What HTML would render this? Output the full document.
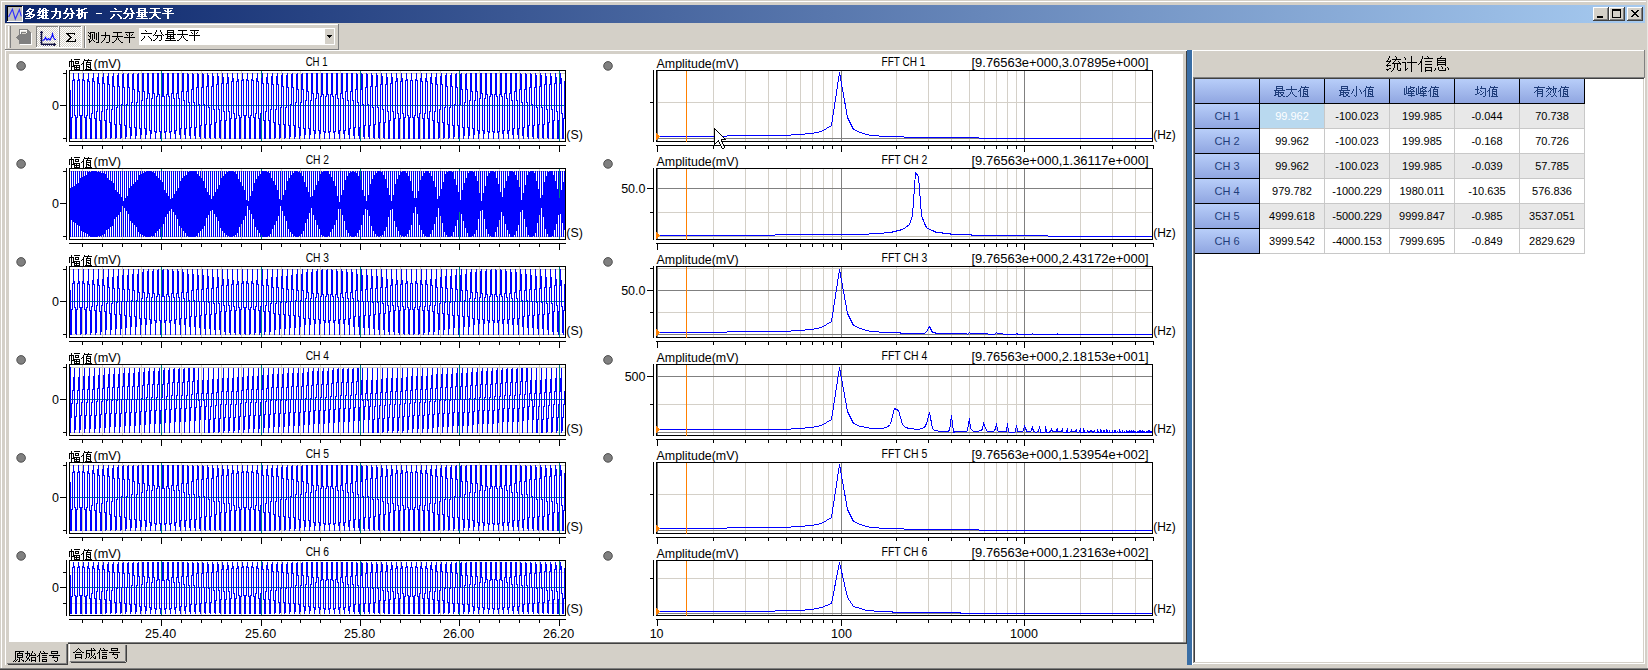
<!DOCTYPE html>
<html><head><meta charset="utf-8"><title>多维力分析 - 六分量天平</title>
<style>
html,body{margin:0;padding:0;background:#d4d0c8;width:1648px;height:670px;overflow:hidden}
svg{position:absolute;left:0;top:0;display:block}
svg path,svg rect,svg polyline{shape-rendering:crispEdges}
svg text{font-family:"Liberation Sans",sans-serif;white-space:pre}
</style></head><body>
<svg width="1648" height="670" viewBox="0 0 1648 670">
<defs>
<linearGradient id="tg" x1="0" y1="0" x2="1" y2="0"><stop offset="0" stop-color="#0a246a"/><stop offset="1" stop-color="#a6caf0"/></linearGradient>
<linearGradient id="hg" x1="0" y1="0" x2="0" y2="1"><stop offset="0" stop-color="#b8cef9"/><stop offset="1" stop-color="#90a6e1"/></linearGradient>
<pattern id="dz" width="2" height="2" patternUnits="userSpaceOnUse"><rect width="2" height="2" fill="#fff"/><rect width="1" height="1" fill="#d4d0c8"/><rect x="1" y="1" width="1" height="1" fill="#d4d0c8"/></pattern>
</defs>
<path fill="#fff" d="M1 1h1645v1h-1645zM1 1h1v667h-1z"/>
<path fill="#808080" d="M0 668h1648v1h-1648z"/>
<path fill="#404040" d="M0 669h1648v1h-1648z"/>
<path fill="#e9e7e3" d="M1647 0h1v668h-1z"/>
<rect x="5" y="5" width="1640" height="18" fill="url(#tg)"/>
<path fill="#c0c0c0" d="M7 6h16v16h-16z"/>
<path fill="#000" d="M7 6h15v1h-15zM7 6h1v15h-1z"/>
<path fill="#fff" d="M7 21h16v1h-16zM22 6h1v16h-1z"/>
<polyline points="8.6,17 12.4,9.3 15.3,19 19.4,9.6 21.3,16.3" fill="none" stroke="#3030ff" stroke-width="1.15" style="shape-rendering:geometricPrecision"/>
<path fill="#fff" d="M29 8h2v1h-2zM39 8h2v1h-2zM43 8h3v1h-3zM55 8h2v1h-2zM66 8h2v1h-2zM70 8h2v1h-2zM78 8h2v1h-2zM84 8h3v1h-3zM114 8h2v1h-2zM126 8h2v1h-2zM130 8h2v1h-2zM138 8h8v1h-8zM150 8h10v1h-10zM163 8h10v1h-10zM28 9h6v1h-6zM39 9h2v1h-2zM42 9h2v1h-2zM45 9h2v1h-2zM55 9h2v1h-2zM66 9h2v1h-2zM70 9h2v1h-2zM78 9h2v1h-2zM81 9h4v1h-4zM115 9h2v1h-2zM126 9h2v1h-2zM130 9h2v1h-2zM138 9h2v1h-2zM144 9h2v1h-2zM154 9h2v1h-2zM167 9h2v1h-2zM27 10h2v1h-2zM32 10h2v1h-2zM38 10h2v1h-2zM41 10h8v1h-8zM55 10h2v1h-2zM65 10h2v1h-2zM71 10h2v1h-2zM76 10h7v1h-7zM125 10h2v1h-2zM131 10h2v1h-2zM138 10h8v1h-8zM154 10h2v1h-2zM164 10h2v1h-2zM167 10h2v1h-2zM170 10h2v1h-2zM26 11h4v1h-4zM31 11h2v1h-2zM38 11h6v1h-6zM45 11h2v1h-2zM51 11h10v1h-10zM65 11h2v1h-2zM71 11h2v1h-2zM78 11h2v1h-2zM81 11h2v1h-2zM110 11h12v1h-12zM125 11h2v1h-2zM131 11h2v1h-2zM138 11h2v1h-2zM144 11h2v1h-2zM154 11h2v1h-2zM165 11h6v1h-6zM29 12h3v1h-3zM37 12h4v1h-4zM42 12h6v1h-6zM55 12h2v1h-2zM59 12h2v1h-2zM64 12h2v1h-2zM72 12h2v1h-2zM78 12h2v1h-2zM81 12h7v1h-7zM124 12h2v1h-2zM132 12h2v1h-2zM136 12h12v1h-12zM149 12h12v1h-12zM167 12h2v1h-2zM27 13h5v1h-5zM39 13h2v1h-2zM42 13h2v1h-2zM45 13h2v1h-2zM55 13h2v1h-2zM59 13h2v1h-2zM63 13h12v1h-12zM78 13h5v1h-5zM84 13h2v1h-2zM96 13h6v1h-6zM123 13h12v1h-12zM138 13h2v1h-2zM141 13h2v1h-2zM144 13h2v1h-2zM154 13h2v1h-2zM162 13h12v1h-12zM25 14h3v1h-3zM29 14h6v1h-6zM38 14h2v1h-2zM42 14h2v1h-2zM45 14h2v1h-2zM54 14h2v1h-2zM59 14h2v1h-2zM67 14h2v1h-2zM71 14h2v1h-2zM77 14h6v1h-6zM84 14h2v1h-2zM113 14h2v1h-2zM117 14h2v1h-2zM127 14h2v1h-2zM131 14h2v1h-2zM138 14h8v1h-8zM153 14h4v1h-4zM167 14h2v1h-2zM28 15h2v1h-2zM33 15h2v1h-2zM37 15h11v1h-11zM54 15h2v1h-2zM59 15h2v1h-2zM67 15h2v1h-2zM71 15h2v1h-2zM76 15h4v1h-4zM81 15h2v1h-2zM84 15h2v1h-2zM113 15h2v1h-2zM118 15h2v1h-2zM127 15h2v1h-2zM131 15h2v1h-2zM138 15h2v1h-2zM141 15h2v1h-2zM144 15h2v1h-2zM153 15h4v1h-4zM167 15h2v1h-2zM26 16h5v1h-5zM32 16h2v1h-2zM41 16h3v1h-3zM45 16h2v1h-2zM53 16h2v1h-2zM59 16h2v1h-2zM66 16h2v1h-2zM71 16h2v1h-2zM78 16h2v1h-2zM81 16h2v1h-2zM84 16h2v1h-2zM112 16h2v1h-2zM119 16h2v1h-2zM126 16h2v1h-2zM131 16h2v1h-2zM137 16h10v1h-10zM152 16h2v1h-2zM156 16h2v1h-2zM167 16h2v1h-2zM30 17h3v1h-3zM39 17h5v1h-5zM45 17h2v1h-2zM52 17h2v1h-2zM59 17h2v1h-2zM65 17h2v1h-2zM71 17h2v1h-2zM78 17h4v1h-4zM84 17h2v1h-2zM111 17h2v1h-2zM120 17h2v1h-2zM125 17h2v1h-2zM131 17h2v1h-2zM141 17h2v1h-2zM151 17h2v1h-2zM157 17h2v1h-2zM167 17h2v1h-2zM25 18h6v1h-6zM37 18h3v1h-3zM42 18h7v1h-7zM51 18h2v1h-2zM56 18h4v1h-4zM63 18h3v1h-3zM69 18h3v1h-3zM78 18h3v1h-3zM84 18h2v1h-2zM110 18h2v1h-2zM120 18h2v1h-2zM123 18h3v1h-3zM129 18h3v1h-3zM136 18h12v1h-12zM149 18h3v1h-3zM158 18h3v1h-3zM167 18h2v1h-2z"/>
<path fill="#d4d0c8" d="M1593 7h16v14h-16z"/>
<path fill="#fff" d="M1593 7h15v1h-15zM1593 7h1v13h-1z"/>
<path fill="#404040" d="M1593 20h16v1h-16zM1608 7h1v14h-1z"/>
<path fill="#808080" d="M1594 19h14v1h-14zM1607 8h1v12h-1z"/>
<path fill="#d4d0c8" d="M1609 7h16v14h-16z"/>
<path fill="#fff" d="M1609 7h15v1h-15zM1609 7h1v13h-1z"/>
<path fill="#404040" d="M1609 20h16v1h-16zM1624 7h1v14h-1z"/>
<path fill="#808080" d="M1610 19h14v1h-14zM1623 8h1v12h-1z"/>
<path fill="#d4d0c8" d="M1627 7h16v14h-16z"/>
<path fill="#fff" d="M1627 7h15v1h-15zM1627 7h1v13h-1z"/>
<path fill="#404040" d="M1627 20h16v1h-16zM1642 7h1v14h-1z"/>
<path fill="#808080" d="M1628 19h14v1h-14zM1641 8h1v12h-1z"/>
<path fill="#000" d="M1597 16h6v2h-6zM1612 9h9v2h-9zM1612 9h1v9h-1zM1620 9h1v9h-1zM1612 17h9v1h-9zM1631 10h2v1h-2zM1637 10h2v1h-2zM1632 11h2v1h-2zM1636 11h2v1h-2zM1633 12h2v1h-2zM1635 12h2v1h-2zM1634 13h2v1h-2zM1633 14h2v1h-2zM1635 14h2v1h-2zM1632 15h2v1h-2zM1636 15h2v1h-2zM1631 16h2v1h-2zM1637 16h2v1h-2z"/>
<path fill="#fff" d="M5 24h334v1h-334zM5 24h1v26h-1z"/>
<path fill="#808080" d="M5 49h334v1h-334zM338 24h1v26h-1z"/>
<path fill="#fff" d="M8 26h1v22h-1z"/>
<path fill="#d4d0c8" d="M9 26h1v22h-1z"/>
<path fill="#808080" d="M10 26h1v22h-1z"/>
<path fill="#fff" d="M20 30h8l4 4v11h-12v-4h-1l-2 -2v-1l2 -2h1z"/>
<path fill="#808080" d="M19 29h8l4 4v11h-12v-4h-1l-2 -2v-1l2 -2h1z"/>
<path fill="#fff" d="M20 30h7v1h-7zM20 31h1v3h-1z"/>
<path fill="#e8e6e0" d="M21 31h6v1h-6z"/>
<path fill="#fff" d="M26 32h1v1h-1z"/>
<path fill="#d4d0c8" d="M22 33h4v1h-4z"/>
<rect x="36" y="26" width="23" height="22" fill="url(#dz)"/>
<path fill="#808080" d="M36 26h23v1h-23zM36 26h1v22h-1z"/>
<path fill="#fff" d="M36 47h23v1h-23zM58 26h1v22h-1z"/>
<rect x="59" y="26" width="23" height="22" fill="url(#dz)"/>
<path fill="#808080" d="M59 26h23v1h-23zM59 26h1v22h-1z"/>
<path fill="#fff" d="M59 47h23v1h-23zM81 26h1v22h-1z"/>
<rect x="40.8" y="31" width="1.5" height="14" fill="#101040" shape-rendering="auto" style="shape-rendering:auto"/>
<rect x="41" y="43.6" width="14" height="1.4" fill="#101040" style="shape-rendering:auto"/>
<path fill="#101040" d="M40 32h3v1h-3zM54 43h1v3h-1zM55 44h1v1h-1z"/>
<path fill="#50507a" d="M40 34h1v1h-1zM40 36h1v1h-1zM40 38h1v1h-1zM40 40h1v1h-1zM40 42h1v1h-1zM43 45h1v1h-1zM45 45h1v1h-1zM47 45h1v1h-1zM49 45h1v1h-1zM51 45h1v1h-1zM53 45h1v1h-1z"/>
<polyline points="42.5,40.5 44.5,39.5 45.5,37.5 47,40 48.5,38.5 50,40 52,36 52.5,34 53.5,37.5 55,39.5 56,39.5" fill="none" stroke="#0000ff" stroke-width="1.1" style="shape-rendering:geometricPrecision"/>
<path fill="#000" d="M66 33h1v1h-1zM67 33h1v1h-1zM68 33h1v1h-1zM69 33h1v1h-1zM70 33h1v1h-1zM71 33h1v1h-1zM72 33h1v1h-1zM73 33h1v1h-1zM74 33h1v1h-1zM67 34h1v1h-1zM68 34h1v1h-1zM74 34h1v1h-1zM68 35h1v1h-1zM69 35h1v1h-1zM69 36h1v1h-1zM70 36h1v1h-1zM70 37h1v1h-1zM71 37h1v1h-1zM69 38h1v1h-1zM70 38h1v1h-1zM68 39h1v1h-1zM69 39h1v1h-1zM75 39h1v1h-1zM67 40h1v1h-1zM68 40h1v1h-1zM75 40h1v1h-1zM66 41h1v1h-1zM67 41h1v1h-1zM68 41h1v1h-1zM69 41h1v1h-1zM70 41h1v1h-1zM71 41h1v1h-1zM72 41h1v1h-1zM73 41h1v1h-1zM74 41h1v1h-1zM75 41h1v1h-1z"/>
<path fill="#808080" d="M84 26h1v22h-1z"/>
<path fill="#fff" d="M85 26h1v22h-1z"/>
<path fill="#000" d="M88 32h1v1h-1zM90 32h5v1h-5zM98 32h1v1h-1zM105 32h1v1h-1zM113 32h9v1h-9zM125 32h9v1h-9zM89 33h2v1h-2zM94 33h1v1h-1zM96 33h1v1h-1zM98 33h1v1h-1zM105 33h1v1h-1zM117 33h1v1h-1zM129 33h1v1h-1zM90 34h1v1h-1zM92 34h1v1h-1zM94 34h1v1h-1zM96 34h1v1h-1zM98 34h1v1h-1zM105 34h1v1h-1zM117 34h1v1h-1zM126 34h1v1h-1zM129 34h1v1h-1zM132 34h1v1h-1zM88 35h1v1h-1zM90 35h1v1h-1zM92 35h1v1h-1zM94 35h1v1h-1zM96 35h1v1h-1zM98 35h1v1h-1zM101 35h9v1h-9zM117 35h1v1h-1zM127 35h1v1h-1zM129 35h1v1h-1zM131 35h1v1h-1zM89 36h2v1h-2zM92 36h1v1h-1zM94 36h1v1h-1zM96 36h1v1h-1zM98 36h1v1h-1zM105 36h1v1h-1zM109 36h1v1h-1zM112 36h11v1h-11zM129 36h1v1h-1zM90 37h1v1h-1zM92 37h1v1h-1zM94 37h1v1h-1zM96 37h1v1h-1zM98 37h1v1h-1zM105 37h1v1h-1zM109 37h1v1h-1zM117 37h1v1h-1zM124 37h11v1h-11zM90 38h1v1h-1zM92 38h1v1h-1zM94 38h1v1h-1zM96 38h1v1h-1zM98 38h1v1h-1zM104 38h1v1h-1zM109 38h1v1h-1zM116 38h1v1h-1zM118 38h1v1h-1zM129 38h1v1h-1zM88 39h2v1h-2zM92 39h1v1h-1zM96 39h1v1h-1zM98 39h1v1h-1zM104 39h1v1h-1zM109 39h1v1h-1zM116 39h1v1h-1zM118 39h1v1h-1zM129 39h1v1h-1zM89 40h1v1h-1zM91 40h1v1h-1zM93 40h1v1h-1zM98 40h1v1h-1zM103 40h1v1h-1zM109 40h1v1h-1zM115 40h1v1h-1zM119 40h1v1h-1zM129 40h1v1h-1zM89 41h2v1h-2zM94 41h1v1h-1zM98 41h1v1h-1zM102 41h1v1h-1zM109 41h1v1h-1zM114 41h1v1h-1zM120 41h1v1h-1zM129 41h1v1h-1zM89 42h1v1h-1zM96 42h3v1h-3zM101 42h1v1h-1zM106 42h3v1h-3zM112 42h2v1h-2zM121 42h2v1h-2zM129 42h1v1h-1z"/>
<path fill="#fff" d="M139 28h196v17h-196z"/>
<path fill="#d4d0c8" d="M325 29h9v15h-9z"/>
<path fill="#000" d="M327 35h5v1h-5zM328 36h3v1h-3zM329 37h1v1h-1zM145 30h1v1h-1zM156 30h1v1h-1zM160 30h1v1h-1zM167 30h7v1h-7zM178 30h9v1h-9zM190 30h9v1h-9zM146 31h1v1h-1zM156 31h1v1h-1zM160 31h1v1h-1zM167 31h1v1h-1zM173 31h1v1h-1zM182 31h1v1h-1zM194 31h1v1h-1zM155 32h1v1h-1zM161 32h1v1h-1zM167 32h7v1h-7zM182 32h1v1h-1zM191 32h1v1h-1zM194 32h1v1h-1zM197 32h1v1h-1zM141 33h11v1h-11zM155 33h1v1h-1zM161 33h1v1h-1zM167 33h1v1h-1zM173 33h1v1h-1zM182 33h1v1h-1zM192 33h1v1h-1zM194 33h1v1h-1zM196 33h1v1h-1zM154 34h1v1h-1zM162 34h1v1h-1zM165 34h11v1h-11zM177 34h11v1h-11zM194 34h1v1h-1zM153 35h1v1h-1zM155 35h7v1h-7zM163 35h1v1h-1zM167 35h1v1h-1zM170 35h1v1h-1zM173 35h1v1h-1zM182 35h1v1h-1zM189 35h11v1h-11zM144 36h1v1h-1zM148 36h1v1h-1zM157 36h1v1h-1zM161 36h1v1h-1zM167 36h7v1h-7zM181 36h1v1h-1zM183 36h1v1h-1zM194 36h1v1h-1zM144 37h1v1h-1zM149 37h1v1h-1zM157 37h1v1h-1zM161 37h1v1h-1zM167 37h1v1h-1zM170 37h1v1h-1zM173 37h1v1h-1zM181 37h1v1h-1zM183 37h1v1h-1zM194 37h1v1h-1zM143 38h1v1h-1zM150 38h1v1h-1zM156 38h1v1h-1zM161 38h1v1h-1zM166 38h9v1h-9zM180 38h1v1h-1zM184 38h1v1h-1zM194 38h1v1h-1zM142 39h1v1h-1zM151 39h1v1h-1zM155 39h1v1h-1zM161 39h1v1h-1zM170 39h1v1h-1zM179 39h1v1h-1zM185 39h1v1h-1zM194 39h1v1h-1zM141 40h1v1h-1zM151 40h1v1h-1zM153 40h2v1h-2zM159 40h2v1h-2zM165 40h11v1h-11zM177 40h2v1h-2zM186 40h2v1h-2zM194 40h1v1h-1z"/>
<path fill="#fff" d="M5 50h1639v1h-1639zM5 50h1v615h-1zM9 54h1174v588h-1174z"/>
<path fill="#808080" d="M68 642h1119v1h-1119z"/>
<path fill="#404040" d="M68 643h1119v1h-1119zM1186 51h1v593h-1z"/>
<path fill="#3a6ea5" d="M1187 50h5v615h-5z"/>
<path fill="#fff" d="M1192 50h1v615h-1z"/>
<path fill="#808080" d="M1644 50h1v28h-1z"/>
<path fill="#fff" d="M1195 79h449v583h-449z"/>
<path fill="#808080" d="M1193 77h451v1h-451z"/>
<path fill="#404040" d="M1194 78h450v1h-450z"/>
<path fill="#808080" d="M1193 77h1v586h-1z"/>
<path fill="#404040" d="M1194 78h1v584h-1z"/>
<path fill="#fff" d="M1193 663h452v1h-452zM1644 78h1v586h-1z"/>
<path fill="#d4d0c8" d="M1195 662h449v1h-449zM1643 79h1v584h-1z"/>
<path fill="#000" d="M1389 56h1v1h-1zM1395 56h1v1h-1zM1411 56h1v1h-1zM1422 56h1v1h-1zM1427 56h1v1h-1zM1441 56h1v1h-1zM1389 57h1v1h-1zM1396 57h1v1h-1zM1404 57h1v1h-1zM1411 57h1v1h-1zM1422 57h1v1h-1zM1428 57h1v1h-1zM1440 57h1v1h-1zM1388 58h1v1h-1zM1396 58h1v1h-1zM1405 58h1v1h-1zM1411 58h1v1h-1zM1422 58h1v1h-1zM1424 58h9v1h-9zM1437 58h9v1h-9zM1388 59h1v1h-1zM1392 59h9v1h-9zM1405 59h1v1h-1zM1411 59h1v1h-1zM1421 59h1v1h-1zM1437 59h1v1h-1zM1445 59h1v1h-1zM1387 60h1v1h-1zM1390 60h1v1h-1zM1395 60h1v1h-1zM1411 60h1v1h-1zM1421 60h1v1h-1zM1437 60h9v1h-9zM1386 61h5v1h-5zM1394 61h1v1h-1zM1398 61h1v1h-1zM1411 61h1v1h-1zM1420 61h2v1h-2zM1425 61h7v1h-7zM1437 61h1v1h-1zM1445 61h1v1h-1zM1389 62h1v1h-1zM1393 62h1v1h-1zM1399 62h1v1h-1zM1402 62h4v1h-4zM1407 62h10v1h-10zM1420 62h2v1h-2zM1437 62h9v1h-9zM1388 63h1v1h-1zM1392 63h9v1h-9zM1405 63h1v1h-1zM1411 63h1v1h-1zM1419 63h1v1h-1zM1421 63h1v1h-1zM1437 63h1v1h-1zM1445 63h1v1h-1zM1387 64h1v1h-1zM1394 64h1v1h-1zM1397 64h1v1h-1zM1400 64h1v1h-1zM1405 64h1v1h-1zM1411 64h1v1h-1zM1418 64h1v1h-1zM1421 64h1v1h-1zM1425 64h7v1h-7zM1437 64h9v1h-9zM1386 65h5v1h-5zM1394 65h1v1h-1zM1397 65h1v1h-1zM1405 65h1v1h-1zM1411 65h1v1h-1zM1421 65h1v1h-1zM1437 65h1v1h-1zM1445 65h1v1h-1zM1387 66h1v1h-1zM1394 66h1v1h-1zM1397 66h1v1h-1zM1405 66h1v1h-1zM1411 66h1v1h-1zM1421 66h1v1h-1zM1441 66h1v1h-1zM1394 67h1v1h-1zM1397 67h1v1h-1zM1405 67h1v1h-1zM1411 67h1v1h-1zM1421 67h1v1h-1zM1425 67h7v1h-7zM1438 67h1v1h-1zM1442 67h1v1h-1zM1447 67h1v1h-1zM1389 68h2v1h-2zM1393 68h1v1h-1zM1397 68h1v1h-1zM1400 68h1v1h-1zM1405 68h1v1h-1zM1407 68h1v1h-1zM1411 68h1v1h-1zM1421 68h1v1h-1zM1425 68h1v1h-1zM1431 68h1v1h-1zM1435 68h1v1h-1zM1438 68h1v1h-1zM1442 68h1v1h-1zM1445 68h1v1h-1zM1448 68h1v1h-1zM1386 69h3v1h-3zM1393 69h1v1h-1zM1397 69h1v1h-1zM1400 69h1v1h-1zM1405 69h2v1h-2zM1411 69h1v1h-1zM1421 69h1v1h-1zM1425 69h1v1h-1zM1431 69h1v1h-1zM1435 69h1v1h-1zM1438 69h1v1h-1zM1445 69h1v1h-1zM1448 69h1v1h-1zM1387 70h1v1h-1zM1392 70h1v1h-1zM1398 70h3v1h-3zM1405 70h1v1h-1zM1411 70h1v1h-1zM1421 70h1v1h-1zM1425 70h7v1h-7zM1434 70h1v1h-1zM1439 70h7v1h-7zM1391 71h1v1h-1zM1411 71h1v1h-1zM1421 71h1v1h-1zM1425 71h1v1h-1zM1431 71h1v1h-1z"/>
<path fill="#d4d0c8" d="M6 642h62v22h-62z"/>
<path fill="#808080" d="M7 663h60v1h-60z"/>
<path fill="#404040" d="M8 664h60v1h-60zM67 644h1v20h-1z"/>
<path fill="#808080" d="M66 644h1v19h-1z"/>
<path fill="#000" d="M15 651h9v1h-9zM27 651h1v1h-1zM32 651h1v1h-1zM40 651h1v1h-1zM43 651h1v1h-1zM51 651h7v1h-7zM15 652h1v1h-1zM19 652h1v1h-1zM27 652h1v1h-1zM32 652h1v1h-1zM40 652h1v1h-1zM44 652h1v1h-1zM51 652h1v1h-1zM57 652h1v1h-1zM15 653h1v1h-1zM17 653h6v1h-6zM25 653h5v1h-5zM31 653h1v1h-1zM34 653h1v1h-1zM39 653h1v1h-1zM41 653h7v1h-7zM51 653h7v1h-7zM15 654h1v1h-1zM17 654h1v1h-1zM22 654h1v1h-1zM27 654h1v1h-1zM29 654h1v1h-1zM31 654h1v1h-1zM35 654h1v1h-1zM39 654h1v1h-1zM15 655h1v1h-1zM17 655h6v1h-6zM27 655h1v1h-1zM29 655h7v1h-7zM38 655h2v1h-2zM42 655h5v1h-5zM49 655h11v1h-11zM15 656h1v1h-1zM17 656h1v1h-1zM22 656h1v1h-1zM26 656h1v1h-1zM29 656h1v1h-1zM37 656h1v1h-1zM39 656h1v1h-1zM53 656h1v1h-1zM15 657h1v1h-1zM17 657h6v1h-6zM26 657h1v1h-1zM28 657h1v1h-1zM31 657h5v1h-5zM39 657h1v1h-1zM42 657h5v1h-5zM52 657h6v1h-6zM15 658h1v1h-1zM19 658h1v1h-1zM27 658h2v1h-2zM31 658h1v1h-1zM35 658h1v1h-1zM39 658h1v1h-1zM57 658h1v1h-1zM15 659h1v1h-1zM17 659h1v1h-1zM19 659h1v1h-1zM21 659h1v1h-1zM27 659h1v1h-1zM29 659h1v1h-1zM31 659h1v1h-1zM35 659h1v1h-1zM39 659h1v1h-1zM42 659h5v1h-5zM57 659h1v1h-1zM14 660h1v1h-1zM16 660h1v1h-1zM19 660h1v1h-1zM22 660h2v1h-2zM26 660h1v1h-1zM29 660h1v1h-1zM31 660h5v1h-5zM39 660h1v1h-1zM42 660h1v1h-1zM46 660h1v1h-1zM54 660h1v1h-1zM57 660h1v1h-1zM13 661h1v1h-1zM15 661h1v1h-1zM18 661h2v1h-2zM23 661h1v1h-1zM25 661h1v1h-1zM31 661h1v1h-1zM35 661h1v1h-1zM39 661h1v1h-1zM42 661h5v1h-5zM55 661h2v1h-2z"/>
<path fill="#fff" d="M69 644h1v17h-1z"/>
<path fill="#808080" d="M70 661h55v1h-55z"/>
<path fill="#404040" d="M71 662h55v1h-55z"/>
<path fill="#808080" d="M125 645h1v16h-1z"/>
<path fill="#404040" d="M126 645h1v17h-1z"/>
<path fill="#000" d="M78 648h1v1h-1zM91 648h1v1h-1zM93 648h1v1h-1zM100 648h1v1h-1zM103 648h1v1h-1zM111 648h7v1h-7zM77 649h1v1h-1zM79 649h1v1h-1zM91 649h1v1h-1zM94 649h1v1h-1zM100 649h1v1h-1zM104 649h1v1h-1zM111 649h1v1h-1zM117 649h1v1h-1zM76 650h1v1h-1zM80 650h1v1h-1zM86 650h10v1h-10zM99 650h1v1h-1zM101 650h7v1h-7zM111 650h7v1h-7zM75 651h1v1h-1zM81 651h1v1h-1zM86 651h1v1h-1zM91 651h1v1h-1zM99 651h1v1h-1zM73 652h2v1h-2zM76 652h5v1h-5zM82 652h2v1h-2zM86 652h1v1h-1zM91 652h1v1h-1zM98 652h2v1h-2zM102 652h5v1h-5zM109 652h11v1h-11zM86 653h4v1h-4zM91 653h1v1h-1zM94 653h1v1h-1zM97 653h1v1h-1zM99 653h1v1h-1zM113 653h1v1h-1zM75 654h7v1h-7zM86 654h1v1h-1zM89 654h1v1h-1zM91 654h1v1h-1zM94 654h1v1h-1zM99 654h1v1h-1zM102 654h5v1h-5zM112 654h6v1h-6zM75 655h1v1h-1zM81 655h1v1h-1zM86 655h1v1h-1zM89 655h1v1h-1zM91 655h1v1h-1zM93 655h1v1h-1zM99 655h1v1h-1zM117 655h1v1h-1zM75 656h1v1h-1zM81 656h1v1h-1zM86 656h1v1h-1zM89 656h1v1h-1zM92 656h1v1h-1zM95 656h1v1h-1zM99 656h1v1h-1zM102 656h5v1h-5zM117 656h1v1h-1zM75 657h7v1h-7zM86 657h1v1h-1zM88 657h1v1h-1zM91 657h1v1h-1zM93 657h1v1h-1zM95 657h1v1h-1zM99 657h1v1h-1zM102 657h1v1h-1zM106 657h1v1h-1zM114 657h1v1h-1zM117 657h1v1h-1zM75 658h1v1h-1zM81 658h1v1h-1zM85 658h1v1h-1zM90 658h1v1h-1zM94 658h2v1h-2zM99 658h1v1h-1zM102 658h5v1h-5zM115 658h2v1h-2z"/>
<rect x="1195" y="79" width="64" height="24" fill="url(#hg)"/>
<path fill="#000" d="M1195 103h65v1h-65zM1259 79h1v25h-1z"/>
<rect x="1260" y="79" width="64" height="24" fill="url(#hg)"/>
<path fill="#000" d="M1260 103h65v1h-65zM1324 79h1v25h-1z"/>
<path fill="#1f3d7a" d="M1276 86h7v1h-7zM1291 86h1v1h-1zM1301 86h1v1h-1zM1305 86h1v1h-1zM1276 87h1v1h-1zM1282 87h1v1h-1zM1291 87h1v1h-1zM1301 87h8v1h-8zM1276 88h7v1h-7zM1291 88h1v1h-1zM1300 88h1v1h-1zM1304 88h1v1h-1zM1276 89h1v1h-1zM1282 89h1v1h-1zM1286 89h11v1h-11zM1300 89h1v1h-1zM1303 89h5v1h-5zM1274 90h11v1h-11zM1291 90h1v1h-1zM1299 90h2v1h-2zM1303 90h1v1h-1zM1307 90h1v1h-1zM1275 91h1v1h-1zM1278 91h1v1h-1zM1291 91h1v1h-1zM1298 91h1v1h-1zM1300 91h1v1h-1zM1303 91h5v1h-5zM1275 92h9v1h-9zM1290 92h1v1h-1zM1292 92h1v1h-1zM1300 92h1v1h-1zM1303 92h1v1h-1zM1307 92h1v1h-1zM1275 93h1v1h-1zM1278 93h1v1h-1zM1280 93h1v1h-1zM1283 93h1v1h-1zM1290 93h1v1h-1zM1292 93h1v1h-1zM1300 93h1v1h-1zM1303 93h3v1h-3zM1307 93h1v1h-1zM1275 94h4v1h-4zM1281 94h2v1h-2zM1289 94h1v1h-1zM1293 94h1v1h-1zM1300 94h1v1h-1zM1303 94h1v1h-1zM1305 94h3v1h-3zM1274 95h2v1h-2zM1278 95h1v1h-1zM1281 95h2v1h-2zM1288 95h1v1h-1zM1294 95h1v1h-1zM1300 95h1v1h-1zM1303 95h1v1h-1zM1307 95h1v1h-1zM1278 96h3v1h-3zM1283 96h2v1h-2zM1286 96h2v1h-2zM1295 96h2v1h-2zM1300 96h1v1h-1zM1302 96h7v1h-7z"/>
<rect x="1325" y="79" width="64" height="24" fill="url(#hg)"/>
<path fill="#000" d="M1325 103h65v1h-65zM1389 79h1v25h-1z"/>
<path fill="#1f3d7a" d="M1341 86h7v1h-7zM1356 86h1v1h-1zM1366 86h1v1h-1zM1370 86h1v1h-1zM1341 87h1v1h-1zM1347 87h1v1h-1zM1356 87h1v1h-1zM1366 87h8v1h-8zM1341 88h7v1h-7zM1356 88h1v1h-1zM1365 88h1v1h-1zM1369 88h1v1h-1zM1341 89h1v1h-1zM1347 89h1v1h-1zM1353 89h1v1h-1zM1356 89h1v1h-1zM1359 89h1v1h-1zM1365 89h1v1h-1zM1368 89h5v1h-5zM1339 90h11v1h-11zM1353 90h1v1h-1zM1356 90h1v1h-1zM1360 90h1v1h-1zM1364 90h2v1h-2zM1368 90h1v1h-1zM1372 90h1v1h-1zM1340 91h1v1h-1zM1343 91h1v1h-1zM1352 91h1v1h-1zM1356 91h1v1h-1zM1360 91h1v1h-1zM1363 91h1v1h-1zM1365 91h1v1h-1zM1368 91h5v1h-5zM1340 92h9v1h-9zM1352 92h1v1h-1zM1356 92h1v1h-1zM1361 92h1v1h-1zM1365 92h1v1h-1zM1368 92h1v1h-1zM1372 92h1v1h-1zM1340 93h1v1h-1zM1343 93h1v1h-1zM1345 93h1v1h-1zM1348 93h1v1h-1zM1351 93h1v1h-1zM1356 93h1v1h-1zM1361 93h1v1h-1zM1365 93h1v1h-1zM1368 93h3v1h-3zM1372 93h1v1h-1zM1340 94h4v1h-4zM1346 94h2v1h-2zM1356 94h1v1h-1zM1365 94h1v1h-1zM1368 94h1v1h-1zM1370 94h3v1h-3zM1339 95h2v1h-2zM1343 95h1v1h-1zM1346 95h2v1h-2zM1354 95h1v1h-1zM1356 95h1v1h-1zM1365 95h1v1h-1zM1368 95h1v1h-1zM1372 95h1v1h-1zM1343 96h3v1h-3zM1348 96h2v1h-2zM1355 96h1v1h-1zM1365 96h1v1h-1zM1367 96h7v1h-7z"/>
<rect x="1390" y="79" width="64" height="24" fill="url(#hg)"/>
<path fill="#000" d="M1390 103h65v1h-65zM1454 79h1v25h-1z"/>
<path fill="#1f3d7a" d="M1406 86h1v1h-1zM1410 86h1v1h-1zM1418 86h1v1h-1zM1422 86h1v1h-1zM1431 86h1v1h-1zM1435 86h1v1h-1zM1406 87h1v1h-1zM1410 87h5v1h-5zM1418 87h1v1h-1zM1422 87h5v1h-5zM1431 87h8v1h-8zM1404 88h1v1h-1zM1406 88h1v1h-1zM1408 88h3v1h-3zM1413 88h1v1h-1zM1416 88h1v1h-1zM1418 88h1v1h-1zM1420 88h3v1h-3zM1425 88h1v1h-1zM1430 88h1v1h-1zM1434 88h1v1h-1zM1404 89h1v1h-1zM1406 89h1v1h-1zM1408 89h1v1h-1zM1411 89h2v1h-2zM1416 89h1v1h-1zM1418 89h1v1h-1zM1420 89h1v1h-1zM1423 89h2v1h-2zM1430 89h1v1h-1zM1433 89h5v1h-5zM1404 90h1v1h-1zM1406 90h1v1h-1zM1408 90h1v1h-1zM1410 90h1v1h-1zM1413 90h1v1h-1zM1416 90h1v1h-1zM1418 90h1v1h-1zM1420 90h1v1h-1zM1422 90h1v1h-1zM1425 90h1v1h-1zM1429 90h2v1h-2zM1433 90h1v1h-1zM1437 90h1v1h-1zM1404 91h1v1h-1zM1406 91h1v1h-1zM1408 91h7v1h-7zM1416 91h1v1h-1zM1418 91h1v1h-1zM1420 91h7v1h-7zM1428 91h1v1h-1zM1430 91h1v1h-1zM1433 91h5v1h-5zM1404 92h1v1h-1zM1406 92h1v1h-1zM1408 92h1v1h-1zM1411 92h1v1h-1zM1416 92h1v1h-1zM1418 92h1v1h-1zM1420 92h1v1h-1zM1423 92h1v1h-1zM1430 92h1v1h-1zM1433 92h1v1h-1zM1437 92h1v1h-1zM1404 93h1v1h-1zM1406 93h8v1h-8zM1416 93h1v1h-1zM1418 93h8v1h-8zM1430 93h1v1h-1zM1433 93h3v1h-3zM1437 93h1v1h-1zM1404 94h2v1h-2zM1411 94h1v1h-1zM1416 94h2v1h-2zM1423 94h1v1h-1zM1430 94h1v1h-1zM1433 94h1v1h-1zM1435 94h3v1h-3zM1408 95h7v1h-7zM1420 95h7v1h-7zM1430 95h1v1h-1zM1433 95h1v1h-1zM1437 95h1v1h-1zM1411 96h1v1h-1zM1423 96h1v1h-1zM1430 96h1v1h-1zM1432 96h7v1h-7z"/>
<rect x="1455" y="79" width="64" height="24" fill="url(#hg)"/>
<path fill="#000" d="M1455 103h65v1h-65zM1519 79h1v25h-1z"/>
<path fill="#1f3d7a" d="M1477 86h1v1h-1zM1481 86h1v1h-1zM1490 86h1v1h-1zM1494 86h1v1h-1zM1477 87h1v1h-1zM1481 87h1v1h-1zM1490 87h8v1h-8zM1477 88h1v1h-1zM1480 88h6v1h-6zM1489 88h1v1h-1zM1493 88h1v1h-1zM1475 89h4v1h-4zM1485 89h1v1h-1zM1489 89h1v1h-1zM1492 89h5v1h-5zM1477 90h1v1h-1zM1480 90h1v1h-1zM1485 90h1v1h-1zM1488 90h2v1h-2zM1492 90h1v1h-1zM1496 90h1v1h-1zM1477 91h1v1h-1zM1481 91h1v1h-1zM1485 91h1v1h-1zM1487 91h1v1h-1zM1489 91h1v1h-1zM1492 91h5v1h-5zM1477 92h1v1h-1zM1479 92h1v1h-1zM1483 92h1v1h-1zM1485 92h1v1h-1zM1489 92h1v1h-1zM1492 92h1v1h-1zM1496 92h1v1h-1zM1477 93h2v1h-2zM1482 93h1v1h-1zM1485 93h1v1h-1zM1489 93h1v1h-1zM1492 93h3v1h-3zM1496 93h1v1h-1zM1475 94h2v1h-2zM1480 94h2v1h-2zM1485 94h1v1h-1zM1489 94h1v1h-1zM1492 94h1v1h-1zM1494 94h3v1h-3zM1485 95h1v1h-1zM1489 95h1v1h-1zM1492 95h1v1h-1zM1496 95h1v1h-1zM1483 96h2v1h-2zM1489 96h1v1h-1zM1491 96h7v1h-7z"/>
<rect x="1520" y="79" width="64" height="24" fill="url(#hg)"/>
<path fill="#000" d="M1520 103h65v1h-65zM1584 79h1v25h-1z"/>
<path fill="#1f3d7a" d="M1538 86h1v1h-1zM1548 86h1v1h-1zM1553 86h1v1h-1zM1561 86h1v1h-1zM1565 86h1v1h-1zM1534 87h11v1h-11zM1549 87h1v1h-1zM1553 87h1v1h-1zM1561 87h8v1h-8zM1537 88h1v1h-1zM1546 88h6v1h-6zM1553 88h4v1h-4zM1560 88h1v1h-1zM1564 88h1v1h-1zM1537 89h6v1h-6zM1548 89h1v1h-1zM1550 89h1v1h-1zM1552 89h2v1h-2zM1555 89h1v1h-1zM1560 89h1v1h-1zM1563 89h5v1h-5zM1536 90h2v1h-2zM1542 90h1v1h-1zM1547 90h1v1h-1zM1551 90h1v1h-1zM1553 90h1v1h-1zM1555 90h1v1h-1zM1559 90h2v1h-2zM1563 90h1v1h-1zM1567 90h1v1h-1zM1535 91h1v1h-1zM1537 91h6v1h-6zM1546 91h1v1h-1zM1550 91h1v1h-1zM1553 91h1v1h-1zM1555 91h1v1h-1zM1558 91h1v1h-1zM1560 91h1v1h-1zM1563 91h5v1h-5zM1534 92h1v1h-1zM1537 92h1v1h-1zM1542 92h1v1h-1zM1548 92h1v1h-1zM1550 92h1v1h-1zM1553 92h1v1h-1zM1555 92h1v1h-1zM1560 92h1v1h-1zM1563 92h1v1h-1zM1567 92h1v1h-1zM1537 93h6v1h-6zM1549 93h1v1h-1zM1554 93h1v1h-1zM1560 93h1v1h-1zM1563 93h3v1h-3zM1567 93h1v1h-1zM1537 94h1v1h-1zM1542 94h1v1h-1zM1548 94h1v1h-1zM1550 94h1v1h-1zM1554 94h1v1h-1zM1560 94h1v1h-1zM1563 94h1v1h-1zM1565 94h3v1h-3zM1537 95h1v1h-1zM1542 95h1v1h-1zM1547 95h1v1h-1zM1553 95h1v1h-1zM1555 95h1v1h-1zM1560 95h1v1h-1zM1563 95h1v1h-1zM1567 95h1v1h-1zM1537 96h1v1h-1zM1541 96h2v1h-2zM1546 96h1v1h-1zM1551 96h2v1h-2zM1556 96h1v1h-1zM1560 96h1v1h-1zM1562 96h7v1h-7z"/>
<rect x="1195" y="104" width="64" height="24" fill="url(#hg)"/>
<path fill="#000" d="M1195 128h65v1h-65zM1259 104h1v25h-1z"/>
<text x="1227" y="120" font-size="11" fill="#1f3d7a" text-anchor="middle">CH 1</text>
<path fill="#b9d9ef" d="M1260 104h64v24h-64z"/>
<path fill="#c8c8c8" d="M1260 128h65v1h-65zM1324 104h1v25h-1z"/>
<text x="1292" y="120" font-size="11" fill="#fff" text-anchor="middle">99.962</text>
<path fill="#e8e8e8" d="M1325 104h64v24h-64z"/>
<path fill="#c8c8c8" d="M1325 128h65v1h-65zM1389 104h1v25h-1z"/>
<text x="1357" y="120" font-size="11" fill="#000" text-anchor="middle">-100.023</text>
<path fill="#e8e8e8" d="M1390 104h64v24h-64z"/>
<path fill="#c8c8c8" d="M1390 128h65v1h-65zM1454 104h1v25h-1z"/>
<text x="1422" y="120" font-size="11" fill="#000" text-anchor="middle">199.985</text>
<path fill="#e8e8e8" d="M1455 104h64v24h-64z"/>
<path fill="#c8c8c8" d="M1455 128h65v1h-65zM1519 104h1v25h-1z"/>
<text x="1487" y="120" font-size="11" fill="#000" text-anchor="middle">-0.044</text>
<path fill="#e8e8e8" d="M1520 104h64v24h-64z"/>
<path fill="#c8c8c8" d="M1520 128h65v1h-65zM1584 104h1v25h-1z"/>
<text x="1552" y="120" font-size="11" fill="#000" text-anchor="middle">70.738</text>
<rect x="1195" y="129" width="64" height="24" fill="url(#hg)"/>
<path fill="#000" d="M1195 153h65v1h-65zM1259 129h1v25h-1z"/>
<text x="1227" y="145" font-size="11" fill="#1f3d7a" text-anchor="middle">CH 2</text>
<path fill="#fff" d="M1260 129h64v24h-64z"/>
<path fill="#c8c8c8" d="M1260 153h65v1h-65zM1324 129h1v25h-1z"/>
<text x="1292" y="145" font-size="11" fill="#000" text-anchor="middle">99.962</text>
<path fill="#fff" d="M1325 129h64v24h-64z"/>
<path fill="#c8c8c8" d="M1325 153h65v1h-65zM1389 129h1v25h-1z"/>
<text x="1357" y="145" font-size="11" fill="#000" text-anchor="middle">-100.023</text>
<path fill="#fff" d="M1390 129h64v24h-64z"/>
<path fill="#c8c8c8" d="M1390 153h65v1h-65zM1454 129h1v25h-1z"/>
<text x="1422" y="145" font-size="11" fill="#000" text-anchor="middle">199.985</text>
<path fill="#fff" d="M1455 129h64v24h-64z"/>
<path fill="#c8c8c8" d="M1455 153h65v1h-65zM1519 129h1v25h-1z"/>
<text x="1487" y="145" font-size="11" fill="#000" text-anchor="middle">-0.168</text>
<path fill="#fff" d="M1520 129h64v24h-64z"/>
<path fill="#c8c8c8" d="M1520 153h65v1h-65zM1584 129h1v25h-1z"/>
<text x="1552" y="145" font-size="11" fill="#000" text-anchor="middle">70.726</text>
<rect x="1195" y="154" width="64" height="24" fill="url(#hg)"/>
<path fill="#000" d="M1195 178h65v1h-65zM1259 154h1v25h-1z"/>
<text x="1227" y="170" font-size="11" fill="#1f3d7a" text-anchor="middle">CH 3</text>
<path fill="#e8e8e8" d="M1260 154h64v24h-64z"/>
<path fill="#c8c8c8" d="M1260 178h65v1h-65zM1324 154h1v25h-1z"/>
<text x="1292" y="170" font-size="11" fill="#000" text-anchor="middle">99.962</text>
<path fill="#e8e8e8" d="M1325 154h64v24h-64z"/>
<path fill="#c8c8c8" d="M1325 178h65v1h-65zM1389 154h1v25h-1z"/>
<text x="1357" y="170" font-size="11" fill="#000" text-anchor="middle">-100.023</text>
<path fill="#e8e8e8" d="M1390 154h64v24h-64z"/>
<path fill="#c8c8c8" d="M1390 178h65v1h-65zM1454 154h1v25h-1z"/>
<text x="1422" y="170" font-size="11" fill="#000" text-anchor="middle">199.985</text>
<path fill="#e8e8e8" d="M1455 154h64v24h-64z"/>
<path fill="#c8c8c8" d="M1455 178h65v1h-65zM1519 154h1v25h-1z"/>
<text x="1487" y="170" font-size="11" fill="#000" text-anchor="middle">-0.039</text>
<path fill="#e8e8e8" d="M1520 154h64v24h-64z"/>
<path fill="#c8c8c8" d="M1520 178h65v1h-65zM1584 154h1v25h-1z"/>
<text x="1552" y="170" font-size="11" fill="#000" text-anchor="middle">57.785</text>
<rect x="1195" y="179" width="64" height="24" fill="url(#hg)"/>
<path fill="#000" d="M1195 203h65v1h-65zM1259 179h1v25h-1z"/>
<text x="1227" y="195" font-size="11" fill="#1f3d7a" text-anchor="middle">CH 4</text>
<path fill="#fff" d="M1260 179h64v24h-64z"/>
<path fill="#c8c8c8" d="M1260 203h65v1h-65zM1324 179h1v25h-1z"/>
<text x="1292" y="195" font-size="11" fill="#000" text-anchor="middle">979.782</text>
<path fill="#fff" d="M1325 179h64v24h-64z"/>
<path fill="#c8c8c8" d="M1325 203h65v1h-65zM1389 179h1v25h-1z"/>
<text x="1357" y="195" font-size="11" fill="#000" text-anchor="middle">-1000.229</text>
<path fill="#fff" d="M1390 179h64v24h-64z"/>
<path fill="#c8c8c8" d="M1390 203h65v1h-65zM1454 179h1v25h-1z"/>
<text x="1422" y="195" font-size="11" fill="#000" text-anchor="middle">1980.011</text>
<path fill="#fff" d="M1455 179h64v24h-64z"/>
<path fill="#c8c8c8" d="M1455 203h65v1h-65zM1519 179h1v25h-1z"/>
<text x="1487" y="195" font-size="11" fill="#000" text-anchor="middle">-10.635</text>
<path fill="#fff" d="M1520 179h64v24h-64z"/>
<path fill="#c8c8c8" d="M1520 203h65v1h-65zM1584 179h1v25h-1z"/>
<text x="1552" y="195" font-size="11" fill="#000" text-anchor="middle">576.836</text>
<rect x="1195" y="204" width="64" height="24" fill="url(#hg)"/>
<path fill="#000" d="M1195 228h65v1h-65zM1259 204h1v25h-1z"/>
<text x="1227" y="220" font-size="11" fill="#1f3d7a" text-anchor="middle">CH 5</text>
<path fill="#e8e8e8" d="M1260 204h64v24h-64z"/>
<path fill="#c8c8c8" d="M1260 228h65v1h-65zM1324 204h1v25h-1z"/>
<text x="1292" y="220" font-size="11" fill="#000" text-anchor="middle">4999.618</text>
<path fill="#e8e8e8" d="M1325 204h64v24h-64z"/>
<path fill="#c8c8c8" d="M1325 228h65v1h-65zM1389 204h1v25h-1z"/>
<text x="1357" y="220" font-size="11" fill="#000" text-anchor="middle">-5000.229</text>
<path fill="#e8e8e8" d="M1390 204h64v24h-64z"/>
<path fill="#c8c8c8" d="M1390 228h65v1h-65zM1454 204h1v25h-1z"/>
<text x="1422" y="220" font-size="11" fill="#000" text-anchor="middle">9999.847</text>
<path fill="#e8e8e8" d="M1455 204h64v24h-64z"/>
<path fill="#c8c8c8" d="M1455 228h65v1h-65zM1519 204h1v25h-1z"/>
<text x="1487" y="220" font-size="11" fill="#000" text-anchor="middle">-0.985</text>
<path fill="#e8e8e8" d="M1520 204h64v24h-64z"/>
<path fill="#c8c8c8" d="M1520 228h65v1h-65zM1584 204h1v25h-1z"/>
<text x="1552" y="220" font-size="11" fill="#000" text-anchor="middle">3537.051</text>
<rect x="1195" y="229" width="64" height="24" fill="url(#hg)"/>
<path fill="#000" d="M1195 253h65v1h-65zM1259 229h1v25h-1z"/>
<text x="1227" y="245" font-size="11" fill="#1f3d7a" text-anchor="middle">CH 6</text>
<path fill="#fff" d="M1260 229h64v24h-64z"/>
<path fill="#c8c8c8" d="M1260 253h65v1h-65zM1324 229h1v25h-1z"/>
<text x="1292" y="245" font-size="11" fill="#000" text-anchor="middle">3999.542</text>
<path fill="#fff" d="M1325 229h64v24h-64z"/>
<path fill="#c8c8c8" d="M1325 253h65v1h-65zM1389 229h1v25h-1z"/>
<text x="1357" y="245" font-size="11" fill="#000" text-anchor="middle">-4000.153</text>
<path fill="#fff" d="M1390 229h64v24h-64z"/>
<path fill="#c8c8c8" d="M1390 253h65v1h-65zM1454 229h1v25h-1z"/>
<text x="1422" y="245" font-size="11" fill="#000" text-anchor="middle">7999.695</text>
<path fill="#fff" d="M1455 229h64v24h-64z"/>
<path fill="#c8c8c8" d="M1455 253h65v1h-65zM1519 229h1v25h-1z"/>
<text x="1487" y="245" font-size="11" fill="#000" text-anchor="middle">-0.849</text>
<path fill="#fff" d="M1520 229h64v24h-64z"/>
<path fill="#c8c8c8" d="M1520 253h65v1h-65zM1584 229h1v25h-1z"/>
<text x="1552" y="245" font-size="11" fill="#000" text-anchor="middle">2829.629</text>
<circle cx="21.1" cy="65.9" r="4.3" fill="#808080" stroke="#505050" stroke-width="1" style="shape-rendering:geometricPrecision"/>
<path fill="#d4d0c8" d="M82 71h1v70h-1zM102 71h1v70h-1zM122 71h1v70h-1zM141 71h1v70h-1zM181 71h1v70h-1zM201 71h1v70h-1zM221 71h1v70h-1zM241 71h1v70h-1zM281 71h1v70h-1zM300 71h1v70h-1zM320 71h1v70h-1zM340 71h1v70h-1zM380 71h1v70h-1zM400 71h1v70h-1zM420 71h1v70h-1zM440 71h1v70h-1zM479 71h1v70h-1zM499 71h1v70h-1zM519 71h1v70h-1zM539 71h1v70h-1zM70 73h495v1h-495zM70 138h495v1h-495z"/>
<path fill="#008080" d="M161 71h1v70h-1zM261 71h1v70h-1zM360 71h1v70h-1zM459 71h1v70h-1zM559 71h1v70h-1zM70 105h495v1h-495z"/>
<path fill="#0000ff" d="M70 90h1v49h-1zM71 117h1v22h-1zM72 80h1v38h-1zM73 73h1v8h-1zM74 79h1v37h-1zM75 115h1v24h-1zM76 117h1v22h-1zM77 80h1v38h-1zM78 73h1v8h-1zM79 79h1v37h-1zM80 115h1v24h-1zM81 115h1v24h-1zM82 79h1v37h-1zM83 73h1v8h-1zM84 80h1v38h-1zM85 117h1v22h-1zM86 115h1v24h-1zM87 79h1v37h-1zM88 73h1v9h-1zM89 81h1v38h-1zM90 118h1v21h-1zM91 113h1v26h-1zM92 78h1v36h-1zM93 73h1v9h-1zM94 81h1v38h-1zM95 118h1v21h-1zM96 111h1v28h-1zM97 77h1v35h-1zM98 73h1v11h-1zM99 83h1v38h-1zM100 120h1v19h-1zM101 111h1v28h-1zM102 77h1v35h-1zM103 73h1v11h-1zM104 83h1v38h-1zM105 120h1v19h-1zM106 109h1v29h-1zM107 76h1v34h-1zM108 73h1v12h-1zM109 84h1v39h-1zM110 122h1v17h-1zM111 109h1v29h-1zM112 76h1v34h-1zM113 73h1v14h-1zM114 86h1v39h-1zM115 124h1v15h-1zM116 107h1v31h-1zM117 75h1v33h-1zM118 73h1v14h-1zM119 86h1v39h-1zM120 124h1v15h-1zM121 104h1v34h-1zM122 74h1v31h-1zM123 73h1v15h-1zM124 87h1v39h-1zM125 125h1v14h-1zM126 104h1v33h-1zM127 74h1v31h-1zM128 73h1v15h-1zM129 87h1v41h-1zM130 127h1v12h-1zM131 102h1v34h-1zM132 74h1v29h-1zM133 73h1v17h-1zM134 89h1v39h-1zM135 127h1v12h-1zM136 102h1v34h-1zM137 74h1v29h-1zM138 73h1v19h-1zM139 91h1v38h-1zM140 128h1v11h-1zM141 100h1v35h-1zM142 73h1v28h-1zM143 73h1v19h-1zM144 91h1v38h-1zM145 128h1v11h-1zM146 98h1v37h-1zM147 73h1v26h-1zM148 73h1v21h-1zM149 93h1v38h-1zM150 130h1v9h-1zM151 98h1v36h-1zM152 73h1v26h-1zM153 73h1v21h-1zM154 93h1v39h-1zM155 131h1v8h-1zM156 96h1v37h-1zM157 73h1v24h-1zM158 73h1v22h-1zM159 94h1v38h-1zM160 131h1v8h-1zM161 96h1v37h-1zM162 73h1v24h-1zM163 73h1v24h-1zM164 96h1v37h-1zM165 131h1v8h-1zM166 94h1v38h-1zM167 73h1v22h-1zM168 73h1v24h-1zM169 96h1v37h-1zM170 131h1v8h-1zM171 93h1v39h-1zM172 73h1v21h-1zM173 73h1v26h-1zM174 98h1v36h-1zM175 130h1v9h-1zM176 93h1v38h-1zM177 73h1v21h-1zM178 73h1v26h-1zM179 98h1v37h-1zM180 128h1v11h-1zM181 91h1v38h-1zM182 73h1v19h-1zM183 73h1v28h-1zM184 100h1v35h-1zM185 128h1v11h-1zM186 91h1v38h-1zM187 73h1v19h-1zM188 74h1v29h-1zM189 102h1v34h-1zM190 127h1v12h-1zM191 89h1v39h-1zM192 73h1v17h-1zM193 74h1v29h-1zM194 102h1v34h-1zM195 127h1v12h-1zM196 87h1v41h-1zM197 73h1v15h-1zM198 74h1v31h-1zM199 104h1v33h-1zM200 125h1v14h-1zM201 87h1v39h-1zM202 73h1v15h-1zM203 74h1v31h-1zM204 104h1v34h-1zM205 124h1v15h-1zM206 86h1v39h-1zM207 73h1v14h-1zM208 75h1v33h-1zM209 107h1v31h-1zM210 124h1v15h-1zM211 86h1v39h-1zM212 73h1v14h-1zM213 76h1v34h-1zM214 109h1v29h-1zM215 122h1v17h-1zM216 84h1v39h-1zM217 73h1v12h-1zM218 76h1v34h-1zM219 109h1v29h-1zM220 120h1v19h-1zM221 83h1v38h-1zM222 73h1v11h-1zM223 77h1v35h-1zM224 111h1v28h-1zM225 120h1v19h-1zM226 83h1v38h-1zM227 73h1v11h-1zM228 77h1v35h-1zM229 111h1v28h-1zM230 118h1v21h-1zM231 81h1v38h-1zM232 73h1v9h-1zM233 78h1v36h-1zM234 113h1v26h-1zM235 118h1v21h-1zM236 81h1v38h-1zM237 73h1v9h-1zM238 79h1v37h-1zM239 115h1v24h-1zM240 117h1v22h-1zM241 80h1v38h-1zM242 73h1v8h-1zM243 79h1v37h-1zM244 115h1v24h-1zM245 115h1v24h-1zM246 79h1v37h-1zM247 73h1v8h-1zM248 80h1v38h-1zM249 117h1v22h-1zM250 115h1v24h-1zM251 79h1v37h-1zM252 73h1v8h-1zM253 80h1v38h-1zM254 117h1v22h-1zM255 113h1v26h-1zM256 78h1v36h-1zM257 73h1v9h-1zM258 81h1v38h-1zM259 118h1v21h-1zM260 113h1v26h-1zM261 78h1v36h-1zM262 73h1v11h-1zM263 83h1v38h-1zM264 120h1v19h-1zM265 111h1v28h-1zM266 77h1v35h-1zM267 73h1v11h-1zM268 83h1v38h-1zM269 120h1v19h-1zM270 109h1v30h-1zM271 76h1v34h-1zM272 73h1v12h-1zM273 84h1v39h-1zM274 122h1v17h-1zM275 109h1v29h-1zM276 76h1v34h-1zM277 73h1v12h-1zM278 84h1v41h-1zM279 124h1v15h-1zM280 107h1v31h-1zM281 75h1v33h-1zM282 73h1v14h-1zM283 86h1v39h-1zM284 124h1v15h-1zM285 107h1v31h-1zM286 75h1v33h-1zM287 73h1v15h-1zM288 87h1v39h-1zM289 125h1v14h-1zM290 104h1v33h-1zM291 74h1v31h-1zM292 73h1v15h-1zM293 87h1v39h-1zM294 125h1v14h-1zM295 102h1v35h-1zM296 74h1v29h-1zM297 73h1v17h-1zM298 89h1v39h-1zM299 127h1v12h-1zM300 102h1v34h-1zM301 74h1v29h-1zM302 73h1v17h-1zM303 89h1v40h-1zM304 128h1v11h-1zM305 100h1v35h-1zM306 73h1v28h-1zM307 73h1v19h-1zM308 91h1v38h-1zM309 128h1v11h-1zM310 100h1v35h-1zM311 73h1v28h-1zM312 73h1v21h-1zM313 93h1v38h-1zM314 130h1v9h-1zM315 98h1v36h-1zM316 73h1v26h-1zM317 73h1v21h-1zM318 93h1v38h-1zM319 130h1v9h-1zM320 96h1v38h-1zM321 73h1v24h-1zM322 73h1v22h-1zM323 94h1v38h-1zM324 131h1v8h-1zM325 96h1v37h-1zM326 73h1v24h-1zM327 73h1v22h-1zM328 94h1v39h-1zM329 131h1v8h-1zM330 94h1v38h-1zM331 73h1v22h-1zM332 73h1v24h-1zM333 96h1v37h-1zM334 131h1v8h-1zM335 94h1v38h-1zM336 73h1v22h-1zM337 73h1v26h-1zM338 98h1v36h-1zM339 130h1v9h-1zM340 93h1v38h-1zM341 73h1v21h-1zM342 73h1v26h-1zM343 98h1v36h-1zM344 130h1v9h-1zM345 91h1v40h-1zM346 73h1v19h-1zM347 73h1v28h-1zM348 100h1v35h-1zM349 128h1v11h-1zM350 91h1v38h-1zM351 73h1v19h-1zM352 73h1v28h-1zM353 100h1v36h-1zM354 127h1v12h-1zM355 89h1v39h-1zM356 73h1v17h-1zM357 74h1v29h-1zM358 102h1v34h-1zM359 127h1v12h-1zM360 89h1v39h-1zM361 73h1v17h-1zM362 74h1v31h-1zM363 104h1v33h-1zM364 125h1v14h-1zM365 87h1v39h-1zM366 73h1v15h-1zM367 74h1v31h-1zM368 104h1v33h-1zM369 125h1v14h-1zM370 86h1v40h-1zM371 73h1v14h-1zM372 75h1v33h-1zM373 107h1v31h-1zM374 124h1v15h-1zM375 86h1v39h-1zM376 73h1v14h-1zM377 75h1v33h-1zM378 107h1v31h-1zM379 122h1v17h-1zM380 84h1v39h-1zM381 73h1v12h-1zM382 76h1v34h-1zM383 109h1v29h-1zM384 122h1v17h-1zM385 84h1v39h-1zM386 73h1v12h-1zM387 77h1v35h-1zM388 111h1v28h-1zM389 120h1v19h-1zM390 83h1v38h-1zM391 73h1v11h-1zM392 77h1v35h-1zM393 111h1v28h-1zM394 118h1v21h-1zM395 81h1v38h-1zM396 73h1v9h-1zM397 78h1v36h-1zM398 113h1v26h-1zM399 118h1v21h-1zM400 81h1v38h-1zM401 73h1v9h-1zM402 78h1v36h-1zM403 113h1v26h-1zM404 117h1v22h-1zM405 80h1v38h-1zM406 73h1v8h-1zM407 79h1v37h-1zM408 115h1v24h-1zM409 117h1v22h-1zM410 80h1v38h-1zM411 73h1v8h-1zM412 80h1v38h-1zM413 117h1v22h-1zM414 115h1v24h-1zM415 79h1v37h-1zM416 73h1v8h-1zM417 80h1v38h-1zM418 117h1v22h-1zM419 113h1v26h-1zM420 78h1v36h-1zM421 73h1v9h-1zM422 81h1v38h-1zM423 118h1v21h-1zM424 113h1v26h-1zM425 78h1v36h-1zM426 73h1v9h-1zM427 81h1v38h-1zM428 118h1v21h-1zM429 111h1v28h-1zM430 77h1v35h-1zM431 73h1v11h-1zM432 83h1v38h-1zM433 120h1v19h-1zM434 111h1v28h-1zM435 77h1v35h-1zM436 73h1v12h-1zM437 84h1v39h-1zM438 122h1v17h-1zM439 109h1v29h-1zM440 76h1v34h-1zM441 73h1v12h-1zM442 84h1v39h-1zM443 122h1v17h-1zM444 107h1v31h-1zM445 75h1v33h-1zM446 73h1v14h-1zM447 86h1v39h-1zM448 124h1v15h-1zM449 107h1v31h-1zM450 75h1v33h-1zM451 73h1v14h-1zM452 86h1v40h-1zM453 125h1v14h-1zM454 104h1v33h-1zM455 74h1v31h-1zM456 73h1v15h-1zM457 87h1v39h-1zM458 125h1v14h-1zM459 104h1v33h-1zM460 74h1v31h-1zM461 73h1v17h-1zM462 89h1v39h-1zM463 127h1v12h-1zM464 102h1v34h-1zM465 74h1v29h-1zM466 73h1v17h-1zM467 89h1v39h-1zM468 127h1v12h-1zM469 100h1v36h-1zM470 73h1v28h-1zM471 73h1v19h-1zM472 91h1v38h-1zM473 128h1v11h-1zM474 100h1v35h-1zM475 73h1v28h-1zM476 73h1v19h-1zM477 91h1v40h-1zM478 130h1v9h-1zM479 98h1v36h-1zM480 73h1v26h-1zM481 73h1v21h-1zM482 93h1v38h-1zM483 130h1v9h-1zM484 98h1v36h-1zM485 73h1v26h-1zM486 73h1v22h-1zM487 94h1v38h-1zM488 131h1v8h-1zM489 96h1v37h-1zM490 73h1v24h-1zM491 73h1v22h-1zM492 94h1v38h-1zM493 131h1v8h-1zM494 94h1v39h-1zM495 73h1v22h-1zM496 73h1v24h-1zM497 96h1v37h-1zM498 131h1v8h-1zM499 94h1v38h-1zM500 73h1v22h-1zM501 73h1v24h-1zM502 96h1v38h-1zM503 130h1v9h-1zM504 93h1v38h-1zM505 73h1v21h-1zM506 73h1v26h-1zM507 98h1v36h-1zM508 130h1v9h-1zM509 93h1v38h-1zM510 73h1v21h-1zM511 73h1v28h-1zM512 100h1v35h-1zM513 128h1v11h-1zM514 91h1v38h-1zM515 73h1v19h-1zM516 73h1v28h-1zM517 100h1v35h-1zM518 128h1v11h-1zM519 89h1v40h-1zM520 73h1v17h-1zM521 74h1v29h-1zM522 102h1v34h-1zM523 127h1v12h-1zM524 89h1v39h-1zM525 73h1v17h-1zM526 74h1v29h-1zM527 102h1v35h-1zM528 125h1v14h-1zM529 87h1v39h-1zM530 73h1v15h-1zM531 74h1v31h-1zM532 104h1v33h-1zM533 125h1v14h-1zM534 87h1v39h-1zM535 73h1v15h-1zM536 75h1v33h-1zM537 107h1v31h-1zM538 124h1v15h-1zM539 86h1v39h-1zM540 73h1v14h-1zM541 75h1v33h-1zM542 107h1v31h-1zM543 124h1v15h-1zM544 84h1v41h-1zM545 73h1v12h-1zM546 76h1v34h-1zM547 109h1v29h-1zM548 122h1v17h-1zM549 84h1v39h-1zM550 73h1v12h-1zM551 76h1v34h-1zM552 109h1v30h-1zM553 120h1v19h-1zM554 83h1v38h-1zM555 73h1v11h-1zM556 77h1v35h-1zM557 111h1v28h-1zM558 120h1v19h-1zM559 83h1v38h-1zM560 73h1v11h-1zM561 78h1v36h-1zM562 113h1v26h-1zM563 118h1v21h-1zM564 81h1v38h-1z"/>
<path fill="#000" d="M69 70h497v1h-497zM69 141h497v1h-497zM69 70h1v72h-1zM565 70h1v72h-1zM66 70h1v72h-1zM63 73h3v1h-3zM60 105h6v1h-6zM63 138h3v1h-3zM69 145h497v1h-497zM161 146h1v6h-1zM261 146h1v6h-1zM360 146h1v6h-1zM459 146h1v6h-1zM559 146h1v6h-1zM82 146h1v3h-1zM102 146h1v3h-1zM122 146h1v3h-1zM141 146h1v3h-1zM181 146h1v3h-1zM201 146h1v3h-1zM221 146h1v3h-1zM241 146h1v3h-1zM281 146h1v3h-1zM300 146h1v3h-1zM320 146h1v3h-1zM340 146h1v3h-1zM380 146h1v3h-1zM400 146h1v3h-1zM420 146h1v3h-1zM440 146h1v3h-1zM479 146h1v3h-1zM499 146h1v3h-1zM519 146h1v3h-1zM539 146h1v3h-1zM71 59h1v1h-1zM74 59h6v1h-6zM84 59h1v1h-1zM88 59h1v1h-1zM71 60h1v1h-1zM84 60h8v1h-8zM69 61h5v1h-5zM75 61h4v1h-4zM83 61h1v1h-1zM87 61h1v1h-1zM69 62h1v1h-1zM71 62h1v1h-1zM73 62h1v1h-1zM75 62h1v1h-1zM78 62h1v1h-1zM83 62h1v1h-1zM86 62h5v1h-5zM69 63h1v1h-1zM71 63h1v1h-1zM73 63h1v1h-1zM75 63h4v1h-4zM82 63h2v1h-2zM86 63h1v1h-1zM90 63h1v1h-1zM69 64h1v1h-1zM71 64h1v1h-1zM73 64h1v1h-1zM81 64h1v1h-1zM83 64h1v1h-1zM86 64h5v1h-5zM69 65h1v1h-1zM71 65h1v1h-1zM73 65h7v1h-7zM83 65h1v1h-1zM86 65h1v1h-1zM90 65h1v1h-1zM69 66h1v1h-1zM71 66h4v1h-4zM76 66h1v1h-1zM79 66h1v1h-1zM83 66h1v1h-1zM86 66h3v1h-3zM90 66h1v1h-1zM71 67h1v1h-1zM74 67h6v1h-6zM83 67h1v1h-1zM86 67h1v1h-1zM88 67h3v1h-3zM71 68h1v1h-1zM74 68h1v1h-1zM76 68h1v1h-1zM79 68h1v1h-1zM83 68h1v1h-1zM86 68h1v1h-1zM90 68h1v1h-1zM71 69h1v1h-1zM74 69h6v1h-6zM83 69h1v1h-1zM85 69h7v1h-7z"/>
<text x="93.5" y="68" font-size="12.5" fill="#000" textLength="27.5" lengthAdjust="spacingAndGlyphs">(mV)</text>
<text x="305.7" y="66" font-size="12" fill="#000" textLength="21.8" lengthAdjust="spacingAndGlyphs">CH 1</text>
<text x="566.3" y="139" font-size="12.5" fill="#000" textLength="16.5" lengthAdjust="spacingAndGlyphs">(S)</text>
<text x="59" y="110" font-size="12.5" fill="#000" text-anchor="end">0</text>
<circle cx="608.0" cy="65.9" r="4.3" fill="#808080" stroke="#505050" stroke-width="1" style="shape-rendering:geometricPrecision"/>
<path fill="#d4d0c8" d="M713 71h1v70h-1zM745 71h1v70h-1zM768 71h1v70h-1zM786 71h1v70h-1zM800 71h1v70h-1zM812 71h1v70h-1zM823 71h1v70h-1zM832 71h1v70h-1zM896 71h1v70h-1zM928 71h1v70h-1zM951 71h1v70h-1zM969 71h1v70h-1zM984 71h1v70h-1zM996 71h1v70h-1zM1007 71h1v70h-1zM1016 71h1v70h-1zM1080 71h1v70h-1zM1112 71h1v70h-1zM1135 71h1v70h-1zM658 102h494v1h-494z"/>
<path fill="#808080" d="M841 71h1v70h-1zM1024 71h1v70h-1zM658 138h494v1h-494z"/>
<polyline points="658.5,136.5 711.5,136.5 743.5,135.5 766.5,135.5 784.5,135.5 798.5,134.5 811.5,133.5 821.5,131.5 831.5,125.5 839.5,72.5 847.5,117.5 853.5,129.5 860.5,132.5 866.5,134.5 871.5,135.5 876.5,135.5 881.5,136.5 886.5,136.5 890.5,136.5 894.5,136.5 898.5,136.5 902.5,136.5 905.5,137.5 909.5,137.5 912.5,137.5 915.5,137.5 918.5,137.5 921.5,137.5 924.5,137.5 926.5,137.5 929.5,137.5 932.5,137.5 934.5,137.5 936.5,137.5 939.5,137.5 941.5,137.5 943.5,137.5 945.5,137.5 947.5,137.5 949.5,137.5 951.5,137.5 953.5,137.5 955.5,137.5 957.5,137.5 959.5,137.5 961.5,137.5 962.5,137.5 964.5,137.5 966.5,137.5 967.5,137.5 969.5,137.5 970.5,137.5 972.5,137.5 973.5,137.5 975.5,137.5 976.5,137.5 978.5,137.5 979.5,138.5 980.5,138.5 982.5,138.5 983.5,138.5 984.5,138.5 986.5,138.5 987.5,138.5 988.5,138.5 989.5,138.5 991.5,138.5 992.5,138.5 993.5,138.5 994.5,138.5 995.5,138.5 996.5,138.5 997.5,138.5 998.5,138.5 999.5,138.5 1001.5,138.5 1002.5,138.5 1003.5,138.5 1004.5,138.5 1005.5,138.5 1006.5,138.5 1007.5,138.5 1008.5,138.5 1009.5,138.5 1009.5,138.5 1010.5,138.5 1011.5,138.5 1012.5,138.5 1013.5,138.5 1014.5,138.5 1015.5,138.5 1016.5,138.5 1017.5,138.5 1017.5,138.5 1018.5,138.5 1019.5,138.5 1020.5,138.5 1021.5,138.5 1022.5,138.5 1022.5,138.5 1023.5,138.5 1024.5,138.5 1025.5,138.5 1026.5,138.5 1026.5,138.5 1027.5,138.5 1028.5,138.5 1029.5,138.5 1029.5,138.5 1030.5,138.5 1031.5,138.5 1031.5,138.5 1032.5,138.5 1033.5,138.5 1034.5,138.5 1034.5,138.5 1035.5,138.5 1036.5,138.5 1036.5,138.5 1037.5,138.5 1038.5,138.5 1038.5,138.5 1039.5,138.5 1040.5,138.5 1040.5,138.5 1041.5,138.5 1041.5,138.5 1042.5,138.5 1043.5,138.5 1043.5,138.5 1044.5,138.5 1045.5,138.5 1045.5,138.5 1046.5,138.5 1046.5,138.5 1047.5,138.5 1047.5,138.5 1048.5,138.5 1049.5,138.5 1049.5,138.5 1050.5,138.5 1050.5,138.5 1051.5,138.5 1051.5,138.5 1052.5,138.5 1053.5,138.5 1053.5,138.5 1054.5,138.5 1054.5,138.5 1055.5,138.5 1055.5,138.5 1056.5,138.5 1056.5,138.5 1057.5,138.5 1057.5,138.5 1058.5,138.5 1058.5,138.5 1059.5,138.5 1059.5,138.5 1060.5,138.5 1060.5,138.5 1061.5,138.5 1061.5,138.5 1062.5,138.5 1062.5,138.5 1063.5,138.5 1063.5,138.5 1064.5,138.5 1064.5,138.5 1065.5,138.5 1065.5,138.5 1066.5,138.5 1066.5,138.5 1067.5,138.5 1067.5,138.5 1067.5,138.5 1068.5,138.5 1068.5,138.5 1069.5,138.5 1069.5,138.5 1070.5,138.5 1070.5,138.5 1071.5,138.5 1071.5,138.5 1071.5,138.5 1072.5,138.5 1072.5,138.5 1073.5,138.5 1073.5,138.5 1074.5,138.5 1074.5,138.5 1074.5,138.5 1075.5,138.5 1075.5,138.5 1076.5,138.5 1076.5,138.5 1076.5,138.5 1077.5,138.5 1077.5,138.5 1078.5,138.5 1078.5,138.5 1078.5,138.5 1079.5,138.5 1079.5,138.5 1080.5,138.5 1080.5,138.5 1080.5,138.5 1081.5,138.5 1081.5,138.5 1082.5,138.5 1082.5,138.5 1082.5,138.5 1083.5,138.5 1083.5,138.5 1083.5,138.5 1084.5,138.5 1084.5,138.5 1085.5,138.5 1085.5,138.5 1085.5,138.5 1086.5,138.5 1086.5,138.5 1086.5,138.5 1087.5,138.5 1087.5,138.5 1087.5,138.5 1088.5,138.5 1088.5,138.5 1088.5,138.5 1089.5,138.5 1089.5,138.5 1089.5,138.5 1090.5,138.5 1090.5,138.5 1090.5,138.5 1091.5,138.5 1091.5,138.5 1091.5,138.5 1092.5,138.5 1092.5,138.5 1092.5,138.5 1093.5,138.5 1093.5,138.5 1093.5,138.5 1094.5,138.5 1094.5,138.5 1094.5,138.5 1095.5,138.5 1095.5,138.5 1095.5,138.5 1096.5,138.5 1096.5,138.5 1096.5,138.5 1097.5,138.5 1097.5,138.5 1097.5,138.5 1098.5,138.5 1098.5,138.5 1098.5,138.5 1099.5,138.5 1099.5,138.5 1099.5,138.5 1099.5,138.5 1100.5,138.5 1100.5,138.5 1100.5,138.5 1101.5,138.5 1101.5,138.5 1101.5,138.5 1102.5,138.5 1102.5,138.5 1102.5,138.5 1102.5,138.5 1103.5,138.5 1103.5,138.5 1103.5,138.5 1104.5,138.5 1104.5,138.5 1104.5,138.5 1104.5,138.5 1105.5,138.5 1105.5,138.5 1105.5,138.5 1106.5,138.5 1106.5,138.5 1106.5,138.5 1106.5,138.5 1107.5,138.5 1107.5,138.5 1107.5,138.5 1108.5,138.5 1108.5,138.5 1108.5,138.5 1108.5,138.5 1109.5,138.5 1109.5,138.5 1109.5,138.5 1109.5,138.5 1110.5,138.5 1110.5,138.5 1110.5,138.5 1110.5,138.5 1111.5,138.5 1111.5,138.5 1111.5,138.5 1112.5,138.5 1112.5,138.5 1112.5,138.5 1112.5,138.5 1113.5,138.5 1113.5,138.5 1113.5,138.5 1113.5,138.5 1114.5,138.5 1114.5,138.5 1114.5,138.5 1114.5,138.5 1115.5,138.5 1115.5,138.5 1115.5,138.5 1115.5,138.5 1116.5,138.5 1116.5,138.5 1116.5,138.5 1116.5,138.5 1117.5,138.5 1117.5,138.5 1117.5,138.5 1117.5,138.5 1118.5,138.5 1118.5,138.5 1118.5,138.5 1118.5,138.5 1118.5,138.5 1119.5,138.5 1119.5,138.5 1119.5,138.5 1119.5,138.5 1120.5,138.5 1120.5,138.5 1120.5,138.5 1120.5,138.5 1121.5,138.5 1121.5,138.5 1121.5,138.5 1121.5,138.5 1122.5,138.5 1122.5,138.5 1122.5,138.5 1122.5,138.5 1122.5,138.5 1123.5,138.5 1123.5,138.5 1123.5,138.5 1123.5,138.5 1124.5,138.5 1124.5,138.5 1124.5,138.5 1124.5,138.5 1124.5,138.5 1125.5,138.5 1125.5,138.5 1125.5,138.5 1125.5,138.5 1126.5,138.5 1126.5,138.5 1126.5,138.5 1126.5,138.5 1126.5,138.5 1127.5,138.5 1127.5,138.5 1127.5,138.5 1127.5,138.5 1128.5,138.5 1128.5,138.5 1128.5,138.5 1128.5,138.5 1128.5,138.5 1129.5,138.5 1129.5,138.5 1129.5,138.5 1129.5,138.5 1129.5,138.5 1130.5,138.5 1130.5,138.5 1130.5,138.5 1130.5,138.5 1130.5,138.5 1131.5,138.5 1131.5,138.5 1131.5,138.5 1131.5,138.5 1131.5,138.5 1132.5,138.5 1132.5,138.5 1132.5,138.5 1132.5,138.5 1132.5,138.5 1133.5,138.5 1133.5,138.5 1133.5,138.5 1133.5,138.5 1133.5,138.5 1134.5,138.5 1134.5,138.5 1134.5,138.5 1134.5,138.5 1134.5,138.5 1135.5,138.5 1135.5,138.5 1135.5,138.5 1135.5,138.5 1135.5,138.5 1136.5,138.5 1136.5,138.5 1136.5,138.5 1136.5,138.5 1136.5,138.5 1137.5,138.5 1137.5,138.5 1137.5,138.5 1137.5,138.5 1137.5,138.5 1138.5,138.5 1138.5,138.5 1138.5,138.5 1138.5,138.5 1138.5,138.5 1138.5,138.5 1139.5,138.5 1139.5,138.5 1139.5,138.5 1139.5,138.5 1139.5,138.5 1140.5,138.5 1140.5,138.5 1140.5,138.5 1140.5,138.5 1140.5,138.5 1140.5,138.5 1141.5,138.5 1141.5,138.5 1141.5,138.5 1141.5,138.5 1141.5,138.5 1142.5,138.5 1142.5,138.5 1142.5,138.5 1142.5,138.5 1142.5,138.5 1142.5,138.5 1143.5,138.5 1143.5,138.5 1143.5,138.5 1143.5,138.5 1143.5,138.5 1143.5,138.5 1144.5,138.5 1144.5,138.5 1144.5,138.5 1144.5,138.5 1144.5,138.5 1145.5,138.5 1145.5,138.5 1145.5,138.5 1145.5,138.5 1145.5,138.5 1145.5,138.5 1146.5,138.5 1146.5,138.5 1146.5,138.5 1146.5,138.5 1146.5,138.5 1146.5,138.5 1147.5,138.5 1147.5,138.5 1147.5,138.5 1147.5,138.5 1147.5,138.5 1147.5,138.5 1148.5,138.5 1148.5,138.5 1148.5,138.5 1148.5,138.5 1148.5,138.5 1148.5,138.5 1149.5,138.5 1149.5,138.5 1149.5,138.5 1149.5,138.5 1149.5,138.5 1149.5,138.5 1150.5,138.5 1150.5,138.5 1150.5,138.5 1150.5,138.5 1150.5,138.5 1150.5,138.5 1150.5,138.5 1151.5,138.5 1151.5,138.5 1151.5,138.5 1151.5,138.5 1151.5,138.5 1151.5,138.5" fill="none" stroke="#0000ff" stroke-width="1"/>
<path fill="#000" d="M656 70h497v1h-497zM656 141h497v1h-497zM656 70h1v72h-1z"/>
<path fill="#707070" d="M657 71h1v70h-1z"/>
<path fill="#000" d="M1152 70h1v72h-1zM653 70h1v72h-1z"/>
<path fill="#ff8000" d="M686 71h1v71h-1zM656 133h1v1h1v1h1v1h1v1h-1v1h-1v1h-1v1h-1z"/>
<path fill="#000" d="M650 102h3v1h-3zM656 145h498v1h-498zM657 146h1v6h-1zM841 146h1v6h-1zM1024 146h1v6h-1zM713 146h1v3h-1zM745 146h1v3h-1zM768 146h1v3h-1zM786 146h1v3h-1zM800 146h1v3h-1zM812 146h1v3h-1zM823 146h1v3h-1zM832 146h1v3h-1zM896 146h1v3h-1zM928 146h1v3h-1zM951 146h1v3h-1zM969 146h1v3h-1zM984 146h1v3h-1zM996 146h1v3h-1zM1007 146h1v3h-1zM1016 146h1v3h-1zM1080 146h1v3h-1zM1112 146h1v3h-1zM1135 146h1v3h-1zM1153 146h1v3h-1z"/>
<text x="656.6" y="68" font-size="12.5" fill="#000" textLength="82" lengthAdjust="spacingAndGlyphs">Amplitude(mV)</text>
<text x="881.6" y="66" font-size="12" fill="#000" textLength="43.8" lengthAdjust="spacingAndGlyphs">FFT CH 1</text>
<text x="971.5" y="67" font-size="12.5" fill="#000" textLength="177" lengthAdjust="spacingAndGlyphs">[9.76563e+000,3.07895e+000]</text>
<text x="1153.3" y="139" font-size="12.5" fill="#000" textLength="22.5" lengthAdjust="spacingAndGlyphs">(Hz)</text>
<circle cx="21.1" cy="163.9" r="4.3" fill="#808080" stroke="#505050" stroke-width="1" style="shape-rendering:geometricPrecision"/>
<path fill="#d4d0c8" d="M82 169h1v70h-1zM102 169h1v70h-1zM122 169h1v70h-1zM141 169h1v70h-1zM181 169h1v70h-1zM201 169h1v70h-1zM221 169h1v70h-1zM241 169h1v70h-1zM281 169h1v70h-1zM300 169h1v70h-1zM320 169h1v70h-1zM340 169h1v70h-1zM380 169h1v70h-1zM400 169h1v70h-1zM420 169h1v70h-1zM440 169h1v70h-1zM479 169h1v70h-1zM499 169h1v70h-1zM519 169h1v70h-1zM539 169h1v70h-1zM70 171h495v1h-495zM70 236h495v1h-495z"/>
<path fill="#008080" d="M161 169h1v70h-1zM261 169h1v70h-1zM360 169h1v70h-1zM459 169h1v70h-1zM559 169h1v70h-1zM70 203h495v1h-495z"/>
<path fill="#0000ff" d="M70 188h1v49h-1zM71 171h1v49h-1zM72 187h1v50h-1zM73 171h1v51h-1zM74 186h1v51h-1zM75 171h1v52h-1zM76 184h1v53h-1zM77 171h1v54h-1zM78 183h1v54h-1zM79 171h1v55h-1zM80 178h1v59h-1zM81 171h1v60h-1zM82 177h1v60h-1zM83 171h1v61h-1zM84 176h1v61h-1zM85 171h1v62h-1zM86 175h1v62h-1zM87 171h1v63h-1zM88 172h1v65h-1zM89 171h1v65h-1zM90 172h1v65h-1zM91 171h1v66h-1zM92 171h1v66h-1zM93 171h1v66h-1zM94 171h1v66h-1zM95 171h1v66h-1zM96 171h1v66h-1zM97 172h1v65h-1zM98 171h1v65h-1zM99 172h1v65h-1zM100 171h1v65h-1zM101 173h1v64h-1zM102 171h1v64h-1zM103 173h1v64h-1zM104 171h1v63h-1zM105 174h1v63h-1zM106 171h1v59h-1zM107 178h1v59h-1zM108 171h1v58h-1zM109 180h1v57h-1zM110 171h1v56h-1zM111 181h1v56h-1zM112 171h1v55h-1zM113 183h1v54h-1zM114 171h1v48h-1zM115 190h1v47h-1zM116 171h1v46h-1zM117 192h1v45h-1zM118 171h1v44h-1zM119 194h1v43h-1zM120 171h1v41h-1zM121 197h1v40h-1zM122 171h1v35h-1zM123 201h1v36h-1zM124 171h1v37h-1zM125 198h1v39h-1zM126 171h1v40h-1zM127 196h1v41h-1zM128 171h1v43h-1zM129 188h1v49h-1zM130 171h1v50h-1zM131 186h1v51h-1zM132 171h1v52h-1zM133 184h1v53h-1zM134 171h1v54h-1zM135 182h1v55h-1zM136 171h1v56h-1zM137 180h1v57h-1zM138 171h1v61h-1zM139 175h1v62h-1zM140 171h1v63h-1zM141 174h1v63h-1zM142 171h1v64h-1zM143 173h1v64h-1zM144 171h1v65h-1zM145 172h1v65h-1zM146 171h1v66h-1zM147 171h1v66h-1zM148 171h1v66h-1zM149 171h1v66h-1zM150 171h1v66h-1zM151 171h1v65h-1zM152 172h1v65h-1zM153 171h1v65h-1zM154 173h1v64h-1zM155 171h1v62h-1zM156 176h1v61h-1zM157 171h1v60h-1zM158 178h1v59h-1zM159 171h1v58h-1zM160 180h1v57h-1zM161 171h1v56h-1zM162 182h1v55h-1zM163 171h1v53h-1zM164 190h1v47h-1zM165 171h1v46h-1zM166 193h1v44h-1zM167 171h1v43h-1zM168 196h1v41h-1zM169 171h1v40h-1zM170 199h1v38h-1zM171 171h1v38h-1zM172 198h1v39h-1zM173 171h1v41h-1zM174 194h1v43h-1zM175 171h1v44h-1zM176 191h1v46h-1zM177 171h1v48h-1zM178 188h1v49h-1zM179 171h1v55h-1zM180 181h1v56h-1zM181 171h1v57h-1zM182 178h1v59h-1zM183 171h1v60h-1zM184 176h1v61h-1zM185 171h1v62h-1zM186 175h1v62h-1zM187 171h1v65h-1zM188 172h1v65h-1zM189 171h1v66h-1zM190 171h1v66h-1zM191 171h1v66h-1zM192 171h1v66h-1zM193 171h1v66h-1zM194 171h1v66h-1zM195 171h1v66h-1zM196 171h1v65h-1zM197 174h1v63h-1zM198 171h1v62h-1zM199 176h1v61h-1zM200 171h1v60h-1zM201 178h1v59h-1zM202 171h1v58h-1zM203 181h1v56h-1zM204 171h1v55h-1zM205 188h1v49h-1zM206 171h1v47h-1zM207 192h1v45h-1zM208 171h1v44h-1zM209 195h1v42h-1zM210 171h1v40h-1zM211 199h1v38h-1zM212 171h1v39h-1zM213 196h1v41h-1zM214 171h1v43h-1zM215 192h1v45h-1zM216 171h1v46h-1zM217 189h1v48h-1zM218 171h1v50h-1zM219 185h1v52h-1zM220 171h1v57h-1zM221 178h1v59h-1zM222 171h1v60h-1zM223 176h1v61h-1zM224 171h1v62h-1zM225 174h1v63h-1zM226 171h1v64h-1zM227 172h1v65h-1zM228 171h1v65h-1zM229 171h1v66h-1zM230 171h1v66h-1zM231 171h1v66h-1zM232 171h1v66h-1zM233 171h1v65h-1zM234 172h1v65h-1zM235 171h1v64h-1zM236 174h1v63h-1zM237 171h1v62h-1zM238 179h1v58h-1zM239 171h1v56h-1zM240 182h1v55h-1zM241 171h1v53h-1zM242 186h1v51h-1zM243 171h1v49h-1zM244 190h1v47h-1zM245 171h1v45h-1zM246 200h1v37h-1zM247 171h1v35h-1zM248 201h1v36h-1zM249 171h1v39h-1zM250 196h1v41h-1zM251 171h1v43h-1zM252 191h1v46h-1zM253 171h1v48h-1zM254 183h1v54h-1zM255 171h1v56h-1zM256 179h1v58h-1zM257 171h1v59h-1zM258 176h1v61h-1zM259 171h1v62h-1zM260 174h1v63h-1zM261 171h1v64h-1zM262 171h1v66h-1zM263 171h1v66h-1zM264 171h1v66h-1zM265 171h1v66h-1zM266 171h1v66h-1zM267 172h1v65h-1zM268 171h1v65h-1zM269 173h1v64h-1zM270 171h1v63h-1zM271 178h1v59h-1zM272 171h1v58h-1zM273 181h1v56h-1zM274 171h1v54h-1zM275 185h1v52h-1zM276 171h1v50h-1zM277 190h1v47h-1zM278 171h1v45h-1zM279 199h1v38h-1zM280 171h1v35h-1zM281 200h1v37h-1zM282 171h1v40h-1zM283 195h1v42h-1zM284 171h1v45h-1zM285 190h1v47h-1zM286 171h1v50h-1zM287 181h1v56h-1zM288 171h1v58h-1zM289 178h1v59h-1zM290 171h1v61h-1zM291 175h1v62h-1zM292 171h1v63h-1zM293 173h1v64h-1zM294 171h1v65h-1zM295 171h1v66h-1zM296 171h1v66h-1zM297 171h1v66h-1zM298 172h1v65h-1zM299 171h1v65h-1zM300 173h1v64h-1zM301 171h1v63h-1zM302 176h1v61h-1zM303 171h1v60h-1zM304 182h1v55h-1zM305 171h1v52h-1zM306 187h1v50h-1zM307 171h1v48h-1zM308 192h1v45h-1zM309 171h1v42h-1zM310 197h1v40h-1zM311 171h1v37h-1zM312 196h1v41h-1zM313 171h1v44h-1zM314 190h1v47h-1zM315 171h1v49h-1zM316 185h1v52h-1zM317 171h1v54h-1zM318 181h1v56h-1zM319 171h1v58h-1zM320 174h1v63h-1zM321 171h1v64h-1zM322 172h1v65h-1zM323 171h1v65h-1zM324 171h1v66h-1zM325 171h1v66h-1zM326 171h1v66h-1zM327 171h1v66h-1zM328 171h1v65h-1zM329 174h1v63h-1zM330 171h1v61h-1zM331 177h1v60h-1zM332 171h1v58h-1zM333 181h1v56h-1zM334 171h1v54h-1zM335 186h1v51h-1zM336 171h1v49h-1zM337 196h1v41h-1zM338 171h1v38h-1zM339 202h1v35h-1zM340 171h1v38h-1zM341 195h1v42h-1zM342 171h1v44h-1zM343 190h1v47h-1zM344 171h1v50h-1zM345 180h1v57h-1zM346 171h1v59h-1zM347 176h1v61h-1zM348 171h1v62h-1zM349 173h1v64h-1zM350 171h1v65h-1zM351 172h1v65h-1zM352 171h1v66h-1zM353 171h1v66h-1zM354 172h1v65h-1zM355 171h1v65h-1zM356 173h1v64h-1zM357 171h1v62h-1zM358 176h1v61h-1zM359 171h1v59h-1zM360 180h1v57h-1zM361 171h1v54h-1zM362 190h1v47h-1zM363 171h1v44h-1zM364 196h1v41h-1zM365 171h1v38h-1zM366 201h1v36h-1zM367 171h1v39h-1zM368 195h1v42h-1zM369 171h1v45h-1zM370 184h1v53h-1zM371 171h1v55h-1zM372 179h1v58h-1zM373 171h1v60h-1zM374 175h1v62h-1zM375 171h1v63h-1zM376 173h1v64h-1zM377 171h1v65h-1zM378 171h1v66h-1zM379 171h1v66h-1zM380 171h1v65h-1zM381 172h1v65h-1zM382 171h1v64h-1zM383 175h1v62h-1zM384 171h1v60h-1zM385 179h1v58h-1zM386 171h1v56h-1zM387 188h1v49h-1zM388 171h1v46h-1zM389 195h1v42h-1zM390 171h1v39h-1zM391 201h1v36h-1zM392 171h1v38h-1zM393 195h1v42h-1zM394 171h1v50h-1zM395 184h1v53h-1zM396 171h1v56h-1zM397 179h1v58h-1zM398 171h1v60h-1zM399 175h1v62h-1zM400 171h1v64h-1zM401 172h1v65h-1zM402 171h1v65h-1zM403 171h1v66h-1zM404 171h1v66h-1zM405 171h1v65h-1zM406 173h1v64h-1zM407 171h1v63h-1zM408 176h1v61h-1zM409 171h1v59h-1zM410 181h1v56h-1zM411 171h1v54h-1zM412 191h1v46h-1zM413 171h1v42h-1zM414 198h1v39h-1zM415 171h1v36h-1zM416 198h1v39h-1zM417 171h1v43h-1zM418 191h1v46h-1zM419 171h1v54h-1zM420 180h1v57h-1zM421 171h1v59h-1zM422 176h1v61h-1zM423 171h1v63h-1zM424 173h1v64h-1zM425 171h1v65h-1zM426 171h1v66h-1zM427 171h1v66h-1zM428 171h1v66h-1zM429 173h1v64h-1zM430 171h1v63h-1zM431 176h1v61h-1zM432 171h1v59h-1zM433 181h1v56h-1zM434 171h1v53h-1zM435 187h1v50h-1zM436 171h1v46h-1zM437 199h1v38h-1zM438 171h1v37h-1zM439 196h1v41h-1zM440 171h1v45h-1zM441 189h1v48h-1zM442 171h1v52h-1zM443 182h1v55h-1zM444 171h1v61h-1zM445 174h1v63h-1zM446 171h1v64h-1zM447 172h1v65h-1zM448 171h1v66h-1zM449 171h1v66h-1zM450 171h1v66h-1zM451 171h1v65h-1zM452 172h1v65h-1zM453 171h1v61h-1zM454 179h1v58h-1zM455 171h1v55h-1zM456 185h1v52h-1zM457 171h1v49h-1zM458 192h1v45h-1zM459 171h1v41h-1zM460 200h1v37h-1zM461 171h1v43h-1zM462 190h1v47h-1zM463 171h1v50h-1zM464 183h1v54h-1zM465 171h1v57h-1zM466 178h1v59h-1zM467 171h1v62h-1zM468 173h1v64h-1zM469 171h1v66h-1zM470 171h1v66h-1zM471 171h1v66h-1zM472 171h1v65h-1zM473 172h1v65h-1zM474 171h1v63h-1zM475 176h1v61h-1zM476 171h1v59h-1zM477 181h1v56h-1zM478 171h1v48h-1zM479 193h1v44h-1zM480 171h1v40h-1zM481 201h1v36h-1zM482 171h1v39h-1zM483 193h1v44h-1zM484 171h1v48h-1zM485 186h1v51h-1zM486 171h1v58h-1zM487 176h1v61h-1zM488 171h1v63h-1zM489 173h1v64h-1zM490 171h1v65h-1zM491 171h1v66h-1zM492 171h1v66h-1zM493 171h1v66h-1zM494 172h1v65h-1zM495 171h1v61h-1zM496 178h1v59h-1zM497 171h1v56h-1zM498 184h1v53h-1zM499 171h1v49h-1zM500 192h1v45h-1zM501 171h1v41h-1zM502 197h1v40h-1zM503 171h1v45h-1zM504 188h1v49h-1zM505 171h1v53h-1zM506 181h1v56h-1zM507 171h1v59h-1zM508 176h1v61h-1zM509 171h1v63h-1zM510 171h1v66h-1zM511 171h1v66h-1zM512 171h1v66h-1zM513 172h1v65h-1zM514 171h1v64h-1zM515 175h1v62h-1zM516 171h1v60h-1zM517 180h1v57h-1zM518 171h1v54h-1zM519 187h1v50h-1zM520 171h1v41h-1zM521 200h1v37h-1zM522 171h1v39h-1zM523 193h1v44h-1zM524 171h1v48h-1zM525 185h1v52h-1zM526 171h1v56h-1zM527 175h1v62h-1zM528 171h1v64h-1zM529 172h1v65h-1zM530 171h1v66h-1zM531 171h1v66h-1zM532 171h1v66h-1zM533 171h1v65h-1zM534 173h1v64h-1zM535 171h1v62h-1zM536 181h1v56h-1zM537 171h1v52h-1zM538 189h1v48h-1zM539 171h1v44h-1zM540 198h1v39h-1zM541 171h1v37h-1zM542 195h1v42h-1zM543 171h1v46h-1zM544 182h1v55h-1zM545 171h1v58h-1zM546 176h1v61h-1zM547 171h1v63h-1zM548 172h1v65h-1zM549 171h1v66h-1zM550 171h1v66h-1zM551 171h1v66h-1zM552 171h1v65h-1zM553 175h1v62h-1zM554 171h1v59h-1zM555 181h1v56h-1zM556 171h1v53h-1zM557 189h1v48h-1zM558 171h1v44h-1zM559 198h1v39h-1zM560 171h1v43h-1zM561 190h1v47h-1zM562 171h1v52h-1zM563 182h1v55h-1zM564 171h1v59h-1z"/>
<path fill="#000" d="M69 168h497v1h-497zM69 239h497v1h-497zM69 168h1v72h-1zM565 168h1v72h-1zM66 168h1v72h-1zM63 171h3v1h-3zM60 203h6v1h-6zM63 236h3v1h-3zM69 243h497v1h-497zM161 244h1v6h-1zM261 244h1v6h-1zM360 244h1v6h-1zM459 244h1v6h-1zM559 244h1v6h-1zM82 244h1v3h-1zM102 244h1v3h-1zM122 244h1v3h-1zM141 244h1v3h-1zM181 244h1v3h-1zM201 244h1v3h-1zM221 244h1v3h-1zM241 244h1v3h-1zM281 244h1v3h-1zM300 244h1v3h-1zM320 244h1v3h-1zM340 244h1v3h-1zM380 244h1v3h-1zM400 244h1v3h-1zM420 244h1v3h-1zM440 244h1v3h-1zM479 244h1v3h-1zM499 244h1v3h-1zM519 244h1v3h-1zM539 244h1v3h-1zM71 157h1v1h-1zM74 157h6v1h-6zM84 157h1v1h-1zM88 157h1v1h-1zM71 158h1v1h-1zM84 158h8v1h-8zM69 159h5v1h-5zM75 159h4v1h-4zM83 159h1v1h-1zM87 159h1v1h-1zM69 160h1v1h-1zM71 160h1v1h-1zM73 160h1v1h-1zM75 160h1v1h-1zM78 160h1v1h-1zM83 160h1v1h-1zM86 160h5v1h-5zM69 161h1v1h-1zM71 161h1v1h-1zM73 161h1v1h-1zM75 161h4v1h-4zM82 161h2v1h-2zM86 161h1v1h-1zM90 161h1v1h-1zM69 162h1v1h-1zM71 162h1v1h-1zM73 162h1v1h-1zM81 162h1v1h-1zM83 162h1v1h-1zM86 162h5v1h-5zM69 163h1v1h-1zM71 163h1v1h-1zM73 163h7v1h-7zM83 163h1v1h-1zM86 163h1v1h-1zM90 163h1v1h-1zM69 164h1v1h-1zM71 164h4v1h-4zM76 164h1v1h-1zM79 164h1v1h-1zM83 164h1v1h-1zM86 164h3v1h-3zM90 164h1v1h-1zM71 165h1v1h-1zM74 165h6v1h-6zM83 165h1v1h-1zM86 165h1v1h-1zM88 165h3v1h-3zM71 166h1v1h-1zM74 166h1v1h-1zM76 166h1v1h-1zM79 166h1v1h-1zM83 166h1v1h-1zM86 166h1v1h-1zM90 166h1v1h-1zM71 167h1v1h-1zM74 167h6v1h-6zM83 167h1v1h-1zM85 167h7v1h-7z"/>
<text x="93.5" y="166" font-size="12.5" fill="#000" textLength="27.5" lengthAdjust="spacingAndGlyphs">(mV)</text>
<text x="305.7" y="164" font-size="12" fill="#000" textLength="23.4" lengthAdjust="spacingAndGlyphs">CH 2</text>
<text x="566.3" y="237" font-size="12.5" fill="#000" textLength="16.5" lengthAdjust="spacingAndGlyphs">(S)</text>
<text x="59" y="208" font-size="12.5" fill="#000" text-anchor="end">0</text>
<circle cx="608.0" cy="163.9" r="4.3" fill="#808080" stroke="#505050" stroke-width="1" style="shape-rendering:geometricPrecision"/>
<path fill="#d4d0c8" d="M713 169h1v70h-1zM745 169h1v70h-1zM768 169h1v70h-1zM786 169h1v70h-1zM800 169h1v70h-1zM812 169h1v70h-1zM823 169h1v70h-1zM832 169h1v70h-1zM896 169h1v70h-1zM928 169h1v70h-1zM951 169h1v70h-1zM969 169h1v70h-1zM984 169h1v70h-1zM996 169h1v70h-1zM1007 169h1v70h-1zM1016 169h1v70h-1zM1080 169h1v70h-1zM1112 169h1v70h-1zM1135 169h1v70h-1z"/>
<path fill="#808080" d="M658 188h494v1h-494z"/>
<path fill="#d4d0c8" d="M658 212h494v1h-494z"/>
<path fill="#808080" d="M841 169h1v70h-1zM1024 169h1v70h-1z"/>
<path fill="#c4c0b4" d="M658 236h494v1h-494z"/>
<polyline points="658.5,235.5 711.5,235.5 743.5,235.5 766.5,235.5 784.5,234.5 798.5,234.5 811.5,234.5 821.5,234.5 831.5,234.5 839.5,234.5 847.5,234.5 853.5,234.5 860.5,234.5 866.5,234.5 871.5,233.5 876.5,233.5 881.5,233.5 886.5,232.5 890.5,232.5 894.5,231.5 898.5,230.5 902.5,229.5 905.5,227.5 909.5,224.5 912.5,215.5 915.5,172.5 918.5,176.5 921.5,215.5 924.5,223.5 926.5,227.5 929.5,229.5 932.5,230.5 934.5,231.5 936.5,232.5 939.5,232.5 941.5,232.5 943.5,233.5 945.5,233.5 947.5,233.5 949.5,233.5 951.5,234.5 953.5,234.5 955.5,234.5 957.5,234.5 959.5,234.5 961.5,234.5 962.5,234.5 964.5,234.5 966.5,234.5 967.5,234.5 969.5,234.5 970.5,234.5 972.5,235.5 973.5,235.5 975.5,235.5 976.5,235.5 978.5,235.5 979.5,235.5 980.5,235.5 982.5,235.5 983.5,235.5 984.5,235.5 986.5,235.5 987.5,235.5 988.5,235.5 989.5,235.5 991.5,235.5 992.5,235.5 993.5,235.5 994.5,235.5 995.5,235.5 996.5,235.5 997.5,235.5 998.5,235.5 999.5,235.5 1001.5,235.5 1002.5,235.5 1003.5,235.5 1004.5,235.5 1005.5,235.5 1006.5,235.5 1007.5,235.5 1008.5,235.5 1009.5,235.5 1009.5,235.5 1010.5,235.5 1011.5,235.5 1012.5,235.5 1013.5,235.5 1014.5,235.5 1015.5,235.5 1016.5,235.5 1017.5,235.5 1017.5,235.5 1018.5,235.5 1019.5,235.5 1020.5,235.5 1021.5,235.5 1022.5,235.5 1022.5,235.5 1023.5,235.5 1024.5,235.5 1025.5,235.5 1026.5,235.5 1026.5,235.5 1027.5,235.5 1028.5,235.5 1029.5,235.5 1029.5,235.5 1030.5,235.5 1031.5,235.5 1031.5,235.5 1032.5,235.5 1033.5,235.5 1034.5,235.5 1034.5,235.5 1035.5,235.5 1036.5,235.5 1036.5,235.5 1037.5,235.5 1038.5,235.5 1038.5,235.5 1039.5,235.5 1040.5,235.5 1040.5,235.5 1041.5,235.5 1041.5,235.5 1042.5,235.5 1043.5,235.5 1043.5,235.5 1044.5,235.5 1045.5,235.5 1045.5,235.5 1046.5,235.5 1046.5,235.5 1047.5,235.5 1047.5,235.5 1048.5,236.5 1049.5,236.5 1049.5,236.5 1050.5,236.5 1050.5,236.5 1051.5,236.5 1051.5,236.5 1052.5,236.5 1053.5,236.5 1053.5,236.5 1054.5,236.5 1054.5,236.5 1055.5,236.5 1055.5,236.5 1056.5,236.5 1056.5,236.5 1057.5,236.5 1057.5,236.5 1058.5,236.5 1058.5,236.5 1059.5,236.5 1059.5,236.5 1060.5,236.5 1060.5,236.5 1061.5,236.5 1061.5,236.5 1062.5,236.5 1062.5,236.5 1063.5,236.5 1063.5,236.5 1064.5,236.5 1064.5,236.5 1065.5,236.5 1065.5,236.5 1066.5,236.5 1066.5,236.5 1067.5,236.5 1067.5,236.5 1067.5,236.5 1068.5,236.5 1068.5,236.5 1069.5,236.5 1069.5,236.5 1070.5,236.5 1070.5,236.5 1071.5,236.5 1071.5,236.5 1071.5,236.5 1072.5,236.5 1072.5,236.5 1073.5,236.5 1073.5,236.5 1074.5,236.5 1074.5,236.5 1074.5,236.5 1075.5,236.5 1075.5,236.5 1076.5,236.5 1076.5,236.5 1076.5,236.5 1077.5,236.5 1077.5,236.5 1078.5,236.5 1078.5,236.5 1078.5,236.5 1079.5,236.5 1079.5,236.5 1080.5,236.5 1080.5,236.5 1080.5,236.5 1081.5,236.5 1081.5,236.5 1082.5,236.5 1082.5,236.5 1082.5,236.5 1083.5,236.5 1083.5,236.5 1083.5,236.5 1084.5,236.5 1084.5,236.5 1085.5,236.5 1085.5,236.5 1085.5,236.5 1086.5,236.5 1086.5,236.5 1086.5,236.5 1087.5,236.5 1087.5,236.5 1087.5,236.5 1088.5,236.5 1088.5,236.5 1088.5,236.5 1089.5,236.5 1089.5,236.5 1089.5,236.5 1090.5,236.5 1090.5,236.5 1090.5,236.5 1091.5,236.5 1091.5,236.5 1091.5,236.5 1092.5,236.5 1092.5,236.5 1092.5,236.5 1093.5,236.5 1093.5,236.5 1093.5,236.5 1094.5,236.5 1094.5,236.5 1094.5,236.5 1095.5,236.5 1095.5,236.5 1095.5,236.5 1096.5,236.5 1096.5,236.5 1096.5,236.5 1097.5,236.5 1097.5,236.5 1097.5,236.5 1098.5,236.5 1098.5,236.5 1098.5,236.5 1099.5,236.5 1099.5,236.5 1099.5,236.5 1099.5,236.5 1100.5,236.5 1100.5,236.5 1100.5,236.5 1101.5,236.5 1101.5,236.5 1101.5,236.5 1102.5,236.5 1102.5,236.5 1102.5,236.5 1102.5,236.5 1103.5,236.5 1103.5,236.5 1103.5,236.5 1104.5,236.5 1104.5,236.5 1104.5,236.5 1104.5,236.5 1105.5,236.5 1105.5,236.5 1105.5,236.5 1106.5,236.5 1106.5,236.5 1106.5,236.5 1106.5,236.5 1107.5,236.5 1107.5,236.5 1107.5,236.5 1108.5,236.5 1108.5,236.5 1108.5,236.5 1108.5,236.5 1109.5,236.5 1109.5,236.5 1109.5,236.5 1109.5,236.5 1110.5,236.5 1110.5,236.5 1110.5,236.5 1110.5,236.5 1111.5,236.5 1111.5,236.5 1111.5,236.5 1112.5,236.5 1112.5,236.5 1112.5,236.5 1112.5,236.5 1113.5,236.5 1113.5,236.5 1113.5,236.5 1113.5,236.5 1114.5,236.5 1114.5,236.5 1114.5,236.5 1114.5,236.5 1115.5,236.5 1115.5,236.5 1115.5,236.5 1115.5,236.5 1116.5,236.5 1116.5,236.5 1116.5,236.5 1116.5,236.5 1117.5,236.5 1117.5,236.5 1117.5,236.5 1117.5,236.5 1118.5,236.5 1118.5,236.5 1118.5,236.5 1118.5,236.5 1118.5,236.5 1119.5,236.5 1119.5,236.5 1119.5,236.5 1119.5,236.5 1120.5,236.5 1120.5,236.5 1120.5,236.5 1120.5,236.5 1121.5,236.5 1121.5,236.5 1121.5,236.5 1121.5,236.5 1122.5,236.5 1122.5,236.5 1122.5,236.5 1122.5,236.5 1122.5,236.5 1123.5,236.5 1123.5,236.5 1123.5,236.5 1123.5,236.5 1124.5,236.5 1124.5,236.5 1124.5,236.5 1124.5,236.5 1124.5,236.5 1125.5,236.5 1125.5,236.5 1125.5,236.5 1125.5,236.5 1126.5,236.5 1126.5,236.5 1126.5,236.5 1126.5,236.5 1126.5,236.5 1127.5,236.5 1127.5,236.5 1127.5,236.5 1127.5,236.5 1128.5,236.5 1128.5,236.5 1128.5,236.5 1128.5,236.5 1128.5,236.5 1129.5,236.5 1129.5,236.5 1129.5,236.5 1129.5,236.5 1129.5,236.5 1130.5,236.5 1130.5,236.5 1130.5,236.5 1130.5,236.5 1130.5,236.5 1131.5,236.5 1131.5,236.5 1131.5,236.5 1131.5,236.5 1131.5,236.5 1132.5,236.5 1132.5,236.5 1132.5,236.5 1132.5,236.5 1132.5,236.5 1133.5,236.5 1133.5,236.5 1133.5,236.5 1133.5,236.5 1133.5,236.5 1134.5,236.5 1134.5,236.5 1134.5,236.5 1134.5,236.5 1134.5,236.5 1135.5,236.5 1135.5,236.5 1135.5,236.5 1135.5,236.5 1135.5,236.5 1136.5,236.5 1136.5,236.5 1136.5,236.5 1136.5,236.5 1136.5,236.5 1137.5,236.5 1137.5,236.5 1137.5,236.5 1137.5,236.5 1137.5,236.5 1138.5,236.5 1138.5,236.5 1138.5,236.5 1138.5,236.5 1138.5,236.5 1138.5,236.5 1139.5,236.5 1139.5,236.5 1139.5,236.5 1139.5,236.5 1139.5,236.5 1140.5,236.5 1140.5,236.5 1140.5,236.5 1140.5,236.5 1140.5,236.5 1140.5,236.5 1141.5,236.5 1141.5,236.5 1141.5,236.5 1141.5,236.5 1141.5,236.5 1142.5,236.5 1142.5,236.5 1142.5,236.5 1142.5,236.5 1142.5,236.5 1142.5,236.5 1143.5,236.5 1143.5,236.5 1143.5,236.5 1143.5,236.5 1143.5,236.5 1143.5,236.5 1144.5,236.5 1144.5,236.5 1144.5,236.5 1144.5,236.5 1144.5,236.5 1145.5,236.5 1145.5,236.5 1145.5,236.5 1145.5,236.5 1145.5,236.5 1145.5,236.5 1146.5,236.5 1146.5,236.5 1146.5,236.5 1146.5,236.5 1146.5,236.5 1146.5,236.5 1147.5,236.5 1147.5,236.5 1147.5,236.5 1147.5,236.5 1147.5,236.5 1147.5,236.5 1148.5,236.5 1148.5,236.5 1148.5,236.5 1148.5,236.5 1148.5,236.5 1148.5,236.5 1149.5,236.5 1149.5,236.5 1149.5,236.5 1149.5,236.5 1149.5,236.5 1149.5,236.5 1150.5,236.5 1150.5,236.5 1150.5,236.5 1150.5,236.5 1150.5,236.5 1150.5,236.5 1150.5,236.5 1151.5,236.5 1151.5,236.5 1151.5,236.5 1151.5,236.5 1151.5,236.5 1151.5,236.5" fill="none" stroke="#0000ff" stroke-width="1"/>
<path fill="#000" d="M656 168h497v1h-497zM656 239h497v1h-497zM656 168h1v72h-1z"/>
<path fill="#707070" d="M657 169h1v70h-1z"/>
<path fill="#000" d="M1152 168h1v72h-1zM653 168h1v72h-1z"/>
<path fill="#ff8000" d="M686 169h1v71h-1zM656 232h1v1h1v1h1v1h1v1h-1v1h-1v1h-1v1h-1z"/>
<path fill="#000" d="M647 188h6v1h-6z"/>
<text x="645.5" y="193" font-size="12.5" fill="#000" text-anchor="end">50.0</text>
<path fill="#000" d="M650 212h3v1h-3zM656 243h498v1h-498zM657 244h1v6h-1zM841 244h1v6h-1zM1024 244h1v6h-1zM713 244h1v3h-1zM745 244h1v3h-1zM768 244h1v3h-1zM786 244h1v3h-1zM800 244h1v3h-1zM812 244h1v3h-1zM823 244h1v3h-1zM832 244h1v3h-1zM896 244h1v3h-1zM928 244h1v3h-1zM951 244h1v3h-1zM969 244h1v3h-1zM984 244h1v3h-1zM996 244h1v3h-1zM1007 244h1v3h-1zM1016 244h1v3h-1zM1080 244h1v3h-1zM1112 244h1v3h-1zM1135 244h1v3h-1zM1153 244h1v3h-1z"/>
<text x="656.6" y="166" font-size="12.5" fill="#000" textLength="82" lengthAdjust="spacingAndGlyphs">Amplitude(mV)</text>
<text x="881.6" y="164" font-size="12" fill="#000" textLength="45.6" lengthAdjust="spacingAndGlyphs">FFT CH 2</text>
<text x="971.5" y="165" font-size="12.5" fill="#000" textLength="177" lengthAdjust="spacingAndGlyphs">[9.76563e+000,1.36117e+000]</text>
<text x="1153.3" y="237" font-size="12.5" fill="#000" textLength="22.5" lengthAdjust="spacingAndGlyphs">(Hz)</text>
<circle cx="21.1" cy="261.9" r="4.3" fill="#808080" stroke="#505050" stroke-width="1" style="shape-rendering:geometricPrecision"/>
<path fill="#d4d0c8" d="M82 267h1v70h-1zM102 267h1v70h-1zM122 267h1v70h-1zM141 267h1v70h-1zM181 267h1v70h-1zM201 267h1v70h-1zM221 267h1v70h-1zM241 267h1v70h-1zM281 267h1v70h-1zM300 267h1v70h-1zM320 267h1v70h-1zM340 267h1v70h-1zM380 267h1v70h-1zM400 267h1v70h-1zM420 267h1v70h-1zM440 267h1v70h-1zM479 267h1v70h-1zM499 267h1v70h-1zM519 267h1v70h-1zM539 267h1v70h-1zM70 269h495v1h-495zM70 334h495v1h-495z"/>
<path fill="#008080" d="M161 267h1v70h-1zM261 267h1v70h-1zM360 267h1v70h-1zM459 267h1v70h-1zM559 267h1v70h-1zM70 301h495v1h-495z"/>
<path fill="#0000ff" d="M70 290h1v45h-1zM71 309h1v26h-1zM72 283h1v27h-1zM73 269h1v15h-1zM74 281h1v27h-1zM75 307h1v27h-1zM76 309h1v26h-1zM77 283h1v27h-1zM78 269h1v15h-1zM79 281h1v27h-1zM80 307h1v28h-1zM81 307h1v27h-1zM82 281h1v27h-1zM83 269h1v15h-1zM84 283h1v27h-1zM85 309h1v26h-1zM86 307h1v27h-1zM87 281h1v27h-1zM88 269h1v16h-1zM89 284h1v27h-1zM90 310h1v25h-1zM91 306h1v27h-1zM92 280h1v27h-1zM93 269h1v16h-1zM94 284h1v27h-1zM95 310h1v25h-1zM96 305h1v28h-1zM97 279h1v27h-1zM98 269h1v17h-1zM99 285h1v27h-1zM100 311h1v24h-1zM101 305h1v27h-1zM102 279h1v27h-1zM103 269h1v17h-1zM104 285h1v27h-1zM105 311h1v24h-1zM106 303h1v27h-1zM107 277h1v27h-1zM108 269h1v19h-1zM109 287h1v27h-1zM110 313h1v22h-1zM111 303h1v27h-1zM112 277h1v27h-1zM113 269h1v20h-1zM114 288h1v27h-1zM115 314h1v21h-1zM116 302h1v27h-1zM117 276h1v27h-1zM118 269h1v20h-1zM119 288h1v27h-1zM120 314h1v21h-1zM121 301h1v28h-1zM122 275h1v27h-1zM123 269h1v21h-1zM124 289h1v27h-1zM125 315h1v20h-1zM126 301h1v27h-1zM127 275h1v27h-1zM128 269h1v21h-1zM129 289h1v28h-1zM130 316h1v19h-1zM131 300h1v27h-1zM132 274h1v27h-1zM133 269h1v22h-1zM134 290h1v27h-1zM135 316h1v19h-1zM136 300h1v27h-1zM137 274h1v27h-1zM138 269h1v24h-1zM139 292h1v27h-1zM140 318h1v17h-1zM141 298h1v27h-1zM142 272h1v27h-1zM143 269h1v24h-1zM144 292h1v27h-1zM145 318h1v17h-1zM146 297h1v28h-1zM147 271h1v27h-1zM148 269h1v25h-1zM149 293h1v27h-1zM150 319h1v16h-1zM151 297h1v27h-1zM152 271h1v27h-1zM153 269h1v25h-1zM154 293h1v28h-1zM155 320h1v15h-1zM156 296h1v27h-1zM157 270h1v27h-1zM158 269h1v26h-1zM159 294h1v27h-1zM160 320h1v15h-1zM161 296h1v27h-1zM162 270h1v27h-1zM163 269h1v28h-1zM164 296h1v27h-1zM165 320h1v15h-1zM166 294h1v27h-1zM167 269h1v26h-1zM168 270h1v27h-1zM169 296h1v27h-1zM170 320h1v15h-1zM171 293h1v28h-1zM172 269h1v25h-1zM173 271h1v27h-1zM174 297h1v27h-1zM175 319h1v16h-1zM176 293h1v27h-1zM177 269h1v25h-1zM178 271h1v27h-1zM179 297h1v28h-1zM180 318h1v17h-1zM181 292h1v27h-1zM182 269h1v24h-1zM183 272h1v27h-1zM184 298h1v27h-1zM185 318h1v17h-1zM186 292h1v27h-1zM187 269h1v24h-1zM188 274h1v27h-1zM189 300h1v27h-1zM190 316h1v19h-1zM191 290h1v27h-1zM192 269h1v22h-1zM193 274h1v27h-1zM194 300h1v27h-1zM195 316h1v19h-1zM196 289h1v28h-1zM197 269h1v21h-1zM198 275h1v27h-1zM199 301h1v27h-1zM200 315h1v20h-1zM201 289h1v27h-1zM202 269h1v21h-1zM203 275h1v27h-1zM204 301h1v28h-1zM205 314h1v21h-1zM206 288h1v27h-1zM207 269h1v20h-1zM208 276h1v27h-1zM209 302h1v27h-1zM210 314h1v21h-1zM211 288h1v27h-1zM212 269h1v20h-1zM213 277h1v27h-1zM214 303h1v27h-1zM215 313h1v22h-1zM216 287h1v27h-1zM217 269h1v19h-1zM218 277h1v27h-1zM219 303h1v27h-1zM220 311h1v24h-1zM221 285h1v27h-1zM222 269h1v17h-1zM223 279h1v27h-1zM224 305h1v27h-1zM225 311h1v24h-1zM226 285h1v27h-1zM227 269h1v17h-1zM228 279h1v27h-1zM229 305h1v28h-1zM230 310h1v25h-1zM231 284h1v27h-1zM232 269h1v16h-1zM233 280h1v27h-1zM234 306h1v27h-1zM235 310h1v25h-1zM236 284h1v27h-1zM237 269h1v16h-1zM238 281h1v27h-1zM239 307h1v27h-1zM240 309h1v26h-1zM241 283h1v27h-1zM242 269h1v15h-1zM243 281h1v27h-1zM244 307h1v27h-1zM245 307h1v28h-1zM246 281h1v27h-1zM247 269h1v15h-1zM248 283h1v27h-1zM249 309h1v26h-1zM250 307h1v27h-1zM251 281h1v27h-1zM252 269h1v15h-1zM253 283h1v27h-1zM254 309h1v26h-1zM255 306h1v27h-1zM256 280h1v27h-1zM257 269h1v16h-1zM258 284h1v27h-1zM259 310h1v25h-1zM260 306h1v27h-1zM261 280h1v27h-1zM262 269h1v17h-1zM263 285h1v27h-1zM264 311h1v24h-1zM265 305h1v27h-1zM266 279h1v27h-1zM267 269h1v17h-1zM268 285h1v27h-1zM269 311h1v24h-1zM270 303h1v29h-1zM271 277h1v27h-1zM272 269h1v19h-1zM273 287h1v27h-1zM274 313h1v22h-1zM275 303h1v27h-1zM276 277h1v27h-1zM277 269h1v19h-1zM278 287h1v28h-1zM279 314h1v21h-1zM280 302h1v27h-1zM281 276h1v27h-1zM282 269h1v20h-1zM283 288h1v27h-1zM284 314h1v21h-1zM285 302h1v27h-1zM286 276h1v27h-1zM287 269h1v21h-1zM288 289h1v27h-1zM289 315h1v20h-1zM290 301h1v27h-1zM291 275h1v27h-1zM292 269h1v21h-1zM293 289h1v27h-1zM294 315h1v20h-1zM295 300h1v28h-1zM296 274h1v27h-1zM297 269h1v22h-1zM298 290h1v27h-1zM299 316h1v19h-1zM300 300h1v27h-1zM301 274h1v27h-1zM302 269h1v22h-1zM303 290h1v29h-1zM304 318h1v17h-1zM305 298h1v27h-1zM306 272h1v27h-1zM307 269h1v24h-1zM308 292h1v27h-1zM309 318h1v17h-1zM310 298h1v27h-1zM311 272h1v27h-1zM312 269h1v25h-1zM313 293h1v27h-1zM314 319h1v16h-1zM315 297h1v27h-1zM316 271h1v27h-1zM317 269h1v25h-1zM318 293h1v27h-1zM319 319h1v16h-1zM320 296h1v28h-1zM321 270h1v27h-1zM322 269h1v26h-1zM323 294h1v27h-1zM324 320h1v15h-1zM325 296h1v27h-1zM326 270h1v27h-1zM327 269h1v26h-1zM328 294h1v29h-1zM329 320h1v15h-1zM330 294h1v27h-1zM331 269h1v26h-1zM332 270h1v27h-1zM333 296h1v27h-1zM334 320h1v15h-1zM335 294h1v27h-1zM336 269h1v26h-1zM337 271h1v27h-1zM338 297h1v27h-1zM339 319h1v16h-1zM340 293h1v27h-1zM341 269h1v25h-1zM342 271h1v27h-1zM343 297h1v27h-1zM344 319h1v16h-1zM345 292h1v28h-1zM346 269h1v24h-1zM347 272h1v27h-1zM348 298h1v27h-1zM349 318h1v17h-1zM350 292h1v27h-1zM351 269h1v24h-1zM352 272h1v27h-1zM353 298h1v29h-1zM354 316h1v19h-1zM355 290h1v27h-1zM356 269h1v22h-1zM357 274h1v27h-1zM358 300h1v27h-1zM359 316h1v19h-1zM360 290h1v27h-1zM361 269h1v22h-1zM362 275h1v27h-1zM363 301h1v27h-1zM364 315h1v20h-1zM365 289h1v27h-1zM366 269h1v21h-1zM367 275h1v27h-1zM368 301h1v27h-1zM369 315h1v20h-1zM370 288h1v28h-1zM371 269h1v20h-1zM372 276h1v27h-1zM373 302h1v27h-1zM374 314h1v21h-1zM375 288h1v27h-1zM376 269h1v20h-1zM377 276h1v27h-1zM378 302h1v28h-1zM379 313h1v22h-1zM380 287h1v27h-1zM381 269h1v19h-1zM382 277h1v27h-1zM383 303h1v27h-1zM384 313h1v22h-1zM385 287h1v27h-1zM386 269h1v19h-1zM387 279h1v27h-1zM388 305h1v27h-1zM389 311h1v24h-1zM390 285h1v27h-1zM391 269h1v17h-1zM392 279h1v27h-1zM393 305h1v27h-1zM394 310h1v25h-1zM395 284h1v27h-1zM396 269h1v16h-1zM397 280h1v27h-1zM398 306h1v27h-1zM399 310h1v25h-1zM400 284h1v27h-1zM401 269h1v16h-1zM402 280h1v27h-1zM403 306h1v28h-1zM404 309h1v26h-1zM405 283h1v27h-1zM406 269h1v15h-1zM407 281h1v27h-1zM408 307h1v27h-1zM409 309h1v26h-1zM410 283h1v27h-1zM411 269h1v15h-1zM412 283h1v27h-1zM413 309h1v26h-1zM414 307h1v27h-1zM415 281h1v27h-1zM416 269h1v15h-1zM417 283h1v27h-1zM418 309h1v26h-1zM419 306h1v28h-1zM420 280h1v27h-1zM421 269h1v16h-1zM422 284h1v27h-1zM423 310h1v25h-1zM424 306h1v27h-1zM425 280h1v27h-1zM426 269h1v16h-1zM427 284h1v27h-1zM428 310h1v25h-1zM429 305h1v27h-1zM430 279h1v27h-1zM431 269h1v17h-1zM432 285h1v27h-1zM433 311h1v24h-1zM434 305h1v27h-1zM435 279h1v27h-1zM436 269h1v19h-1zM437 287h1v27h-1zM438 313h1v22h-1zM439 303h1v27h-1zM440 277h1v27h-1zM441 269h1v19h-1zM442 287h1v27h-1zM443 313h1v22h-1zM444 302h1v28h-1zM445 276h1v27h-1zM446 269h1v20h-1zM447 288h1v27h-1zM448 314h1v21h-1zM449 302h1v27h-1zM450 276h1v27h-1zM451 269h1v20h-1zM452 288h1v28h-1zM453 315h1v20h-1zM454 301h1v27h-1zM455 275h1v27h-1zM456 269h1v21h-1zM457 289h1v27h-1zM458 315h1v20h-1zM459 301h1v27h-1zM460 275h1v27h-1zM461 269h1v22h-1zM462 290h1v27h-1zM463 316h1v19h-1zM464 300h1v27h-1zM465 274h1v27h-1zM466 269h1v22h-1zM467 290h1v27h-1zM468 316h1v19h-1zM469 298h1v29h-1zM470 272h1v27h-1zM471 269h1v24h-1zM472 292h1v27h-1zM473 318h1v17h-1zM474 298h1v27h-1zM475 272h1v27h-1zM476 269h1v24h-1zM477 292h1v28h-1zM478 319h1v16h-1zM479 297h1v27h-1zM480 271h1v27h-1zM481 269h1v25h-1zM482 293h1v27h-1zM483 319h1v16h-1zM484 297h1v27h-1zM485 271h1v27h-1zM486 269h1v26h-1zM487 294h1v27h-1zM488 320h1v15h-1zM489 296h1v27h-1zM490 270h1v27h-1zM491 269h1v26h-1zM492 294h1v27h-1zM493 320h1v15h-1zM494 294h1v29h-1zM495 269h1v26h-1zM496 270h1v27h-1zM497 296h1v27h-1zM498 320h1v15h-1zM499 294h1v27h-1zM500 269h1v26h-1zM501 270h1v27h-1zM502 296h1v28h-1zM503 319h1v16h-1zM504 293h1v27h-1zM505 269h1v25h-1zM506 271h1v27h-1zM507 297h1v27h-1zM508 319h1v16h-1zM509 293h1v27h-1zM510 269h1v25h-1zM511 272h1v27h-1zM512 298h1v27h-1zM513 318h1v17h-1zM514 292h1v27h-1zM515 269h1v24h-1zM516 272h1v27h-1zM517 298h1v27h-1zM518 318h1v17h-1zM519 290h1v29h-1zM520 269h1v22h-1zM521 274h1v27h-1zM522 300h1v27h-1zM523 316h1v19h-1zM524 290h1v27h-1zM525 269h1v22h-1zM526 274h1v27h-1zM527 300h1v28h-1zM528 315h1v20h-1zM529 289h1v27h-1zM530 269h1v21h-1zM531 275h1v27h-1zM532 301h1v27h-1zM533 315h1v20h-1zM534 289h1v27h-1zM535 269h1v21h-1zM536 276h1v27h-1zM537 302h1v27h-1zM538 314h1v21h-1zM539 288h1v27h-1zM540 269h1v20h-1zM541 276h1v27h-1zM542 302h1v27h-1zM543 314h1v21h-1zM544 287h1v28h-1zM545 269h1v19h-1zM546 277h1v27h-1zM547 303h1v27h-1zM548 313h1v22h-1zM549 287h1v27h-1zM550 269h1v19h-1zM551 277h1v27h-1zM552 303h1v29h-1zM553 311h1v24h-1zM554 285h1v27h-1zM555 269h1v17h-1zM556 279h1v27h-1zM557 305h1v27h-1zM558 311h1v24h-1zM559 285h1v27h-1zM560 269h1v17h-1zM561 280h1v27h-1zM562 306h1v27h-1zM563 310h1v25h-1zM564 284h1v27h-1z"/>
<path fill="#000" d="M69 266h497v1h-497zM69 337h497v1h-497zM69 266h1v72h-1zM565 266h1v72h-1zM66 266h1v72h-1zM63 269h3v1h-3zM60 301h6v1h-6zM63 334h3v1h-3zM69 341h497v1h-497zM161 342h1v6h-1zM261 342h1v6h-1zM360 342h1v6h-1zM459 342h1v6h-1zM559 342h1v6h-1zM82 342h1v3h-1zM102 342h1v3h-1zM122 342h1v3h-1zM141 342h1v3h-1zM181 342h1v3h-1zM201 342h1v3h-1zM221 342h1v3h-1zM241 342h1v3h-1zM281 342h1v3h-1zM300 342h1v3h-1zM320 342h1v3h-1zM340 342h1v3h-1zM380 342h1v3h-1zM400 342h1v3h-1zM420 342h1v3h-1zM440 342h1v3h-1zM479 342h1v3h-1zM499 342h1v3h-1zM519 342h1v3h-1zM539 342h1v3h-1zM71 255h1v1h-1zM74 255h6v1h-6zM84 255h1v1h-1zM88 255h1v1h-1zM71 256h1v1h-1zM84 256h8v1h-8zM69 257h5v1h-5zM75 257h4v1h-4zM83 257h1v1h-1zM87 257h1v1h-1zM69 258h1v1h-1zM71 258h1v1h-1zM73 258h1v1h-1zM75 258h1v1h-1zM78 258h1v1h-1zM83 258h1v1h-1zM86 258h5v1h-5zM69 259h1v1h-1zM71 259h1v1h-1zM73 259h1v1h-1zM75 259h4v1h-4zM82 259h2v1h-2zM86 259h1v1h-1zM90 259h1v1h-1zM69 260h1v1h-1zM71 260h1v1h-1zM73 260h1v1h-1zM81 260h1v1h-1zM83 260h1v1h-1zM86 260h5v1h-5zM69 261h1v1h-1zM71 261h1v1h-1zM73 261h7v1h-7zM83 261h1v1h-1zM86 261h1v1h-1zM90 261h1v1h-1zM69 262h1v1h-1zM71 262h4v1h-4zM76 262h1v1h-1zM79 262h1v1h-1zM83 262h1v1h-1zM86 262h3v1h-3zM90 262h1v1h-1zM71 263h1v1h-1zM74 263h6v1h-6zM83 263h1v1h-1zM86 263h1v1h-1zM88 263h3v1h-3zM71 264h1v1h-1zM74 264h1v1h-1zM76 264h1v1h-1zM79 264h1v1h-1zM83 264h1v1h-1zM86 264h1v1h-1zM90 264h1v1h-1zM71 265h1v1h-1zM74 265h6v1h-6zM83 265h1v1h-1zM85 265h7v1h-7z"/>
<text x="93.5" y="264" font-size="12.5" fill="#000" textLength="27.5" lengthAdjust="spacingAndGlyphs">(mV)</text>
<text x="305.7" y="262" font-size="12" fill="#000" textLength="23.4" lengthAdjust="spacingAndGlyphs">CH 3</text>
<text x="566.3" y="335" font-size="12.5" fill="#000" textLength="16.5" lengthAdjust="spacingAndGlyphs">(S)</text>
<text x="59" y="306" font-size="12.5" fill="#000" text-anchor="end">0</text>
<circle cx="608.0" cy="261.9" r="4.3" fill="#808080" stroke="#505050" stroke-width="1" style="shape-rendering:geometricPrecision"/>
<path fill="#d4d0c8" d="M713 267h1v70h-1zM745 267h1v70h-1zM768 267h1v70h-1zM786 267h1v70h-1zM800 267h1v70h-1zM812 267h1v70h-1zM823 267h1v70h-1zM832 267h1v70h-1zM896 267h1v70h-1zM928 267h1v70h-1zM951 267h1v70h-1zM969 267h1v70h-1zM984 267h1v70h-1zM996 267h1v70h-1zM1007 267h1v70h-1zM1016 267h1v70h-1zM1080 267h1v70h-1zM1112 267h1v70h-1zM1135 267h1v70h-1zM658 268h494v1h-494z"/>
<path fill="#808080" d="M658 290h494v1h-494z"/>
<path fill="#d4d0c8" d="M658 312h494v1h-494z"/>
<path fill="#808080" d="M841 267h1v70h-1zM1024 267h1v70h-1zM658 334h494v1h-494z"/>
<polyline points="658.5,332.5 711.5,332.5 743.5,331.5 766.5,331.5 784.5,331.5 798.5,330.5 811.5,329.5 821.5,327.5 831.5,321.5 839.5,269.5 847.5,313.5 853.5,325.5 860.5,328.5 866.5,330.5 871.5,331.5 876.5,331.5 881.5,332.5 886.5,332.5 890.5,332.5 894.5,332.5 898.5,332.5 902.5,333.5 905.5,333.5 909.5,333.5 912.5,333.5 915.5,333.5 918.5,333.5 921.5,333.5 924.5,333.5 926.5,331.5 929.5,326.5 932.5,332.5 934.5,332.5 936.5,333.5 939.5,333.5 941.5,333.5 943.5,333.5 945.5,333.5 947.5,333.5 949.5,333.5 951.5,333.5 953.5,333.5 955.5,333.5 957.5,333.5 959.5,333.5 961.5,333.5 962.5,333.5 964.5,333.5 966.5,333.5 967.5,334.5 969.5,332.5 970.5,333.5 972.5,333.5 973.5,333.5 975.5,333.5 976.5,333.5 978.5,333.5 979.5,333.5 980.5,333.5 982.5,333.5 983.5,333.5 984.5,333.5 986.5,333.5 987.5,333.5 988.5,334.5 989.5,334.5 991.5,334.5 992.5,334.5 993.5,334.5 994.5,334.5 995.5,333.5 996.5,332.5 997.5,333.5 998.5,333.5 999.5,333.5 1001.5,333.5 1002.5,333.5 1003.5,334.5 1004.5,334.5 1005.5,334.5 1006.5,334.5 1007.5,334.5 1008.5,334.5 1009.5,334.5 1009.5,334.5 1010.5,334.5 1011.5,334.5 1012.5,334.5 1013.5,334.5 1014.5,334.5 1015.5,334.5 1016.5,333.5 1017.5,333.5 1017.5,334.5 1018.5,334.5 1019.5,334.5 1020.5,334.5 1021.5,334.5 1022.5,334.5 1022.5,334.5 1023.5,334.5 1024.5,334.5 1025.5,334.5 1026.5,334.5 1026.5,334.5 1027.5,334.5 1028.5,334.5 1029.5,334.5 1029.5,334.5 1030.5,334.5 1031.5,334.5 1031.5,334.5 1032.5,333.5 1033.5,334.5 1034.5,334.5 1034.5,334.5 1035.5,334.5 1036.5,334.5 1036.5,334.5 1037.5,334.5 1038.5,334.5 1038.5,334.5 1039.5,334.5 1040.5,334.5 1040.5,334.5 1041.5,334.5 1041.5,334.5 1042.5,334.5 1043.5,334.5 1043.5,334.5 1044.5,334.5 1045.5,334.5 1045.5,334.5 1046.5,334.5 1046.5,334.5 1047.5,334.5 1047.5,334.5 1048.5,334.5 1049.5,334.5 1049.5,334.5 1050.5,334.5 1050.5,334.5 1051.5,334.5 1051.5,334.5 1052.5,334.5 1053.5,334.5 1053.5,334.5 1054.5,334.5 1054.5,334.5 1055.5,334.5 1055.5,334.5 1056.5,334.5 1056.5,334.5 1057.5,333.5 1057.5,334.5 1058.5,334.5 1058.5,334.5 1059.5,334.5 1059.5,334.5 1060.5,334.5 1060.5,334.5 1061.5,334.5 1061.5,334.5 1062.5,334.5 1062.5,334.5 1063.5,334.5 1063.5,334.5 1064.5,334.5 1064.5,334.5 1065.5,334.5 1065.5,334.5 1066.5,334.5 1066.5,334.5 1067.5,334.5 1067.5,334.5 1067.5,334.5 1068.5,334.5 1068.5,334.5 1069.5,334.5 1069.5,334.5 1070.5,334.5 1070.5,334.5 1071.5,334.5 1071.5,334.5 1071.5,334.5 1072.5,334.5 1072.5,334.5 1073.5,334.5 1073.5,334.5 1074.5,334.5 1074.5,334.5 1074.5,334.5 1075.5,334.5 1075.5,334.5 1076.5,334.5 1076.5,334.5 1076.5,334.5 1077.5,334.5 1077.5,334.5 1078.5,334.5 1078.5,334.5 1078.5,334.5 1079.5,334.5 1079.5,334.5 1080.5,334.5 1080.5,334.5 1080.5,334.5 1081.5,334.5 1081.5,334.5 1082.5,334.5 1082.5,334.5 1082.5,334.5 1083.5,334.5 1083.5,334.5 1083.5,334.5 1084.5,334.5 1084.5,334.5 1085.5,334.5 1085.5,334.5 1085.5,334.5 1086.5,334.5 1086.5,334.5 1086.5,334.5 1087.5,334.5 1087.5,334.5 1087.5,334.5 1088.5,334.5 1088.5,334.5 1088.5,334.5 1089.5,334.5 1089.5,334.5 1089.5,334.5 1090.5,334.5 1090.5,334.5 1090.5,334.5 1091.5,334.5 1091.5,334.5 1091.5,334.5 1092.5,334.5 1092.5,334.5 1092.5,334.5 1093.5,334.5 1093.5,334.5 1093.5,334.5 1094.5,334.5 1094.5,334.5 1094.5,334.5 1095.5,334.5 1095.5,334.5 1095.5,334.5 1096.5,334.5 1096.5,334.5 1096.5,334.5 1097.5,334.5 1097.5,334.5 1097.5,334.5 1098.5,334.5 1098.5,334.5 1098.5,334.5 1099.5,334.5 1099.5,334.5 1099.5,334.5 1099.5,334.5 1100.5,334.5 1100.5,334.5 1100.5,334.5 1101.5,334.5 1101.5,334.5 1101.5,334.5 1102.5,334.5 1102.5,334.5 1102.5,334.5 1102.5,334.5 1103.5,334.5 1103.5,334.5 1103.5,334.5 1104.5,334.5 1104.5,334.5 1104.5,334.5 1104.5,334.5 1105.5,334.5 1105.5,334.5 1105.5,334.5 1106.5,334.5 1106.5,334.5 1106.5,334.5 1106.5,334.5 1107.5,334.5 1107.5,334.5 1107.5,334.5 1108.5,334.5 1108.5,334.5 1108.5,334.5 1108.5,334.5 1109.5,334.5 1109.5,334.5 1109.5,334.5 1109.5,334.5 1110.5,334.5 1110.5,334.5 1110.5,334.5 1110.5,334.5 1111.5,334.5 1111.5,334.5 1111.5,334.5 1112.5,334.5 1112.5,334.5 1112.5,334.5 1112.5,334.5 1113.5,334.5 1113.5,334.5 1113.5,334.5 1113.5,334.5 1114.5,334.5 1114.5,334.5 1114.5,334.5 1114.5,334.5 1115.5,334.5 1115.5,334.5 1115.5,334.5 1115.5,334.5 1116.5,334.5 1116.5,334.5 1116.5,334.5 1116.5,334.5 1117.5,334.5 1117.5,334.5 1117.5,334.5 1117.5,334.5 1118.5,334.5 1118.5,334.5 1118.5,334.5 1118.5,334.5 1118.5,334.5 1119.5,334.5 1119.5,334.5 1119.5,334.5 1119.5,334.5 1120.5,334.5 1120.5,334.5 1120.5,334.5 1120.5,334.5 1121.5,334.5 1121.5,334.5 1121.5,334.5 1121.5,334.5 1122.5,334.5 1122.5,334.5 1122.5,334.5 1122.5,334.5 1122.5,334.5 1123.5,334.5 1123.5,334.5 1123.5,334.5 1123.5,334.5 1124.5,334.5 1124.5,334.5 1124.5,334.5 1124.5,334.5 1124.5,334.5 1125.5,334.5 1125.5,334.5 1125.5,334.5 1125.5,334.5 1126.5,334.5 1126.5,334.5 1126.5,334.5 1126.5,334.5 1126.5,334.5 1127.5,334.5 1127.5,334.5 1127.5,334.5 1127.5,334.5 1128.5,334.5 1128.5,334.5 1128.5,334.5 1128.5,334.5 1128.5,334.5 1129.5,334.5 1129.5,334.5 1129.5,334.5 1129.5,334.5 1129.5,334.5 1130.5,334.5 1130.5,334.5 1130.5,334.5 1130.5,334.5 1130.5,334.5 1131.5,334.5 1131.5,334.5 1131.5,334.5 1131.5,334.5 1131.5,334.5 1132.5,334.5 1132.5,334.5 1132.5,334.5 1132.5,334.5 1132.5,334.5 1133.5,334.5 1133.5,334.5 1133.5,334.5 1133.5,334.5 1133.5,334.5 1134.5,334.5 1134.5,334.5 1134.5,334.5 1134.5,334.5 1134.5,334.5 1135.5,334.5 1135.5,334.5 1135.5,334.5 1135.5,334.5 1135.5,334.5 1136.5,334.5 1136.5,334.5 1136.5,334.5 1136.5,334.5 1136.5,334.5 1137.5,334.5 1137.5,334.5 1137.5,334.5 1137.5,334.5 1137.5,334.5 1138.5,334.5 1138.5,334.5 1138.5,334.5 1138.5,334.5 1138.5,334.5 1138.5,334.5 1139.5,334.5 1139.5,334.5 1139.5,334.5 1139.5,334.5 1139.5,334.5 1140.5,334.5 1140.5,334.5 1140.5,334.5 1140.5,334.5 1140.5,334.5 1140.5,334.5 1141.5,334.5 1141.5,334.5 1141.5,334.5 1141.5,334.5 1141.5,334.5 1142.5,334.5 1142.5,334.5 1142.5,334.5 1142.5,334.5 1142.5,334.5 1142.5,334.5 1143.5,334.5 1143.5,334.5 1143.5,334.5 1143.5,334.5 1143.5,334.5 1143.5,334.5 1144.5,334.5 1144.5,334.5 1144.5,334.5 1144.5,334.5 1144.5,334.5 1145.5,334.5 1145.5,334.5 1145.5,334.5 1145.5,334.5 1145.5,334.5 1145.5,334.5 1146.5,334.5 1146.5,334.5 1146.5,334.5 1146.5,334.5 1146.5,334.5 1146.5,334.5 1147.5,334.5 1147.5,334.5 1147.5,334.5 1147.5,334.5 1147.5,334.5 1147.5,334.5 1148.5,334.5 1148.5,334.5 1148.5,334.5 1148.5,334.5 1148.5,334.5 1148.5,334.5 1149.5,334.5 1149.5,334.5 1149.5,334.5 1149.5,334.5 1149.5,334.5 1149.5,334.5 1150.5,334.5 1150.5,334.5 1150.5,334.5 1150.5,334.5 1150.5,334.5 1150.5,334.5 1150.5,334.5 1151.5,334.5 1151.5,334.5 1151.5,334.5 1151.5,334.5 1151.5,334.5 1151.5,334.5" fill="none" stroke="#0000ff" stroke-width="1"/>
<path fill="#000" d="M656 266h497v1h-497zM656 337h497v1h-497zM656 266h1v72h-1z"/>
<path fill="#707070" d="M657 267h1v70h-1z"/>
<path fill="#000" d="M1152 266h1v72h-1zM653 266h1v72h-1z"/>
<path fill="#ff8000" d="M686 267h1v71h-1zM656 329h1v1h1v1h1v1h1v1h-1v1h-1v1h-1v1h-1z"/>
<path fill="#000" d="M650 268h3v1h-3zM647 290h6v1h-6z"/>
<text x="645.5" y="295" font-size="12.5" fill="#000" text-anchor="end">50.0</text>
<path fill="#000" d="M650 312h3v1h-3zM656 341h498v1h-498zM657 342h1v6h-1zM841 342h1v6h-1zM1024 342h1v6h-1zM713 342h1v3h-1zM745 342h1v3h-1zM768 342h1v3h-1zM786 342h1v3h-1zM800 342h1v3h-1zM812 342h1v3h-1zM823 342h1v3h-1zM832 342h1v3h-1zM896 342h1v3h-1zM928 342h1v3h-1zM951 342h1v3h-1zM969 342h1v3h-1zM984 342h1v3h-1zM996 342h1v3h-1zM1007 342h1v3h-1zM1016 342h1v3h-1zM1080 342h1v3h-1zM1112 342h1v3h-1zM1135 342h1v3h-1zM1153 342h1v3h-1z"/>
<text x="656.6" y="264" font-size="12.5" fill="#000" textLength="82" lengthAdjust="spacingAndGlyphs">Amplitude(mV)</text>
<text x="881.6" y="262" font-size="12" fill="#000" textLength="45.6" lengthAdjust="spacingAndGlyphs">FFT CH 3</text>
<text x="971.5" y="263" font-size="12.5" fill="#000" textLength="177" lengthAdjust="spacingAndGlyphs">[9.76563e+000,2.43172e+000]</text>
<text x="1153.3" y="335" font-size="12.5" fill="#000" textLength="22.5" lengthAdjust="spacingAndGlyphs">(Hz)</text>
<circle cx="21.1" cy="359.9" r="4.3" fill="#808080" stroke="#505050" stroke-width="1" style="shape-rendering:geometricPrecision"/>
<path fill="#d4d0c8" d="M82 365h1v70h-1zM102 365h1v70h-1zM122 365h1v70h-1zM141 365h1v70h-1zM181 365h1v70h-1zM201 365h1v70h-1zM221 365h1v70h-1zM241 365h1v70h-1zM281 365h1v70h-1zM300 365h1v70h-1zM320 365h1v70h-1zM340 365h1v70h-1zM380 365h1v70h-1zM400 365h1v70h-1zM420 365h1v70h-1zM440 365h1v70h-1zM479 365h1v70h-1zM499 365h1v70h-1zM519 365h1v70h-1zM539 365h1v70h-1zM70 367h495v1h-495zM70 432h495v1h-495z"/>
<path fill="#008080" d="M161 365h1v70h-1zM261 365h1v70h-1zM360 365h1v70h-1zM459 365h1v70h-1zM559 365h1v70h-1zM70 399h495v1h-495z"/>
<path fill="#0000ff" d="M70 367h1v66h-1zM71 403h1v15h-1zM72 390h1v14h-1zM73 377h1v14h-1zM74 368h1v65h-1zM75 416h1v14h-1zM76 403h1v14h-1zM77 390h1v14h-1zM78 377h1v14h-1zM79 368h1v65h-1zM80 415h1v15h-1zM81 402h1v14h-1zM82 389h1v14h-1zM83 376h1v14h-1zM84 368h1v65h-1zM85 415h1v14h-1zM86 402h1v14h-1zM87 389h1v14h-1zM88 376h1v14h-1zM89 368h1v65h-1zM90 415h1v14h-1zM91 402h1v14h-1zM92 389h1v14h-1zM93 376h1v14h-1zM94 368h1v65h-1zM95 415h1v14h-1zM96 401h1v15h-1zM97 388h1v14h-1zM98 375h1v14h-1zM99 368h1v65h-1zM100 414h1v14h-1zM101 401h1v14h-1zM102 388h1v14h-1zM103 375h1v14h-1zM104 368h1v65h-1zM105 413h1v15h-1zM106 400h1v14h-1zM107 387h1v14h-1zM108 374h1v14h-1zM109 368h1v65h-1zM110 413h1v14h-1zM111 400h1v14h-1zM112 387h1v14h-1zM113 374h1v14h-1zM114 368h1v65h-1zM115 413h1v14h-1zM116 400h1v14h-1zM117 387h1v14h-1zM118 374h1v14h-1zM119 368h1v65h-1zM120 413h1v14h-1zM121 399h1v15h-1zM122 386h1v14h-1zM123 373h1v14h-1zM124 368h1v65h-1zM125 412h1v14h-1zM126 399h1v14h-1zM127 386h1v14h-1zM128 373h1v14h-1zM129 368h1v65h-1zM130 412h1v14h-1zM131 399h1v14h-1zM132 386h1v14h-1zM133 373h1v14h-1zM134 368h1v65h-1zM135 412h1v14h-1zM136 399h1v14h-1zM137 386h1v14h-1zM138 372h1v15h-1zM139 368h1v65h-1zM140 411h1v14h-1zM141 398h1v14h-1zM142 385h1v14h-1zM143 372h1v14h-1zM144 368h1v65h-1zM145 411h1v14h-1zM146 397h1v15h-1zM147 384h1v14h-1zM148 371h1v14h-1zM149 368h1v65h-1zM150 410h1v14h-1zM151 397h1v14h-1zM152 384h1v14h-1zM153 371h1v14h-1zM154 368h1v65h-1zM155 410h1v14h-1zM156 397h1v14h-1zM157 384h1v14h-1zM158 371h1v14h-1zM159 368h1v65h-1zM160 410h1v14h-1zM161 397h1v14h-1zM162 384h1v14h-1zM163 370h1v15h-1zM164 368h1v65h-1zM165 409h1v14h-1zM166 396h1v14h-1zM167 383h1v14h-1zM168 370h1v14h-1zM169 368h1v65h-1zM170 409h1v14h-1zM171 395h1v15h-1zM172 382h1v14h-1zM173 369h1v14h-1zM174 368h1v65h-1zM175 408h1v14h-1zM176 395h1v14h-1zM177 382h1v14h-1zM178 369h1v14h-1zM179 368h1v65h-1zM180 408h1v14h-1zM181 395h1v14h-1zM182 382h1v14h-1zM183 369h1v14h-1zM184 368h1v65h-1zM185 408h1v14h-1zM186 395h1v14h-1zM187 381h1v15h-1zM188 368h1v14h-1zM189 368h1v65h-1zM190 407h1v14h-1zM191 394h1v14h-1zM192 381h1v14h-1zM193 368h1v14h-1zM194 368h1v65h-1zM195 407h1v14h-1zM196 393h1v15h-1zM197 380h1v14h-1zM198 368h1v33h-1zM199 400h1v33h-1zM200 406h1v14h-1zM201 393h1v14h-1zM202 380h1v14h-1zM203 368h1v33h-1zM204 400h1v33h-1zM205 406h1v14h-1zM206 393h1v14h-1zM207 380h1v14h-1zM208 368h1v65h-1zM209 419h1v14h-1zM210 406h1v14h-1zM211 393h1v14h-1zM212 379h1v15h-1zM213 368h1v65h-1zM214 418h1v14h-1zM215 405h1v14h-1zM216 392h1v14h-1zM217 379h1v14h-1zM218 368h1v65h-1zM219 418h1v14h-1zM220 404h1v15h-1zM221 391h1v14h-1zM222 378h1v14h-1zM223 368h1v65h-1zM224 417h1v14h-1zM225 404h1v14h-1zM226 391h1v14h-1zM227 378h1v14h-1zM228 368h1v65h-1zM229 417h1v14h-1zM230 404h1v14h-1zM231 391h1v14h-1zM232 378h1v14h-1zM233 368h1v65h-1zM234 417h1v14h-1zM235 404h1v14h-1zM236 391h1v14h-1zM237 377h1v15h-1zM238 368h1v65h-1zM239 416h1v14h-1zM240 403h1v14h-1zM241 390h1v14h-1zM242 377h1v14h-1zM243 368h1v65h-1zM244 416h1v14h-1zM245 402h1v15h-1zM246 389h1v14h-1zM247 376h1v14h-1zM248 368h1v65h-1zM249 415h1v14h-1zM250 402h1v14h-1zM251 389h1v14h-1zM252 376h1v14h-1zM253 368h1v65h-1zM254 415h1v14h-1zM255 402h1v14h-1zM256 389h1v14h-1zM257 376h1v14h-1zM258 368h1v65h-1zM259 415h1v14h-1zM260 402h1v14h-1zM261 389h1v14h-1zM262 375h1v15h-1zM263 368h1v65h-1zM264 414h1v14h-1zM265 401h1v14h-1zM266 388h1v14h-1zM267 375h1v14h-1zM268 368h1v65h-1zM269 414h1v14h-1zM270 400h1v15h-1zM271 387h1v14h-1zM272 374h1v14h-1zM273 368h1v65h-1zM274 413h1v14h-1zM275 400h1v14h-1zM276 387h1v14h-1zM277 374h1v14h-1zM278 368h1v65h-1zM279 413h1v14h-1zM280 400h1v14h-1zM281 387h1v14h-1zM282 374h1v14h-1zM283 368h1v65h-1zM284 413h1v14h-1zM285 400h1v14h-1zM286 387h1v14h-1zM287 373h1v15h-1zM288 368h1v65h-1zM289 412h1v14h-1zM290 399h1v14h-1zM291 386h1v14h-1zM292 373h1v14h-1zM293 368h1v65h-1zM294 412h1v14h-1zM295 399h1v14h-1zM296 386h1v14h-1zM297 373h1v14h-1zM298 368h1v65h-1zM299 412h1v14h-1zM300 399h1v14h-1zM301 386h1v14h-1zM302 373h1v14h-1zM303 368h1v65h-1zM304 411h1v14h-1zM305 398h1v14h-1zM306 385h1v14h-1zM307 372h1v14h-1zM308 368h1v65h-1zM309 411h1v14h-1zM310 398h1v14h-1zM311 385h1v14h-1zM312 371h1v15h-1zM313 368h1v65h-1zM314 410h1v14h-1zM315 397h1v14h-1zM316 384h1v14h-1zM317 371h1v14h-1zM318 368h1v65h-1zM319 410h1v14h-1zM320 397h1v14h-1zM321 384h1v14h-1zM322 371h1v14h-1zM323 368h1v65h-1zM324 410h1v14h-1zM325 397h1v14h-1zM326 384h1v14h-1zM327 371h1v14h-1zM328 368h1v65h-1zM329 409h1v14h-1zM330 396h1v14h-1zM331 383h1v14h-1zM332 370h1v14h-1zM333 368h1v65h-1zM334 409h1v14h-1zM335 396h1v14h-1zM336 382h1v15h-1zM337 369h1v14h-1zM338 368h1v65h-1zM339 408h1v14h-1zM340 395h1v14h-1zM341 382h1v14h-1zM342 369h1v14h-1zM343 368h1v65h-1zM344 408h1v14h-1zM345 395h1v14h-1zM346 382h1v14h-1zM347 369h1v14h-1zM348 368h1v65h-1zM349 408h1v14h-1zM350 395h1v14h-1zM351 382h1v14h-1zM352 369h1v14h-1zM353 368h1v65h-1zM354 407h1v14h-1zM355 394h1v14h-1zM356 381h1v14h-1zM357 368h1v14h-1zM358 368h1v65h-1zM359 407h1v14h-1zM360 394h1v14h-1zM361 380h1v15h-1zM362 368h1v33h-1zM363 400h1v33h-1zM364 406h1v14h-1zM365 393h1v14h-1zM366 380h1v14h-1zM367 368h1v33h-1zM368 400h1v33h-1zM369 406h1v14h-1zM370 393h1v14h-1zM371 380h1v14h-1zM372 368h1v65h-1zM373 419h1v14h-1zM374 406h1v14h-1zM375 393h1v14h-1zM376 380h1v14h-1zM377 368h1v65h-1zM378 418h1v15h-1zM379 405h1v14h-1zM380 392h1v14h-1zM381 379h1v14h-1zM382 368h1v65h-1zM383 418h1v14h-1zM384 405h1v14h-1zM385 392h1v14h-1zM386 378h1v15h-1zM387 368h1v65h-1zM388 417h1v14h-1zM389 404h1v14h-1zM390 391h1v14h-1zM391 378h1v14h-1zM392 368h1v65h-1zM393 417h1v14h-1zM394 404h1v14h-1zM395 391h1v14h-1zM396 378h1v14h-1zM397 368h1v65h-1zM398 417h1v14h-1zM399 404h1v14h-1zM400 391h1v14h-1zM401 378h1v14h-1zM402 368h1v65h-1zM403 416h1v15h-1zM404 403h1v14h-1zM405 390h1v14h-1zM406 377h1v14h-1zM407 368h1v65h-1zM408 416h1v14h-1zM409 403h1v14h-1zM410 390h1v14h-1zM411 376h1v15h-1zM412 368h1v65h-1zM413 415h1v14h-1zM414 402h1v14h-1zM415 389h1v14h-1zM416 376h1v14h-1zM417 368h1v65h-1zM418 415h1v14h-1zM419 402h1v14h-1zM420 389h1v14h-1zM421 376h1v14h-1zM422 368h1v65h-1zM423 415h1v14h-1zM424 402h1v14h-1zM425 389h1v14h-1zM426 376h1v14h-1zM427 368h1v65h-1zM428 414h1v15h-1zM429 401h1v14h-1zM430 388h1v14h-1zM431 375h1v14h-1zM432 368h1v65h-1zM433 414h1v14h-1zM434 401h1v14h-1zM435 388h1v14h-1zM436 374h1v15h-1zM437 368h1v65h-1zM438 413h1v14h-1zM439 400h1v14h-1zM440 387h1v14h-1zM441 374h1v14h-1zM442 368h1v65h-1zM443 413h1v14h-1zM444 400h1v14h-1zM445 387h1v14h-1zM446 374h1v14h-1zM447 368h1v65h-1zM448 413h1v14h-1zM449 400h1v14h-1zM450 387h1v14h-1zM451 374h1v14h-1zM452 368h1v65h-1zM453 412h1v14h-1zM454 399h1v14h-1zM455 386h1v14h-1zM456 373h1v14h-1zM457 368h1v65h-1zM458 412h1v14h-1zM459 399h1v14h-1zM460 386h1v14h-1zM461 373h1v14h-1zM462 368h1v65h-1zM463 412h1v14h-1zM464 399h1v14h-1zM465 386h1v14h-1zM466 373h1v14h-1zM467 368h1v65h-1zM468 412h1v14h-1zM469 398h1v15h-1zM470 385h1v14h-1zM471 372h1v14h-1zM472 368h1v65h-1zM473 411h1v14h-1zM474 398h1v14h-1zM475 385h1v14h-1zM476 372h1v14h-1zM477 368h1v65h-1zM478 410h1v14h-1zM479 397h1v14h-1zM480 384h1v14h-1zM481 371h1v14h-1zM482 368h1v65h-1zM483 410h1v14h-1zM484 397h1v14h-1zM485 384h1v14h-1zM486 371h1v14h-1zM487 368h1v65h-1zM488 410h1v14h-1zM489 397h1v14h-1zM490 384h1v14h-1zM491 371h1v14h-1zM492 368h1v65h-1zM493 410h1v14h-1zM494 396h1v15h-1zM495 383h1v14h-1zM496 370h1v14h-1zM497 368h1v65h-1zM498 409h1v14h-1zM499 396h1v14h-1zM500 383h1v14h-1zM501 370h1v14h-1zM502 368h1v65h-1zM503 408h1v14h-1zM504 395h1v14h-1zM505 382h1v14h-1zM506 369h1v14h-1zM507 368h1v65h-1zM508 408h1v14h-1zM509 395h1v14h-1zM510 382h1v14h-1zM511 369h1v14h-1zM512 368h1v65h-1zM513 408h1v14h-1zM514 395h1v14h-1zM515 382h1v14h-1zM516 369h1v14h-1zM517 368h1v65h-1zM518 408h1v14h-1zM519 394h1v15h-1zM520 381h1v14h-1zM521 368h1v14h-1zM522 368h1v65h-1zM523 407h1v14h-1zM524 394h1v14h-1zM525 381h1v14h-1zM526 368h1v14h-1zM527 368h1v65h-1zM528 406h1v14h-1zM529 393h1v14h-1zM530 380h1v14h-1zM531 368h1v33h-1zM532 400h1v33h-1zM533 406h1v14h-1zM534 393h1v14h-1zM535 380h1v14h-1zM536 368h1v65h-1zM537 419h1v14h-1zM538 406h1v14h-1zM539 393h1v14h-1zM540 380h1v14h-1zM541 368h1v65h-1zM542 419h1v14h-1zM543 406h1v14h-1zM544 392h1v15h-1zM545 379h1v14h-1zM546 368h1v65h-1zM547 418h1v14h-1zM548 405h1v14h-1zM549 392h1v14h-1zM550 379h1v14h-1zM551 368h1v65h-1zM552 417h1v15h-1zM553 404h1v14h-1zM554 391h1v14h-1zM555 378h1v14h-1zM556 368h1v65h-1zM557 417h1v14h-1zM558 404h1v14h-1zM559 391h1v14h-1zM560 378h1v14h-1zM561 368h1v65h-1zM562 417h1v14h-1zM563 404h1v14h-1zM564 391h1v14h-1z"/>
<path fill="#000" d="M69 364h497v1h-497zM69 435h497v1h-497zM69 364h1v72h-1zM565 364h1v72h-1zM66 364h1v72h-1zM63 367h3v1h-3zM60 399h6v1h-6zM63 432h3v1h-3zM69 439h497v1h-497zM161 440h1v6h-1zM261 440h1v6h-1zM360 440h1v6h-1zM459 440h1v6h-1zM559 440h1v6h-1zM82 440h1v3h-1zM102 440h1v3h-1zM122 440h1v3h-1zM141 440h1v3h-1zM181 440h1v3h-1zM201 440h1v3h-1zM221 440h1v3h-1zM241 440h1v3h-1zM281 440h1v3h-1zM300 440h1v3h-1zM320 440h1v3h-1zM340 440h1v3h-1zM380 440h1v3h-1zM400 440h1v3h-1zM420 440h1v3h-1zM440 440h1v3h-1zM479 440h1v3h-1zM499 440h1v3h-1zM519 440h1v3h-1zM539 440h1v3h-1zM71 353h1v1h-1zM74 353h6v1h-6zM84 353h1v1h-1zM88 353h1v1h-1zM71 354h1v1h-1zM84 354h8v1h-8zM69 355h5v1h-5zM75 355h4v1h-4zM83 355h1v1h-1zM87 355h1v1h-1zM69 356h1v1h-1zM71 356h1v1h-1zM73 356h1v1h-1zM75 356h1v1h-1zM78 356h1v1h-1zM83 356h1v1h-1zM86 356h5v1h-5zM69 357h1v1h-1zM71 357h1v1h-1zM73 357h1v1h-1zM75 357h4v1h-4zM82 357h2v1h-2zM86 357h1v1h-1zM90 357h1v1h-1zM69 358h1v1h-1zM71 358h1v1h-1zM73 358h1v1h-1zM81 358h1v1h-1zM83 358h1v1h-1zM86 358h5v1h-5zM69 359h1v1h-1zM71 359h1v1h-1zM73 359h7v1h-7zM83 359h1v1h-1zM86 359h1v1h-1zM90 359h1v1h-1zM69 360h1v1h-1zM71 360h4v1h-4zM76 360h1v1h-1zM79 360h1v1h-1zM83 360h1v1h-1zM86 360h3v1h-3zM90 360h1v1h-1zM71 361h1v1h-1zM74 361h6v1h-6zM83 361h1v1h-1zM86 361h1v1h-1zM88 361h3v1h-3zM71 362h1v1h-1zM74 362h1v1h-1zM76 362h1v1h-1zM79 362h1v1h-1zM83 362h1v1h-1zM86 362h1v1h-1zM90 362h1v1h-1zM71 363h1v1h-1zM74 363h6v1h-6zM83 363h1v1h-1zM85 363h7v1h-7z"/>
<text x="93.5" y="362" font-size="12.5" fill="#000" textLength="27.5" lengthAdjust="spacingAndGlyphs">(mV)</text>
<text x="305.7" y="360" font-size="12" fill="#000" textLength="23.4" lengthAdjust="spacingAndGlyphs">CH 4</text>
<text x="566.3" y="433" font-size="12.5" fill="#000" textLength="16.5" lengthAdjust="spacingAndGlyphs">(S)</text>
<text x="59" y="404" font-size="12.5" fill="#000" text-anchor="end">0</text>
<circle cx="608.0" cy="359.9" r="4.3" fill="#808080" stroke="#505050" stroke-width="1" style="shape-rendering:geometricPrecision"/>
<path fill="#d4d0c8" d="M713 365h1v70h-1zM745 365h1v70h-1zM768 365h1v70h-1zM786 365h1v70h-1zM800 365h1v70h-1zM812 365h1v70h-1zM823 365h1v70h-1zM832 365h1v70h-1zM896 365h1v70h-1zM928 365h1v70h-1zM951 365h1v70h-1zM969 365h1v70h-1zM984 365h1v70h-1zM996 365h1v70h-1zM1007 365h1v70h-1zM1016 365h1v70h-1zM1080 365h1v70h-1zM1112 365h1v70h-1zM1135 365h1v70h-1z"/>
<path fill="#808080" d="M658 376h494v1h-494z"/>
<path fill="#d4d0c8" d="M658 404h494v1h-494z"/>
<path fill="#808080" d="M841 365h1v70h-1zM1024 365h1v70h-1zM658 432h494v1h-494z"/>
<polyline points="658.5,429.5 711.5,429.5 743.5,429.5 766.5,429.5 784.5,429.5 798.5,428.5 811.5,427.5 821.5,425.5 831.5,419.5 839.5,367.5 847.5,411.5 853.5,423.5 860.5,426.5 866.5,427.5 871.5,428.5 876.5,428.5 881.5,428.5 886.5,427.5 890.5,424.5 894.5,408.5 898.5,410.5 902.5,424.5 905.5,427.5 909.5,428.5 912.5,428.5 915.5,429.5 918.5,429.5 921.5,428.5 924.5,427.5 926.5,423.5 929.5,412.5 932.5,428.5 934.5,430.5 936.5,430.5 939.5,431.5 941.5,431.5 943.5,431.5 945.5,431.5 947.5,431.5 949.5,430.5 951.5,415.5 953.5,432.5 955.5,431.5 957.5,431.5 959.5,431.5 961.5,431.5 962.5,431.5 964.5,431.5 966.5,431.5 967.5,430.5 969.5,418.5 970.5,428.5 972.5,430.5 973.5,431.5 975.5,431.5 976.5,431.5 978.5,431.5 979.5,430.5 980.5,430.5 982.5,429.5 983.5,423.5 984.5,425.5 986.5,430.5 987.5,431.5 988.5,431.5 989.5,431.5 991.5,431.5 992.5,431.5 993.5,431.5 994.5,430.5 995.5,428.5 996.5,423.5 997.5,430.5 998.5,431.5 999.5,431.5 1001.5,431.5 1002.5,431.5 1003.5,431.5 1004.5,431.5 1005.5,431.5 1006.5,431.5 1007.5,423.5 1008.5,431.5 1009.5,432.5 1009.5,432.5 1010.5,432.5 1011.5,432.5 1012.5,432.5 1013.5,432.5 1014.5,432.5 1015.5,431.5 1016.5,425.5 1017.5,430.5 1017.5,431.5 1018.5,431.5 1019.5,431.5 1020.5,431.5 1021.5,431.5 1022.5,431.5 1022.5,431.5 1023.5,430.5 1024.5,426.5 1025.5,428.5 1026.5,430.5 1026.5,431.5 1027.5,431.5 1028.5,431.5 1029.5,431.5 1029.5,431.5 1030.5,431.5 1031.5,430.5 1031.5,429.5 1032.5,427.5 1033.5,431.5 1034.5,431.5 1034.5,431.5 1035.5,432.5 1036.5,432.5 1036.5,432.5 1037.5,431.5 1038.5,431.5 1038.5,431.5 1039.5,426.5 1040.5,431.5 1040.5,432.5 1041.5,432.5 1041.5,432.5 1042.5,432.5 1043.5,432.5 1043.5,432.5 1044.5,432.5 1045.5,431.5 1045.5,426.5 1046.5,431.5 1046.5,432.5 1047.5,432.5 1047.5,432.5 1048.5,432.5 1049.5,432.5 1049.5,431.5 1050.5,431.5 1050.5,431.5 1051.5,428.5 1051.5,429.5 1052.5,431.5 1053.5,431.5 1053.5,431.5 1054.5,431.5 1054.5,431.5 1055.5,431.5 1055.5,431.5 1056.5,431.5 1056.5,429.5 1057.5,428.5 1057.5,431.5 1058.5,431.5 1058.5,431.5 1059.5,431.5 1059.5,431.5 1060.5,431.5 1060.5,431.5 1061.5,431.5 1061.5,431.5 1062.5,428.5 1062.5,431.5 1063.5,432.5 1063.5,432.5 1064.5,432.5 1064.5,432.5 1065.5,432.5 1065.5,432.5 1066.5,432.5 1066.5,432.5 1067.5,428.5 1067.5,431.5 1067.5,432.5 1068.5,432.5 1068.5,432.5 1069.5,432.5 1069.5,432.5 1070.5,431.5 1070.5,431.5 1071.5,431.5 1071.5,428.5 1071.5,430.5 1072.5,431.5 1072.5,431.5 1073.5,431.5 1073.5,431.5 1074.5,431.5 1074.5,431.5 1074.5,431.5 1075.5,431.5 1075.5,430.5 1076.5,429.5 1076.5,431.5 1076.5,431.5 1077.5,432.5 1077.5,432.5 1078.5,432.5 1078.5,432.5 1078.5,432.5 1079.5,431.5 1079.5,431.5 1080.5,428.5 1080.5,431.5 1080.5,432.5 1081.5,432.5 1081.5,432.5 1082.5,432.5 1082.5,432.5 1082.5,432.5 1083.5,432.5 1083.5,432.5 1083.5,428.5 1084.5,432.5 1084.5,432.5 1085.5,432.5 1085.5,432.5 1085.5,432.5 1086.5,432.5 1086.5,432.5 1086.5,432.5 1087.5,431.5 1087.5,429.5 1087.5,431.5 1088.5,431.5 1088.5,431.5 1088.5,432.5 1089.5,432.5 1089.5,432.5 1089.5,431.5 1090.5,431.5 1090.5,431.5 1090.5,430.5 1091.5,430.5 1091.5,431.5 1091.5,431.5 1092.5,431.5 1092.5,432.5 1092.5,432.5 1093.5,432.5 1093.5,431.5 1093.5,431.5 1094.5,431.5 1094.5,429.5 1094.5,431.5 1095.5,432.5 1095.5,432.5 1095.5,432.5 1096.5,432.5 1096.5,432.5 1096.5,432.5 1097.5,432.5 1097.5,432.5 1097.5,429.5 1098.5,432.5 1098.5,432.5 1098.5,432.5 1099.5,432.5 1099.5,432.5 1099.5,432.5 1099.5,432.5 1100.5,432.5 1100.5,431.5 1100.5,429.5 1101.5,431.5 1101.5,432.5 1101.5,432.5 1102.5,432.5 1102.5,432.5 1102.5,432.5 1102.5,432.5 1103.5,432.5 1103.5,431.5 1103.5,430.5 1104.5,430.5 1104.5,431.5 1104.5,431.5 1104.5,432.5 1105.5,432.5 1105.5,432.5 1105.5,432.5 1106.5,432.5 1106.5,431.5 1106.5,431.5 1106.5,429.5 1107.5,431.5 1107.5,432.5 1107.5,432.5 1108.5,432.5 1108.5,432.5 1108.5,432.5 1108.5,432.5 1109.5,432.5 1109.5,432.5 1109.5,429.5 1109.5,432.5 1110.5,432.5 1110.5,432.5 1110.5,432.5 1110.5,432.5 1111.5,432.5 1111.5,432.5 1111.5,432.5 1112.5,432.5 1112.5,429.5 1112.5,431.5 1112.5,431.5 1113.5,432.5 1113.5,432.5 1113.5,432.5 1113.5,432.5 1114.5,432.5 1114.5,431.5 1114.5,431.5 1114.5,430.5 1115.5,430.5 1115.5,431.5 1115.5,432.5 1115.5,432.5 1116.5,432.5 1116.5,432.5 1116.5,432.5 1116.5,432.5 1117.5,431.5 1117.5,431.5 1117.5,430.5 1117.5,431.5 1118.5,432.5 1118.5,432.5 1118.5,432.5 1118.5,432.5 1118.5,432.5 1119.5,432.5 1119.5,432.5 1119.5,432.5 1119.5,429.5 1120.5,432.5 1120.5,432.5 1120.5,432.5 1120.5,432.5 1121.5,432.5 1121.5,432.5 1121.5,432.5 1121.5,432.5 1122.5,432.5 1122.5,429.5 1122.5,431.5 1122.5,432.5 1122.5,432.5 1123.5,432.5 1123.5,432.5 1123.5,432.5 1123.5,432.5 1124.5,432.5 1124.5,431.5 1124.5,430.5 1124.5,431.5 1124.5,431.5 1125.5,432.5 1125.5,432.5 1125.5,432.5 1125.5,432.5 1126.5,432.5 1126.5,432.5 1126.5,431.5 1126.5,431.5 1126.5,430.5 1127.5,431.5 1127.5,432.5 1127.5,432.5 1127.5,432.5 1128.5,432.5 1128.5,432.5 1128.5,432.5 1128.5,432.5 1128.5,431.5 1129.5,430.5 1129.5,432.5 1129.5,432.5 1129.5,432.5 1129.5,432.5 1130.5,432.5 1130.5,432.5 1130.5,432.5 1130.5,432.5 1130.5,432.5 1131.5,430.5 1131.5,432.5 1131.5,432.5 1131.5,432.5 1131.5,432.5 1132.5,432.5 1132.5,432.5 1132.5,432.5 1132.5,432.5 1132.5,431.5 1133.5,430.5 1133.5,431.5 1133.5,431.5 1133.5,432.5 1133.5,432.5 1134.5,432.5 1134.5,432.5 1134.5,432.5 1134.5,432.5 1134.5,431.5 1135.5,431.5 1135.5,430.5 1135.5,431.5 1135.5,432.5 1135.5,432.5 1136.5,432.5 1136.5,432.5 1136.5,432.5 1136.5,432.5 1136.5,432.5 1137.5,431.5 1137.5,430.5 1137.5,432.5 1137.5,432.5 1137.5,432.5 1138.5,432.5 1138.5,432.5 1138.5,432.5 1138.5,432.5 1138.5,432.5 1138.5,432.5 1139.5,430.5 1139.5,432.5 1139.5,432.5 1139.5,432.5 1139.5,432.5 1140.5,432.5 1140.5,432.5 1140.5,432.5 1140.5,432.5 1140.5,431.5 1140.5,430.5 1141.5,431.5 1141.5,431.5 1141.5,432.5 1141.5,432.5 1141.5,432.5 1142.5,432.5 1142.5,432.5 1142.5,432.5 1142.5,431.5 1142.5,431.5 1142.5,430.5 1143.5,431.5 1143.5,432.5 1143.5,432.5 1143.5,432.5 1143.5,432.5 1143.5,432.5 1144.5,432.5 1144.5,432.5 1144.5,431.5 1144.5,430.5 1144.5,432.5 1145.5,432.5 1145.5,432.5 1145.5,432.5 1145.5,432.5 1145.5,432.5 1145.5,432.5 1146.5,432.5 1146.5,432.5 1146.5,430.5 1146.5,432.5 1146.5,432.5 1146.5,432.5 1147.5,432.5 1147.5,432.5 1147.5,432.5 1147.5,432.5 1147.5,432.5 1147.5,431.5 1148.5,430.5 1148.5,431.5 1148.5,432.5 1148.5,432.5 1148.5,432.5 1148.5,432.5 1149.5,432.5 1149.5,432.5 1149.5,432.5 1149.5,431.5 1149.5,431.5 1149.5,430.5 1150.5,431.5 1150.5,432.5 1150.5,432.5 1150.5,432.5 1150.5,432.5 1150.5,432.5 1150.5,432.5 1151.5,432.5 1151.5,431.5 1151.5,430.5 1151.5,432.5 1151.5,432.5 1151.5,432.5" fill="none" stroke="#0000ff" stroke-width="1"/>
<path fill="#000" d="M656 364h497v1h-497zM656 435h497v1h-497zM656 364h1v72h-1z"/>
<path fill="#707070" d="M657 365h1v70h-1z"/>
<path fill="#000" d="M1152 364h1v72h-1zM653 364h1v72h-1z"/>
<path fill="#ff8000" d="M686 365h1v71h-1zM656 426h1v1h1v1h1v1h1v1h-1v1h-1v1h-1v1h-1z"/>
<path fill="#000" d="M647 376h6v1h-6z"/>
<text x="645.5" y="381" font-size="12.5" fill="#000" text-anchor="end">500</text>
<path fill="#000" d="M650 404h3v1h-3zM656 439h498v1h-498zM657 440h1v6h-1zM841 440h1v6h-1zM1024 440h1v6h-1zM713 440h1v3h-1zM745 440h1v3h-1zM768 440h1v3h-1zM786 440h1v3h-1zM800 440h1v3h-1zM812 440h1v3h-1zM823 440h1v3h-1zM832 440h1v3h-1zM896 440h1v3h-1zM928 440h1v3h-1zM951 440h1v3h-1zM969 440h1v3h-1zM984 440h1v3h-1zM996 440h1v3h-1zM1007 440h1v3h-1zM1016 440h1v3h-1zM1080 440h1v3h-1zM1112 440h1v3h-1zM1135 440h1v3h-1zM1153 440h1v3h-1z"/>
<text x="656.6" y="362" font-size="12.5" fill="#000" textLength="82" lengthAdjust="spacingAndGlyphs">Amplitude(mV)</text>
<text x="881.6" y="360" font-size="12" fill="#000" textLength="45.6" lengthAdjust="spacingAndGlyphs">FFT CH 4</text>
<text x="971.5" y="361" font-size="12.5" fill="#000" textLength="177" lengthAdjust="spacingAndGlyphs">[9.76563e+000,2.18153e+001]</text>
<text x="1153.3" y="433" font-size="12.5" fill="#000" textLength="22.5" lengthAdjust="spacingAndGlyphs">(Hz)</text>
<circle cx="21.1" cy="457.9" r="4.3" fill="#808080" stroke="#505050" stroke-width="1" style="shape-rendering:geometricPrecision"/>
<path fill="#d4d0c8" d="M82 463h1v70h-1zM102 463h1v70h-1zM122 463h1v70h-1zM141 463h1v70h-1zM181 463h1v70h-1zM201 463h1v70h-1zM221 463h1v70h-1zM241 463h1v70h-1zM281 463h1v70h-1zM300 463h1v70h-1zM320 463h1v70h-1zM340 463h1v70h-1zM380 463h1v70h-1zM400 463h1v70h-1zM420 463h1v70h-1zM440 463h1v70h-1zM479 463h1v70h-1zM499 463h1v70h-1zM519 463h1v70h-1zM539 463h1v70h-1zM70 465h495v1h-495zM70 530h495v1h-495z"/>
<path fill="#008080" d="M161 463h1v70h-1zM261 463h1v70h-1zM360 463h1v70h-1zM459 463h1v70h-1zM559 463h1v70h-1zM70 497h495v1h-495z"/>
<path fill="#0000ff" d="M70 482h1v49h-1zM71 509h1v22h-1zM72 472h1v38h-1zM73 465h1v8h-1zM74 471h1v37h-1zM75 507h1v24h-1zM76 509h1v22h-1zM77 472h1v38h-1zM78 465h1v8h-1zM79 471h1v37h-1zM80 507h1v24h-1zM81 507h1v24h-1zM82 471h1v37h-1zM83 465h1v8h-1zM84 472h1v38h-1zM85 509h1v22h-1zM86 507h1v24h-1zM87 471h1v37h-1zM88 465h1v9h-1zM89 473h1v38h-1zM90 510h1v21h-1zM91 505h1v26h-1zM92 470h1v36h-1zM93 465h1v9h-1zM94 473h1v38h-1zM95 510h1v21h-1zM96 503h1v28h-1zM97 469h1v35h-1zM98 465h1v11h-1zM99 475h1v38h-1zM100 512h1v19h-1zM101 503h1v28h-1zM102 469h1v35h-1zM103 465h1v11h-1zM104 475h1v38h-1zM105 512h1v19h-1zM106 501h1v29h-1zM107 468h1v34h-1zM108 465h1v12h-1zM109 476h1v39h-1zM110 514h1v17h-1zM111 501h1v29h-1zM112 468h1v34h-1zM113 465h1v14h-1zM114 478h1v39h-1zM115 516h1v15h-1zM116 499h1v31h-1zM117 467h1v33h-1zM118 465h1v14h-1zM119 478h1v39h-1zM120 516h1v15h-1zM121 496h1v34h-1zM122 466h1v31h-1zM123 465h1v15h-1zM124 479h1v39h-1zM125 517h1v14h-1zM126 496h1v33h-1zM127 466h1v31h-1zM128 465h1v15h-1zM129 479h1v41h-1zM130 519h1v12h-1zM131 494h1v34h-1zM132 466h1v29h-1zM133 465h1v17h-1zM134 481h1v39h-1zM135 519h1v12h-1zM136 494h1v34h-1zM137 466h1v29h-1zM138 465h1v19h-1zM139 483h1v38h-1zM140 520h1v11h-1zM141 492h1v35h-1zM142 465h1v28h-1zM143 465h1v19h-1zM144 483h1v38h-1zM145 520h1v11h-1zM146 490h1v37h-1zM147 465h1v26h-1zM148 465h1v21h-1zM149 485h1v38h-1zM150 522h1v9h-1zM151 490h1v36h-1zM152 465h1v26h-1zM153 465h1v21h-1zM154 485h1v39h-1zM155 523h1v8h-1zM156 488h1v37h-1zM157 465h1v24h-1zM158 465h1v22h-1zM159 486h1v38h-1zM160 523h1v8h-1zM161 488h1v37h-1zM162 465h1v24h-1zM163 465h1v24h-1zM164 488h1v37h-1zM165 523h1v8h-1zM166 486h1v38h-1zM167 465h1v22h-1zM168 465h1v24h-1zM169 488h1v37h-1zM170 523h1v8h-1zM171 485h1v39h-1zM172 465h1v21h-1zM173 465h1v26h-1zM174 490h1v36h-1zM175 522h1v9h-1zM176 485h1v38h-1zM177 465h1v21h-1zM178 465h1v26h-1zM179 490h1v37h-1zM180 520h1v11h-1zM181 483h1v38h-1zM182 465h1v19h-1zM183 465h1v28h-1zM184 492h1v35h-1zM185 520h1v11h-1zM186 483h1v38h-1zM187 465h1v19h-1zM188 466h1v29h-1zM189 494h1v34h-1zM190 519h1v12h-1zM191 481h1v39h-1zM192 465h1v17h-1zM193 466h1v29h-1zM194 494h1v34h-1zM195 519h1v12h-1zM196 479h1v41h-1zM197 465h1v15h-1zM198 466h1v31h-1zM199 496h1v33h-1zM200 517h1v14h-1zM201 479h1v39h-1zM202 465h1v15h-1zM203 466h1v31h-1zM204 496h1v34h-1zM205 516h1v15h-1zM206 478h1v39h-1zM207 465h1v14h-1zM208 467h1v33h-1zM209 499h1v31h-1zM210 516h1v15h-1zM211 478h1v39h-1zM212 465h1v14h-1zM213 468h1v34h-1zM214 501h1v29h-1zM215 514h1v17h-1zM216 476h1v39h-1zM217 465h1v12h-1zM218 468h1v34h-1zM219 501h1v29h-1zM220 512h1v19h-1zM221 475h1v38h-1zM222 465h1v11h-1zM223 469h1v35h-1zM224 503h1v28h-1zM225 512h1v19h-1zM226 475h1v38h-1zM227 465h1v11h-1zM228 469h1v35h-1zM229 503h1v28h-1zM230 510h1v21h-1zM231 473h1v38h-1zM232 465h1v9h-1zM233 470h1v36h-1zM234 505h1v26h-1zM235 510h1v21h-1zM236 473h1v38h-1zM237 465h1v9h-1zM238 471h1v37h-1zM239 507h1v24h-1zM240 509h1v22h-1zM241 472h1v38h-1zM242 465h1v8h-1zM243 471h1v37h-1zM244 507h1v24h-1zM245 507h1v24h-1zM246 471h1v37h-1zM247 465h1v8h-1zM248 472h1v38h-1zM249 509h1v22h-1zM250 507h1v24h-1zM251 471h1v37h-1zM252 465h1v8h-1zM253 472h1v38h-1zM254 509h1v22h-1zM255 505h1v26h-1zM256 470h1v36h-1zM257 465h1v9h-1zM258 473h1v38h-1zM259 510h1v21h-1zM260 505h1v26h-1zM261 470h1v36h-1zM262 465h1v11h-1zM263 475h1v38h-1zM264 512h1v19h-1zM265 503h1v28h-1zM266 469h1v35h-1zM267 465h1v11h-1zM268 475h1v38h-1zM269 512h1v19h-1zM270 501h1v30h-1zM271 468h1v34h-1zM272 465h1v12h-1zM273 476h1v39h-1zM274 514h1v17h-1zM275 501h1v29h-1zM276 468h1v34h-1zM277 465h1v12h-1zM278 476h1v41h-1zM279 516h1v15h-1zM280 499h1v31h-1zM281 467h1v33h-1zM282 465h1v14h-1zM283 478h1v39h-1zM284 516h1v15h-1zM285 499h1v31h-1zM286 467h1v33h-1zM287 465h1v15h-1zM288 479h1v39h-1zM289 517h1v14h-1zM290 496h1v33h-1zM291 466h1v31h-1zM292 465h1v15h-1zM293 479h1v39h-1zM294 517h1v14h-1zM295 494h1v35h-1zM296 466h1v29h-1zM297 465h1v17h-1zM298 481h1v39h-1zM299 519h1v12h-1zM300 494h1v34h-1zM301 466h1v29h-1zM302 465h1v17h-1zM303 481h1v40h-1zM304 520h1v11h-1zM305 492h1v35h-1zM306 465h1v28h-1zM307 465h1v19h-1zM308 483h1v38h-1zM309 520h1v11h-1zM310 492h1v35h-1zM311 465h1v28h-1zM312 465h1v21h-1zM313 485h1v38h-1zM314 522h1v9h-1zM315 490h1v36h-1zM316 465h1v26h-1zM317 465h1v21h-1zM318 485h1v38h-1zM319 522h1v9h-1zM320 488h1v38h-1zM321 465h1v24h-1zM322 465h1v22h-1zM323 486h1v38h-1zM324 523h1v8h-1zM325 488h1v37h-1zM326 465h1v24h-1zM327 465h1v22h-1zM328 486h1v39h-1zM329 523h1v8h-1zM330 486h1v38h-1zM331 465h1v22h-1zM332 465h1v24h-1zM333 488h1v37h-1zM334 523h1v8h-1zM335 486h1v38h-1zM336 465h1v22h-1zM337 465h1v26h-1zM338 490h1v36h-1zM339 522h1v9h-1zM340 485h1v38h-1zM341 465h1v21h-1zM342 465h1v26h-1zM343 490h1v36h-1zM344 522h1v9h-1zM345 483h1v40h-1zM346 465h1v19h-1zM347 465h1v28h-1zM348 492h1v35h-1zM349 520h1v11h-1zM350 483h1v38h-1zM351 465h1v19h-1zM352 465h1v28h-1zM353 492h1v36h-1zM354 519h1v12h-1zM355 481h1v39h-1zM356 465h1v17h-1zM357 466h1v29h-1zM358 494h1v34h-1zM359 519h1v12h-1zM360 481h1v39h-1zM361 465h1v17h-1zM362 466h1v31h-1zM363 496h1v33h-1zM364 517h1v14h-1zM365 479h1v39h-1zM366 465h1v15h-1zM367 466h1v31h-1zM368 496h1v33h-1zM369 517h1v14h-1zM370 478h1v40h-1zM371 465h1v14h-1zM372 467h1v33h-1zM373 499h1v31h-1zM374 516h1v15h-1zM375 478h1v39h-1zM376 465h1v14h-1zM377 467h1v33h-1zM378 499h1v31h-1zM379 514h1v17h-1zM380 476h1v39h-1zM381 465h1v12h-1zM382 468h1v34h-1zM383 501h1v29h-1zM384 514h1v17h-1zM385 476h1v39h-1zM386 465h1v12h-1zM387 469h1v35h-1zM388 503h1v28h-1zM389 512h1v19h-1zM390 475h1v38h-1zM391 465h1v11h-1zM392 469h1v35h-1zM393 503h1v28h-1zM394 510h1v21h-1zM395 473h1v38h-1zM396 465h1v9h-1zM397 470h1v36h-1zM398 505h1v26h-1zM399 510h1v21h-1zM400 473h1v38h-1zM401 465h1v9h-1zM402 470h1v36h-1zM403 505h1v26h-1zM404 509h1v22h-1zM405 472h1v38h-1zM406 465h1v8h-1zM407 471h1v37h-1zM408 507h1v24h-1zM409 509h1v22h-1zM410 472h1v38h-1zM411 465h1v8h-1zM412 472h1v38h-1zM413 509h1v22h-1zM414 507h1v24h-1zM415 471h1v37h-1zM416 465h1v8h-1zM417 472h1v38h-1zM418 509h1v22h-1zM419 505h1v26h-1zM420 470h1v36h-1zM421 465h1v9h-1zM422 473h1v38h-1zM423 510h1v21h-1zM424 505h1v26h-1zM425 470h1v36h-1zM426 465h1v9h-1zM427 473h1v38h-1zM428 510h1v21h-1zM429 503h1v28h-1zM430 469h1v35h-1zM431 465h1v11h-1zM432 475h1v38h-1zM433 512h1v19h-1zM434 503h1v28h-1zM435 469h1v35h-1zM436 465h1v12h-1zM437 476h1v39h-1zM438 514h1v17h-1zM439 501h1v29h-1zM440 468h1v34h-1zM441 465h1v12h-1zM442 476h1v39h-1zM443 514h1v17h-1zM444 499h1v31h-1zM445 467h1v33h-1zM446 465h1v14h-1zM447 478h1v39h-1zM448 516h1v15h-1zM449 499h1v31h-1zM450 467h1v33h-1zM451 465h1v14h-1zM452 478h1v40h-1zM453 517h1v14h-1zM454 496h1v33h-1zM455 466h1v31h-1zM456 465h1v15h-1zM457 479h1v39h-1zM458 517h1v14h-1zM459 496h1v33h-1zM460 466h1v31h-1zM461 465h1v17h-1zM462 481h1v39h-1zM463 519h1v12h-1zM464 494h1v34h-1zM465 466h1v29h-1zM466 465h1v17h-1zM467 481h1v39h-1zM468 519h1v12h-1zM469 492h1v36h-1zM470 465h1v28h-1zM471 465h1v19h-1zM472 483h1v38h-1zM473 520h1v11h-1zM474 492h1v35h-1zM475 465h1v28h-1zM476 465h1v19h-1zM477 483h1v40h-1zM478 522h1v9h-1zM479 490h1v36h-1zM480 465h1v26h-1zM481 465h1v21h-1zM482 485h1v38h-1zM483 522h1v9h-1zM484 490h1v36h-1zM485 465h1v26h-1zM486 465h1v22h-1zM487 486h1v38h-1zM488 523h1v8h-1zM489 488h1v37h-1zM490 465h1v24h-1zM491 465h1v22h-1zM492 486h1v38h-1zM493 523h1v8h-1zM494 486h1v39h-1zM495 465h1v22h-1zM496 465h1v24h-1zM497 488h1v37h-1zM498 523h1v8h-1zM499 486h1v38h-1zM500 465h1v22h-1zM501 465h1v24h-1zM502 488h1v38h-1zM503 522h1v9h-1zM504 485h1v38h-1zM505 465h1v21h-1zM506 465h1v26h-1zM507 490h1v36h-1zM508 522h1v9h-1zM509 485h1v38h-1zM510 465h1v21h-1zM511 465h1v28h-1zM512 492h1v35h-1zM513 520h1v11h-1zM514 483h1v38h-1zM515 465h1v19h-1zM516 465h1v28h-1zM517 492h1v35h-1zM518 520h1v11h-1zM519 481h1v40h-1zM520 465h1v17h-1zM521 466h1v29h-1zM522 494h1v34h-1zM523 519h1v12h-1zM524 481h1v39h-1zM525 465h1v17h-1zM526 466h1v29h-1zM527 494h1v35h-1zM528 517h1v14h-1zM529 479h1v39h-1zM530 465h1v15h-1zM531 466h1v31h-1zM532 496h1v33h-1zM533 517h1v14h-1zM534 479h1v39h-1zM535 465h1v15h-1zM536 467h1v33h-1zM537 499h1v31h-1zM538 516h1v15h-1zM539 478h1v39h-1zM540 465h1v14h-1zM541 467h1v33h-1zM542 499h1v31h-1zM543 516h1v15h-1zM544 476h1v41h-1zM545 465h1v12h-1zM546 468h1v34h-1zM547 501h1v29h-1zM548 514h1v17h-1zM549 476h1v39h-1zM550 465h1v12h-1zM551 468h1v34h-1zM552 501h1v30h-1zM553 512h1v19h-1zM554 475h1v38h-1zM555 465h1v11h-1zM556 469h1v35h-1zM557 503h1v28h-1zM558 512h1v19h-1zM559 475h1v38h-1zM560 465h1v11h-1zM561 470h1v36h-1zM562 505h1v26h-1zM563 510h1v21h-1zM564 473h1v38h-1z"/>
<path fill="#000" d="M69 462h497v1h-497zM69 533h497v1h-497zM69 462h1v72h-1zM565 462h1v72h-1zM66 462h1v72h-1zM63 465h3v1h-3zM60 497h6v1h-6zM63 530h3v1h-3zM69 537h497v1h-497zM161 538h1v6h-1zM261 538h1v6h-1zM360 538h1v6h-1zM459 538h1v6h-1zM559 538h1v6h-1zM82 538h1v3h-1zM102 538h1v3h-1zM122 538h1v3h-1zM141 538h1v3h-1zM181 538h1v3h-1zM201 538h1v3h-1zM221 538h1v3h-1zM241 538h1v3h-1zM281 538h1v3h-1zM300 538h1v3h-1zM320 538h1v3h-1zM340 538h1v3h-1zM380 538h1v3h-1zM400 538h1v3h-1zM420 538h1v3h-1zM440 538h1v3h-1zM479 538h1v3h-1zM499 538h1v3h-1zM519 538h1v3h-1zM539 538h1v3h-1zM71 451h1v1h-1zM74 451h6v1h-6zM84 451h1v1h-1zM88 451h1v1h-1zM71 452h1v1h-1zM84 452h8v1h-8zM69 453h5v1h-5zM75 453h4v1h-4zM83 453h1v1h-1zM87 453h1v1h-1zM69 454h1v1h-1zM71 454h1v1h-1zM73 454h1v1h-1zM75 454h1v1h-1zM78 454h1v1h-1zM83 454h1v1h-1zM86 454h5v1h-5zM69 455h1v1h-1zM71 455h1v1h-1zM73 455h1v1h-1zM75 455h4v1h-4zM82 455h2v1h-2zM86 455h1v1h-1zM90 455h1v1h-1zM69 456h1v1h-1zM71 456h1v1h-1zM73 456h1v1h-1zM81 456h1v1h-1zM83 456h1v1h-1zM86 456h5v1h-5zM69 457h1v1h-1zM71 457h1v1h-1zM73 457h7v1h-7zM83 457h1v1h-1zM86 457h1v1h-1zM90 457h1v1h-1zM69 458h1v1h-1zM71 458h4v1h-4zM76 458h1v1h-1zM79 458h1v1h-1zM83 458h1v1h-1zM86 458h3v1h-3zM90 458h1v1h-1zM71 459h1v1h-1zM74 459h6v1h-6zM83 459h1v1h-1zM86 459h1v1h-1zM88 459h3v1h-3zM71 460h1v1h-1zM74 460h1v1h-1zM76 460h1v1h-1zM79 460h1v1h-1zM83 460h1v1h-1zM86 460h1v1h-1zM90 460h1v1h-1zM71 461h1v1h-1zM74 461h6v1h-6zM83 461h1v1h-1zM85 461h7v1h-7z"/>
<text x="93.5" y="460" font-size="12.5" fill="#000" textLength="27.5" lengthAdjust="spacingAndGlyphs">(mV)</text>
<text x="305.7" y="458" font-size="12" fill="#000" textLength="23.4" lengthAdjust="spacingAndGlyphs">CH 5</text>
<text x="566.3" y="531" font-size="12.5" fill="#000" textLength="16.5" lengthAdjust="spacingAndGlyphs">(S)</text>
<text x="59" y="502" font-size="12.5" fill="#000" text-anchor="end">0</text>
<circle cx="608.0" cy="457.9" r="4.3" fill="#808080" stroke="#505050" stroke-width="1" style="shape-rendering:geometricPrecision"/>
<path fill="#d4d0c8" d="M713 463h1v70h-1zM745 463h1v70h-1zM768 463h1v70h-1zM786 463h1v70h-1zM800 463h1v70h-1zM812 463h1v70h-1zM823 463h1v70h-1zM832 463h1v70h-1zM896 463h1v70h-1zM928 463h1v70h-1zM951 463h1v70h-1zM969 463h1v70h-1zM984 463h1v70h-1zM996 463h1v70h-1zM1007 463h1v70h-1zM1016 463h1v70h-1zM1080 463h1v70h-1zM1112 463h1v70h-1zM1135 463h1v70h-1zM658 494h494v1h-494z"/>
<path fill="#808080" d="M841 463h1v70h-1zM1024 463h1v70h-1zM658 530h494v1h-494z"/>
<polyline points="658.5,528.5 711.5,528.5 743.5,527.5 766.5,527.5 784.5,527.5 798.5,526.5 811.5,525.5 821.5,523.5 831.5,517.5 839.5,464.5 847.5,509.5 853.5,521.5 860.5,524.5 866.5,526.5 871.5,527.5 876.5,527.5 881.5,528.5 886.5,528.5 890.5,528.5 894.5,528.5 898.5,528.5 902.5,528.5 905.5,529.5 909.5,529.5 912.5,529.5 915.5,529.5 918.5,529.5 921.5,529.5 924.5,529.5 926.5,529.5 929.5,529.5 932.5,529.5 934.5,529.5 936.5,529.5 939.5,529.5 941.5,529.5 943.5,529.5 945.5,529.5 947.5,529.5 949.5,529.5 951.5,529.5 953.5,529.5 955.5,529.5 957.5,529.5 959.5,529.5 961.5,529.5 962.5,529.5 964.5,529.5 966.5,529.5 967.5,529.5 969.5,529.5 970.5,529.5 972.5,529.5 973.5,529.5 975.5,529.5 976.5,529.5 978.5,529.5 979.5,530.5 980.5,530.5 982.5,530.5 983.5,530.5 984.5,530.5 986.5,530.5 987.5,530.5 988.5,530.5 989.5,530.5 991.5,530.5 992.5,530.5 993.5,530.5 994.5,530.5 995.5,530.5 996.5,530.5 997.5,530.5 998.5,530.5 999.5,530.5 1001.5,530.5 1002.5,530.5 1003.5,530.5 1004.5,530.5 1005.5,530.5 1006.5,530.5 1007.5,530.5 1008.5,530.5 1009.5,530.5 1009.5,530.5 1010.5,530.5 1011.5,530.5 1012.5,530.5 1013.5,530.5 1014.5,530.5 1015.5,530.5 1016.5,530.5 1017.5,530.5 1017.5,530.5 1018.5,530.5 1019.5,530.5 1020.5,530.5 1021.5,530.5 1022.5,530.5 1022.5,530.5 1023.5,530.5 1024.5,530.5 1025.5,530.5 1026.5,530.5 1026.5,530.5 1027.5,530.5 1028.5,530.5 1029.5,530.5 1029.5,530.5 1030.5,530.5 1031.5,530.5 1031.5,530.5 1032.5,530.5 1033.5,530.5 1034.5,530.5 1034.5,530.5 1035.5,530.5 1036.5,530.5 1036.5,530.5 1037.5,530.5 1038.5,530.5 1038.5,530.5 1039.5,530.5 1040.5,530.5 1040.5,530.5 1041.5,530.5 1041.5,530.5 1042.5,530.5 1043.5,530.5 1043.5,530.5 1044.5,530.5 1045.5,530.5 1045.5,530.5 1046.5,530.5 1046.5,530.5 1047.5,530.5 1047.5,530.5 1048.5,530.5 1049.5,530.5 1049.5,530.5 1050.5,530.5 1050.5,530.5 1051.5,530.5 1051.5,530.5 1052.5,530.5 1053.5,530.5 1053.5,530.5 1054.5,530.5 1054.5,530.5 1055.5,530.5 1055.5,530.5 1056.5,530.5 1056.5,530.5 1057.5,530.5 1057.5,530.5 1058.5,530.5 1058.5,530.5 1059.5,530.5 1059.5,530.5 1060.5,530.5 1060.5,530.5 1061.5,530.5 1061.5,530.5 1062.5,530.5 1062.5,530.5 1063.5,530.5 1063.5,530.5 1064.5,530.5 1064.5,530.5 1065.5,530.5 1065.5,530.5 1066.5,530.5 1066.5,530.5 1067.5,530.5 1067.5,530.5 1067.5,530.5 1068.5,530.5 1068.5,530.5 1069.5,530.5 1069.5,530.5 1070.5,530.5 1070.5,530.5 1071.5,530.5 1071.5,530.5 1071.5,530.5 1072.5,530.5 1072.5,530.5 1073.5,530.5 1073.5,530.5 1074.5,530.5 1074.5,530.5 1074.5,530.5 1075.5,530.5 1075.5,530.5 1076.5,530.5 1076.5,530.5 1076.5,530.5 1077.5,530.5 1077.5,530.5 1078.5,530.5 1078.5,530.5 1078.5,530.5 1079.5,530.5 1079.5,530.5 1080.5,530.5 1080.5,530.5 1080.5,530.5 1081.5,530.5 1081.5,530.5 1082.5,530.5 1082.5,530.5 1082.5,530.5 1083.5,530.5 1083.5,530.5 1083.5,530.5 1084.5,530.5 1084.5,530.5 1085.5,530.5 1085.5,530.5 1085.5,530.5 1086.5,530.5 1086.5,530.5 1086.5,530.5 1087.5,530.5 1087.5,530.5 1087.5,530.5 1088.5,530.5 1088.5,530.5 1088.5,530.5 1089.5,530.5 1089.5,530.5 1089.5,530.5 1090.5,530.5 1090.5,530.5 1090.5,530.5 1091.5,530.5 1091.5,530.5 1091.5,530.5 1092.5,530.5 1092.5,530.5 1092.5,530.5 1093.5,530.5 1093.5,530.5 1093.5,530.5 1094.5,530.5 1094.5,530.5 1094.5,530.5 1095.5,530.5 1095.5,530.5 1095.5,530.5 1096.5,530.5 1096.5,530.5 1096.5,530.5 1097.5,530.5 1097.5,530.5 1097.5,530.5 1098.5,530.5 1098.5,530.5 1098.5,530.5 1099.5,530.5 1099.5,530.5 1099.5,530.5 1099.5,530.5 1100.5,530.5 1100.5,530.5 1100.5,530.5 1101.5,530.5 1101.5,530.5 1101.5,530.5 1102.5,530.5 1102.5,530.5 1102.5,530.5 1102.5,530.5 1103.5,530.5 1103.5,530.5 1103.5,530.5 1104.5,530.5 1104.5,530.5 1104.5,530.5 1104.5,530.5 1105.5,530.5 1105.5,530.5 1105.5,530.5 1106.5,530.5 1106.5,530.5 1106.5,530.5 1106.5,530.5 1107.5,530.5 1107.5,530.5 1107.5,530.5 1108.5,530.5 1108.5,530.5 1108.5,530.5 1108.5,530.5 1109.5,530.5 1109.5,530.5 1109.5,530.5 1109.5,530.5 1110.5,530.5 1110.5,530.5 1110.5,530.5 1110.5,530.5 1111.5,530.5 1111.5,530.5 1111.5,530.5 1112.5,530.5 1112.5,530.5 1112.5,530.5 1112.5,530.5 1113.5,530.5 1113.5,530.5 1113.5,530.5 1113.5,530.5 1114.5,530.5 1114.5,530.5 1114.5,530.5 1114.5,530.5 1115.5,530.5 1115.5,530.5 1115.5,530.5 1115.5,530.5 1116.5,530.5 1116.5,530.5 1116.5,530.5 1116.5,530.5 1117.5,530.5 1117.5,530.5 1117.5,530.5 1117.5,530.5 1118.5,530.5 1118.5,530.5 1118.5,530.5 1118.5,530.5 1118.5,530.5 1119.5,530.5 1119.5,530.5 1119.5,530.5 1119.5,530.5 1120.5,530.5 1120.5,530.5 1120.5,530.5 1120.5,530.5 1121.5,530.5 1121.5,530.5 1121.5,530.5 1121.5,530.5 1122.5,530.5 1122.5,530.5 1122.5,530.5 1122.5,530.5 1122.5,530.5 1123.5,530.5 1123.5,530.5 1123.5,530.5 1123.5,530.5 1124.5,530.5 1124.5,530.5 1124.5,530.5 1124.5,530.5 1124.5,530.5 1125.5,530.5 1125.5,530.5 1125.5,530.5 1125.5,530.5 1126.5,530.5 1126.5,530.5 1126.5,530.5 1126.5,530.5 1126.5,530.5 1127.5,530.5 1127.5,530.5 1127.5,530.5 1127.5,530.5 1128.5,530.5 1128.5,530.5 1128.5,530.5 1128.5,530.5 1128.5,530.5 1129.5,530.5 1129.5,530.5 1129.5,530.5 1129.5,530.5 1129.5,530.5 1130.5,530.5 1130.5,530.5 1130.5,530.5 1130.5,530.5 1130.5,530.5 1131.5,530.5 1131.5,530.5 1131.5,530.5 1131.5,530.5 1131.5,530.5 1132.5,530.5 1132.5,530.5 1132.5,530.5 1132.5,530.5 1132.5,530.5 1133.5,530.5 1133.5,530.5 1133.5,530.5 1133.5,530.5 1133.5,530.5 1134.5,530.5 1134.5,530.5 1134.5,530.5 1134.5,530.5 1134.5,530.5 1135.5,530.5 1135.5,530.5 1135.5,530.5 1135.5,530.5 1135.5,530.5 1136.5,530.5 1136.5,530.5 1136.5,530.5 1136.5,530.5 1136.5,530.5 1137.5,530.5 1137.5,530.5 1137.5,530.5 1137.5,530.5 1137.5,530.5 1138.5,530.5 1138.5,530.5 1138.5,530.5 1138.5,530.5 1138.5,530.5 1138.5,530.5 1139.5,530.5 1139.5,530.5 1139.5,530.5 1139.5,530.5 1139.5,530.5 1140.5,530.5 1140.5,530.5 1140.5,530.5 1140.5,530.5 1140.5,530.5 1140.5,530.5 1141.5,530.5 1141.5,530.5 1141.5,530.5 1141.5,530.5 1141.5,530.5 1142.5,530.5 1142.5,530.5 1142.5,530.5 1142.5,530.5 1142.5,530.5 1142.5,530.5 1143.5,530.5 1143.5,530.5 1143.5,530.5 1143.5,530.5 1143.5,530.5 1143.5,530.5 1144.5,530.5 1144.5,530.5 1144.5,530.5 1144.5,530.5 1144.5,530.5 1145.5,530.5 1145.5,530.5 1145.5,530.5 1145.5,530.5 1145.5,530.5 1145.5,530.5 1146.5,530.5 1146.5,530.5 1146.5,530.5 1146.5,530.5 1146.5,530.5 1146.5,530.5 1147.5,530.5 1147.5,530.5 1147.5,530.5 1147.5,530.5 1147.5,530.5 1147.5,530.5 1148.5,530.5 1148.5,530.5 1148.5,530.5 1148.5,530.5 1148.5,530.5 1148.5,530.5 1149.5,530.5 1149.5,530.5 1149.5,530.5 1149.5,530.5 1149.5,530.5 1149.5,530.5 1150.5,530.5 1150.5,530.5 1150.5,530.5 1150.5,530.5 1150.5,530.5 1150.5,530.5 1150.5,530.5 1151.5,530.5 1151.5,530.5 1151.5,530.5 1151.5,530.5 1151.5,530.5 1151.5,530.5" fill="none" stroke="#0000ff" stroke-width="1"/>
<path fill="#000" d="M656 462h497v1h-497zM656 533h497v1h-497zM656 462h1v72h-1z"/>
<path fill="#707070" d="M657 463h1v70h-1z"/>
<path fill="#000" d="M1152 462h1v72h-1zM653 462h1v72h-1z"/>
<path fill="#ff8000" d="M686 463h1v71h-1zM656 525h1v1h1v1h1v1h1v1h-1v1h-1v1h-1v1h-1z"/>
<path fill="#000" d="M650 494h3v1h-3zM656 537h498v1h-498zM657 538h1v6h-1zM841 538h1v6h-1zM1024 538h1v6h-1zM713 538h1v3h-1zM745 538h1v3h-1zM768 538h1v3h-1zM786 538h1v3h-1zM800 538h1v3h-1zM812 538h1v3h-1zM823 538h1v3h-1zM832 538h1v3h-1zM896 538h1v3h-1zM928 538h1v3h-1zM951 538h1v3h-1zM969 538h1v3h-1zM984 538h1v3h-1zM996 538h1v3h-1zM1007 538h1v3h-1zM1016 538h1v3h-1zM1080 538h1v3h-1zM1112 538h1v3h-1zM1135 538h1v3h-1zM1153 538h1v3h-1z"/>
<text x="656.6" y="460" font-size="12.5" fill="#000" textLength="82" lengthAdjust="spacingAndGlyphs">Amplitude(mV)</text>
<text x="881.6" y="458" font-size="12" fill="#000" textLength="45.6" lengthAdjust="spacingAndGlyphs">FFT CH 5</text>
<text x="971.5" y="459" font-size="12.5" fill="#000" textLength="177" lengthAdjust="spacingAndGlyphs">[9.76563e+000,1.53954e+002]</text>
<text x="1153.3" y="531" font-size="12.5" fill="#000" textLength="22.5" lengthAdjust="spacingAndGlyphs">(Hz)</text>
<circle cx="21.1" cy="555.9" r="4.3" fill="#808080" stroke="#505050" stroke-width="1" style="shape-rendering:geometricPrecision"/>
<path fill="#d4d0c8" d="M82 561h1v54h-1zM102 561h1v54h-1zM122 561h1v54h-1zM141 561h1v54h-1zM181 561h1v54h-1zM201 561h1v54h-1zM221 561h1v54h-1zM241 561h1v54h-1zM281 561h1v54h-1zM300 561h1v54h-1zM320 561h1v54h-1zM340 561h1v54h-1zM380 561h1v54h-1zM400 561h1v54h-1zM420 561h1v54h-1zM440 561h1v54h-1zM479 561h1v54h-1zM499 561h1v54h-1zM519 561h1v54h-1zM539 561h1v54h-1zM70 572h495v1h-495zM70 603h495v1h-495z"/>
<path fill="#008080" d="M161 561h1v54h-1zM261 561h1v54h-1zM360 561h1v54h-1zM459 561h1v54h-1zM559 561h1v54h-1zM70 587h495v1h-495z"/>
<path fill="#0000ff" d="M70 575h1v39h-1zM71 596h1v18h-1zM72 567h1v30h-1zM73 562h1v6h-1zM74 566h1v30h-1zM75 595h1v19h-1zM76 596h1v18h-1zM77 567h1v30h-1zM78 562h1v6h-1zM79 566h1v30h-1zM80 595h1v19h-1zM81 595h1v19h-1zM82 566h1v30h-1zM83 562h1v6h-1zM84 567h1v30h-1zM85 596h1v18h-1zM86 595h1v19h-1zM87 566h1v30h-1zM88 562h1v7h-1zM89 568h1v31h-1zM90 598h1v16h-1zM91 593h1v21h-1zM92 566h1v28h-1zM93 562h1v7h-1zM94 568h1v31h-1zM95 598h1v16h-1zM96 591h1v23h-1zM97 565h1v27h-1zM98 562h1v8h-1zM99 569h1v31h-1zM100 599h1v15h-1zM101 591h1v23h-1zM102 565h1v27h-1zM103 562h1v8h-1zM104 569h1v31h-1zM105 599h1v15h-1zM106 590h1v23h-1zM107 564h1v27h-1zM108 562h1v10h-1zM109 571h1v30h-1zM110 600h1v14h-1zM111 590h1v23h-1zM112 564h1v27h-1zM113 562h1v11h-1zM114 572h1v31h-1zM115 602h1v12h-1zM116 588h1v25h-1zM117 564h1v25h-1zM118 562h1v11h-1zM119 572h1v31h-1zM120 602h1v12h-1zM121 587h1v26h-1zM122 563h1v25h-1zM123 562h1v12h-1zM124 573h1v31h-1zM125 603h1v11h-1zM126 587h1v25h-1zM127 563h1v25h-1zM128 562h1v12h-1zM129 573h1v32h-1zM130 604h1v10h-1zM131 585h1v27h-1zM132 563h1v23h-1zM133 562h1v14h-1zM134 575h1v30h-1zM135 604h1v10h-1zM136 585h1v27h-1zM137 563h1v23h-1zM138 562h1v15h-1zM139 576h1v31h-1zM140 606h1v8h-1zM141 584h1v27h-1zM142 562h1v23h-1zM143 562h1v15h-1zM144 576h1v31h-1zM145 606h1v8h-1zM146 582h1v29h-1zM147 562h1v21h-1zM148 562h1v16h-1zM149 577h1v31h-1zM150 607h1v7h-1zM151 582h1v28h-1zM152 562h1v21h-1zM153 562h1v16h-1zM154 577h1v32h-1zM155 608h1v6h-1zM156 580h1v30h-1zM157 562h1v19h-1zM158 562h1v18h-1zM159 579h1v30h-1zM160 608h1v6h-1zM161 580h1v30h-1zM162 562h1v19h-1zM163 562h1v19h-1zM164 580h1v30h-1zM165 608h1v6h-1zM166 579h1v30h-1zM167 562h1v18h-1zM168 562h1v19h-1zM169 580h1v30h-1zM170 608h1v6h-1zM171 577h1v32h-1zM172 562h1v16h-1zM173 562h1v21h-1zM174 582h1v28h-1zM175 607h1v7h-1zM176 577h1v31h-1zM177 562h1v16h-1zM178 562h1v21h-1zM179 582h1v29h-1zM180 606h1v8h-1zM181 576h1v31h-1zM182 562h1v15h-1zM183 562h1v23h-1zM184 584h1v27h-1zM185 606h1v8h-1zM186 576h1v31h-1zM187 562h1v15h-1zM188 563h1v23h-1zM189 585h1v27h-1zM190 604h1v10h-1zM191 575h1v30h-1zM192 562h1v14h-1zM193 563h1v23h-1zM194 585h1v27h-1zM195 604h1v10h-1zM196 573h1v32h-1zM197 562h1v12h-1zM198 563h1v25h-1zM199 587h1v25h-1zM200 603h1v11h-1zM201 573h1v31h-1zM202 562h1v12h-1zM203 563h1v25h-1zM204 587h1v26h-1zM205 602h1v12h-1zM206 572h1v31h-1zM207 562h1v11h-1zM208 564h1v25h-1zM209 588h1v25h-1zM210 602h1v12h-1zM211 572h1v31h-1zM212 562h1v11h-1zM213 564h1v27h-1zM214 590h1v23h-1zM215 600h1v14h-1zM216 571h1v30h-1zM217 562h1v10h-1zM218 564h1v27h-1zM219 590h1v23h-1zM220 599h1v15h-1zM221 569h1v31h-1zM222 562h1v8h-1zM223 565h1v27h-1zM224 591h1v23h-1zM225 599h1v15h-1zM226 569h1v31h-1zM227 562h1v8h-1zM228 565h1v27h-1zM229 591h1v23h-1zM230 598h1v16h-1zM231 568h1v31h-1zM232 562h1v7h-1zM233 566h1v28h-1zM234 593h1v21h-1zM235 598h1v16h-1zM236 568h1v31h-1zM237 562h1v7h-1zM238 566h1v30h-1zM239 595h1v19h-1zM240 596h1v18h-1zM241 567h1v30h-1zM242 562h1v6h-1zM243 566h1v30h-1zM244 595h1v19h-1zM245 595h1v19h-1zM246 566h1v30h-1zM247 562h1v6h-1zM248 567h1v30h-1zM249 596h1v18h-1zM250 595h1v19h-1zM251 566h1v30h-1zM252 562h1v6h-1zM253 567h1v30h-1zM254 596h1v18h-1zM255 593h1v21h-1zM256 566h1v28h-1zM257 562h1v7h-1zM258 568h1v31h-1zM259 598h1v16h-1zM260 593h1v21h-1zM261 566h1v28h-1zM262 562h1v8h-1zM263 569h1v31h-1zM264 599h1v15h-1zM265 591h1v23h-1zM266 565h1v27h-1zM267 562h1v8h-1zM268 569h1v31h-1zM269 599h1v15h-1zM270 590h1v24h-1zM271 564h1v27h-1zM272 562h1v10h-1zM273 571h1v30h-1zM274 600h1v14h-1zM275 590h1v23h-1zM276 564h1v27h-1zM277 562h1v10h-1zM278 571h1v32h-1zM279 602h1v12h-1zM280 588h1v25h-1zM281 564h1v25h-1zM282 562h1v11h-1zM283 572h1v31h-1zM284 602h1v12h-1zM285 588h1v25h-1zM286 564h1v25h-1zM287 562h1v12h-1zM288 573h1v31h-1zM289 603h1v11h-1zM290 587h1v25h-1zM291 563h1v25h-1zM292 562h1v12h-1zM293 573h1v31h-1zM294 603h1v11h-1zM295 585h1v27h-1zM296 563h1v23h-1zM297 562h1v14h-1zM298 575h1v30h-1zM299 604h1v10h-1zM300 585h1v27h-1zM301 563h1v23h-1zM302 562h1v14h-1zM303 575h1v32h-1zM304 606h1v8h-1zM305 584h1v27h-1zM306 562h1v23h-1zM307 562h1v15h-1zM308 576h1v31h-1zM309 606h1v8h-1zM310 584h1v27h-1zM311 562h1v23h-1zM312 562h1v16h-1zM313 577h1v31h-1zM314 607h1v7h-1zM315 582h1v28h-1zM316 562h1v21h-1zM317 562h1v16h-1zM318 577h1v31h-1zM319 607h1v7h-1zM320 580h1v30h-1zM321 562h1v19h-1zM322 562h1v18h-1zM323 579h1v30h-1zM324 608h1v6h-1zM325 580h1v30h-1zM326 562h1v19h-1zM327 562h1v18h-1zM328 579h1v31h-1zM329 608h1v6h-1zM330 579h1v30h-1zM331 562h1v18h-1zM332 562h1v19h-1zM333 580h1v30h-1zM334 608h1v6h-1zM335 579h1v30h-1zM336 562h1v18h-1zM337 562h1v21h-1zM338 582h1v28h-1zM339 607h1v7h-1zM340 577h1v31h-1zM341 562h1v16h-1zM342 562h1v21h-1zM343 582h1v28h-1zM344 607h1v7h-1zM345 576h1v32h-1zM346 562h1v15h-1zM347 562h1v23h-1zM348 584h1v27h-1zM349 606h1v8h-1zM350 576h1v31h-1zM351 562h1v15h-1zM352 562h1v23h-1zM353 584h1v28h-1zM354 604h1v10h-1zM355 575h1v30h-1zM356 562h1v14h-1zM357 563h1v23h-1zM358 585h1v27h-1zM359 604h1v10h-1zM360 575h1v30h-1zM361 562h1v14h-1zM362 563h1v25h-1zM363 587h1v25h-1zM364 603h1v11h-1zM365 573h1v31h-1zM366 562h1v12h-1zM367 563h1v25h-1zM368 587h1v25h-1zM369 603h1v11h-1zM370 572h1v32h-1zM371 562h1v11h-1zM372 564h1v25h-1zM373 588h1v25h-1zM374 602h1v12h-1zM375 572h1v31h-1zM376 562h1v11h-1zM377 564h1v25h-1zM378 588h1v25h-1zM379 600h1v14h-1zM380 571h1v30h-1zM381 562h1v10h-1zM382 564h1v27h-1zM383 590h1v23h-1zM384 600h1v14h-1zM385 571h1v30h-1zM386 562h1v10h-1zM387 565h1v27h-1zM388 591h1v23h-1zM389 599h1v15h-1zM390 569h1v31h-1zM391 562h1v8h-1zM392 565h1v27h-1zM393 591h1v23h-1zM394 598h1v16h-1zM395 568h1v31h-1zM396 562h1v7h-1zM397 566h1v28h-1zM398 593h1v21h-1zM399 598h1v16h-1zM400 568h1v31h-1zM401 562h1v7h-1zM402 566h1v28h-1zM403 593h1v21h-1zM404 596h1v18h-1zM405 567h1v30h-1zM406 562h1v6h-1zM407 566h1v30h-1zM408 595h1v19h-1zM409 596h1v18h-1zM410 567h1v30h-1zM411 562h1v6h-1zM412 567h1v30h-1zM413 596h1v18h-1zM414 595h1v19h-1zM415 566h1v30h-1zM416 562h1v6h-1zM417 567h1v30h-1zM418 596h1v18h-1zM419 593h1v21h-1zM420 566h1v28h-1zM421 562h1v7h-1zM422 568h1v31h-1zM423 598h1v16h-1zM424 593h1v21h-1zM425 566h1v28h-1zM426 562h1v7h-1zM427 568h1v31h-1zM428 598h1v16h-1zM429 591h1v23h-1zM430 565h1v27h-1zM431 562h1v8h-1zM432 569h1v31h-1zM433 599h1v15h-1zM434 591h1v23h-1zM435 565h1v27h-1zM436 562h1v10h-1zM437 571h1v30h-1zM438 600h1v14h-1zM439 590h1v23h-1zM440 564h1v27h-1zM441 562h1v10h-1zM442 571h1v30h-1zM443 600h1v14h-1zM444 588h1v25h-1zM445 564h1v25h-1zM446 562h1v11h-1zM447 572h1v31h-1zM448 602h1v12h-1zM449 588h1v25h-1zM450 564h1v25h-1zM451 562h1v11h-1zM452 572h1v32h-1zM453 603h1v11h-1zM454 587h1v25h-1zM455 563h1v25h-1zM456 562h1v12h-1zM457 573h1v31h-1zM458 603h1v11h-1zM459 587h1v25h-1zM460 563h1v25h-1zM461 562h1v14h-1zM462 575h1v30h-1zM463 604h1v10h-1zM464 585h1v27h-1zM465 563h1v23h-1zM466 562h1v14h-1zM467 575h1v30h-1zM468 604h1v10h-1zM469 584h1v28h-1zM470 562h1v23h-1zM471 562h1v15h-1zM472 576h1v31h-1zM473 606h1v8h-1zM474 584h1v27h-1zM475 562h1v23h-1zM476 562h1v15h-1zM477 576h1v32h-1zM478 607h1v7h-1zM479 582h1v28h-1zM480 562h1v21h-1zM481 562h1v16h-1zM482 577h1v31h-1zM483 607h1v7h-1zM484 582h1v28h-1zM485 562h1v21h-1zM486 562h1v18h-1zM487 579h1v30h-1zM488 608h1v6h-1zM489 580h1v30h-1zM490 562h1v19h-1zM491 562h1v18h-1zM492 579h1v30h-1zM493 608h1v6h-1zM494 579h1v31h-1zM495 562h1v18h-1zM496 562h1v19h-1zM497 580h1v30h-1zM498 608h1v6h-1zM499 579h1v30h-1zM500 562h1v18h-1zM501 562h1v19h-1zM502 580h1v30h-1zM503 607h1v7h-1zM504 577h1v31h-1zM505 562h1v16h-1zM506 562h1v21h-1zM507 582h1v28h-1zM508 607h1v7h-1zM509 577h1v31h-1zM510 562h1v16h-1zM511 562h1v23h-1zM512 584h1v27h-1zM513 606h1v8h-1zM514 576h1v31h-1zM515 562h1v15h-1zM516 562h1v23h-1zM517 584h1v27h-1zM518 606h1v8h-1zM519 575h1v32h-1zM520 562h1v14h-1zM521 563h1v23h-1zM522 585h1v27h-1zM523 604h1v10h-1zM524 575h1v30h-1zM525 562h1v14h-1zM526 563h1v23h-1zM527 585h1v27h-1zM528 603h1v11h-1zM529 573h1v31h-1zM530 562h1v12h-1zM531 563h1v25h-1zM532 587h1v25h-1zM533 603h1v11h-1zM534 573h1v31h-1zM535 562h1v12h-1zM536 564h1v25h-1zM537 588h1v25h-1zM538 602h1v12h-1zM539 572h1v31h-1zM540 562h1v11h-1zM541 564h1v25h-1zM542 588h1v25h-1zM543 602h1v12h-1zM544 571h1v32h-1zM545 562h1v10h-1zM546 564h1v27h-1zM547 590h1v23h-1zM548 600h1v14h-1zM549 571h1v30h-1zM550 562h1v10h-1zM551 564h1v27h-1zM552 590h1v24h-1zM553 599h1v15h-1zM554 569h1v31h-1zM555 562h1v8h-1zM556 565h1v27h-1zM557 591h1v23h-1zM558 599h1v15h-1zM559 569h1v31h-1zM560 562h1v8h-1zM561 566h1v28h-1zM562 593h1v21h-1zM563 598h1v16h-1zM564 568h1v31h-1z"/>
<path fill="#000" d="M69 560h497v1h-497zM69 615h497v1h-497zM69 560h1v56h-1zM565 560h1v56h-1zM66 560h1v56h-1zM63 572h3v1h-3zM60 587h6v1h-6zM63 603h3v1h-3zM69 619h497v1h-497zM161 620h1v6h-1zM261 620h1v6h-1zM360 620h1v6h-1zM459 620h1v6h-1zM559 620h1v6h-1zM82 620h1v3h-1zM102 620h1v3h-1zM122 620h1v3h-1zM141 620h1v3h-1zM181 620h1v3h-1zM201 620h1v3h-1zM221 620h1v3h-1zM241 620h1v3h-1zM281 620h1v3h-1zM300 620h1v3h-1zM320 620h1v3h-1zM340 620h1v3h-1zM380 620h1v3h-1zM400 620h1v3h-1zM420 620h1v3h-1zM440 620h1v3h-1zM479 620h1v3h-1zM499 620h1v3h-1zM519 620h1v3h-1zM539 620h1v3h-1zM71 549h1v1h-1zM74 549h6v1h-6zM84 549h1v1h-1zM88 549h1v1h-1zM71 550h1v1h-1zM84 550h8v1h-8zM69 551h5v1h-5zM75 551h4v1h-4zM83 551h1v1h-1zM87 551h1v1h-1zM69 552h1v1h-1zM71 552h1v1h-1zM73 552h1v1h-1zM75 552h1v1h-1zM78 552h1v1h-1zM83 552h1v1h-1zM86 552h5v1h-5zM69 553h1v1h-1zM71 553h1v1h-1zM73 553h1v1h-1zM75 553h4v1h-4zM82 553h2v1h-2zM86 553h1v1h-1zM90 553h1v1h-1zM69 554h1v1h-1zM71 554h1v1h-1zM73 554h1v1h-1zM81 554h1v1h-1zM83 554h1v1h-1zM86 554h5v1h-5zM69 555h1v1h-1zM71 555h1v1h-1zM73 555h7v1h-7zM83 555h1v1h-1zM86 555h1v1h-1zM90 555h1v1h-1zM69 556h1v1h-1zM71 556h4v1h-4zM76 556h1v1h-1zM79 556h1v1h-1zM83 556h1v1h-1zM86 556h3v1h-3zM90 556h1v1h-1zM71 557h1v1h-1zM74 557h6v1h-6zM83 557h1v1h-1zM86 557h1v1h-1zM88 557h3v1h-3zM71 558h1v1h-1zM74 558h1v1h-1zM76 558h1v1h-1zM79 558h1v1h-1zM83 558h1v1h-1zM86 558h1v1h-1zM90 558h1v1h-1zM71 559h1v1h-1zM74 559h6v1h-6zM83 559h1v1h-1zM85 559h7v1h-7z"/>
<text x="93.5" y="558" font-size="12.5" fill="#000" textLength="27.5" lengthAdjust="spacingAndGlyphs">(mV)</text>
<text x="305.7" y="556" font-size="12" fill="#000" textLength="23.4" lengthAdjust="spacingAndGlyphs">CH 6</text>
<text x="566.3" y="613" font-size="12.5" fill="#000" textLength="16.5" lengthAdjust="spacingAndGlyphs">(S)</text>
<text x="59" y="592" font-size="12.5" fill="#000" text-anchor="end">0</text>
<circle cx="608.0" cy="555.9" r="4.3" fill="#808080" stroke="#505050" stroke-width="1" style="shape-rendering:geometricPrecision"/>
<path fill="#d4d0c8" d="M713 561h1v54h-1zM745 561h1v54h-1zM768 561h1v54h-1zM786 561h1v54h-1zM800 561h1v54h-1zM812 561h1v54h-1zM823 561h1v54h-1zM832 561h1v54h-1zM896 561h1v54h-1zM928 561h1v54h-1zM951 561h1v54h-1zM969 561h1v54h-1zM984 561h1v54h-1zM996 561h1v54h-1zM1007 561h1v54h-1zM1016 561h1v54h-1zM1080 561h1v54h-1zM1112 561h1v54h-1zM1135 561h1v54h-1zM658 578h494v1h-494z"/>
<path fill="#808080" d="M841 561h1v54h-1zM1024 561h1v54h-1zM658 613h494v1h-494z"/>
<polyline points="658.5,611.5 711.5,611.5 743.5,611.5 766.5,611.5 784.5,610.5 798.5,610.5 811.5,609.5 821.5,607.5 831.5,603.5 839.5,562.5 847.5,597.5 853.5,606.5 860.5,608.5 866.5,610.5 871.5,610.5 876.5,611.5 881.5,611.5 886.5,611.5 890.5,611.5 894.5,612.5 898.5,612.5 902.5,612.5 905.5,612.5 909.5,612.5 912.5,612.5 915.5,612.5 918.5,612.5 921.5,612.5 924.5,612.5 926.5,612.5 929.5,612.5 932.5,612.5 934.5,612.5 936.5,612.5 939.5,612.5 941.5,612.5 943.5,612.5 945.5,612.5 947.5,612.5 949.5,612.5 951.5,612.5 953.5,612.5 955.5,612.5 957.5,612.5 959.5,612.5 961.5,613.5 962.5,613.5 964.5,613.5 966.5,613.5 967.5,613.5 969.5,613.5 970.5,613.5 972.5,613.5 973.5,613.5 975.5,613.5 976.5,613.5 978.5,613.5 979.5,613.5 980.5,613.5 982.5,613.5 983.5,613.5 984.5,613.5 986.5,613.5 987.5,613.5 988.5,613.5 989.5,613.5 991.5,613.5 992.5,613.5 993.5,613.5 994.5,613.5 995.5,613.5 996.5,613.5 997.5,613.5 998.5,613.5 999.5,613.5 1001.5,613.5 1002.5,613.5 1003.5,613.5 1004.5,613.5 1005.5,613.5 1006.5,613.5 1007.5,613.5 1008.5,613.5 1009.5,613.5 1009.5,613.5 1010.5,613.5 1011.5,613.5 1012.5,613.5 1013.5,613.5 1014.5,613.5 1015.5,613.5 1016.5,613.5 1017.5,613.5 1017.5,613.5 1018.5,613.5 1019.5,613.5 1020.5,613.5 1021.5,613.5 1022.5,613.5 1022.5,613.5 1023.5,613.5 1024.5,613.5 1025.5,613.5 1026.5,613.5 1026.5,613.5 1027.5,613.5 1028.5,613.5 1029.5,613.5 1029.5,613.5 1030.5,613.5 1031.5,613.5 1031.5,613.5 1032.5,613.5 1033.5,613.5 1034.5,613.5 1034.5,613.5 1035.5,613.5 1036.5,613.5 1036.5,613.5 1037.5,613.5 1038.5,613.5 1038.5,613.5 1039.5,613.5 1040.5,613.5 1040.5,613.5 1041.5,613.5 1041.5,613.5 1042.5,613.5 1043.5,613.5 1043.5,613.5 1044.5,613.5 1045.5,613.5 1045.5,613.5 1046.5,613.5 1046.5,613.5 1047.5,613.5 1047.5,613.5 1048.5,613.5 1049.5,613.5 1049.5,613.5 1050.5,613.5 1050.5,613.5 1051.5,613.5 1051.5,613.5 1052.5,613.5 1053.5,613.5 1053.5,613.5 1054.5,613.5 1054.5,613.5 1055.5,613.5 1055.5,613.5 1056.5,613.5 1056.5,613.5 1057.5,613.5 1057.5,613.5 1058.5,613.5 1058.5,613.5 1059.5,613.5 1059.5,613.5 1060.5,613.5 1060.5,613.5 1061.5,613.5 1061.5,613.5 1062.5,613.5 1062.5,613.5 1063.5,613.5 1063.5,613.5 1064.5,613.5 1064.5,613.5 1065.5,613.5 1065.5,613.5 1066.5,613.5 1066.5,613.5 1067.5,613.5 1067.5,613.5 1067.5,613.5 1068.5,613.5 1068.5,613.5 1069.5,613.5 1069.5,613.5 1070.5,613.5 1070.5,613.5 1071.5,613.5 1071.5,613.5 1071.5,613.5 1072.5,613.5 1072.5,613.5 1073.5,613.5 1073.5,613.5 1074.5,613.5 1074.5,613.5 1074.5,613.5 1075.5,613.5 1075.5,613.5 1076.5,613.5 1076.5,613.5 1076.5,613.5 1077.5,613.5 1077.5,613.5 1078.5,613.5 1078.5,613.5 1078.5,613.5 1079.5,613.5 1079.5,613.5 1080.5,613.5 1080.5,613.5 1080.5,613.5 1081.5,613.5 1081.5,613.5 1082.5,613.5 1082.5,613.5 1082.5,613.5 1083.5,613.5 1083.5,613.5 1083.5,613.5 1084.5,613.5 1084.5,613.5 1085.5,613.5 1085.5,613.5 1085.5,613.5 1086.5,613.5 1086.5,613.5 1086.5,613.5 1087.5,613.5 1087.5,613.5 1087.5,613.5 1088.5,613.5 1088.5,613.5 1088.5,613.5 1089.5,613.5 1089.5,613.5 1089.5,613.5 1090.5,613.5 1090.5,613.5 1090.5,613.5 1091.5,613.5 1091.5,613.5 1091.5,613.5 1092.5,613.5 1092.5,613.5 1092.5,613.5 1093.5,613.5 1093.5,613.5 1093.5,613.5 1094.5,613.5 1094.5,613.5 1094.5,613.5 1095.5,613.5 1095.5,613.5 1095.5,613.5 1096.5,613.5 1096.5,613.5 1096.5,613.5 1097.5,613.5 1097.5,613.5 1097.5,613.5 1098.5,613.5 1098.5,613.5 1098.5,613.5 1099.5,613.5 1099.5,613.5 1099.5,613.5 1099.5,613.5 1100.5,613.5 1100.5,613.5 1100.5,613.5 1101.5,613.5 1101.5,613.5 1101.5,613.5 1102.5,613.5 1102.5,613.5 1102.5,613.5 1102.5,613.5 1103.5,613.5 1103.5,613.5 1103.5,613.5 1104.5,613.5 1104.5,613.5 1104.5,613.5 1104.5,613.5 1105.5,613.5 1105.5,613.5 1105.5,613.5 1106.5,613.5 1106.5,613.5 1106.5,613.5 1106.5,613.5 1107.5,613.5 1107.5,613.5 1107.5,613.5 1108.5,613.5 1108.5,613.5 1108.5,613.5 1108.5,613.5 1109.5,613.5 1109.5,613.5 1109.5,613.5 1109.5,613.5 1110.5,613.5 1110.5,613.5 1110.5,613.5 1110.5,613.5 1111.5,613.5 1111.5,613.5 1111.5,613.5 1112.5,613.5 1112.5,613.5 1112.5,613.5 1112.5,613.5 1113.5,613.5 1113.5,613.5 1113.5,613.5 1113.5,613.5 1114.5,613.5 1114.5,613.5 1114.5,613.5 1114.5,613.5 1115.5,613.5 1115.5,613.5 1115.5,613.5 1115.5,613.5 1116.5,613.5 1116.5,613.5 1116.5,613.5 1116.5,613.5 1117.5,613.5 1117.5,613.5 1117.5,613.5 1117.5,613.5 1118.5,613.5 1118.5,613.5 1118.5,613.5 1118.5,613.5 1118.5,613.5 1119.5,613.5 1119.5,613.5 1119.5,613.5 1119.5,613.5 1120.5,613.5 1120.5,613.5 1120.5,613.5 1120.5,613.5 1121.5,613.5 1121.5,613.5 1121.5,613.5 1121.5,613.5 1122.5,613.5 1122.5,613.5 1122.5,613.5 1122.5,613.5 1122.5,613.5 1123.5,613.5 1123.5,613.5 1123.5,613.5 1123.5,613.5 1124.5,613.5 1124.5,613.5 1124.5,613.5 1124.5,613.5 1124.5,613.5 1125.5,613.5 1125.5,613.5 1125.5,613.5 1125.5,613.5 1126.5,613.5 1126.5,613.5 1126.5,613.5 1126.5,613.5 1126.5,613.5 1127.5,613.5 1127.5,613.5 1127.5,613.5 1127.5,613.5 1128.5,613.5 1128.5,613.5 1128.5,613.5 1128.5,613.5 1128.5,613.5 1129.5,613.5 1129.5,613.5 1129.5,613.5 1129.5,613.5 1129.5,613.5 1130.5,613.5 1130.5,613.5 1130.5,613.5 1130.5,613.5 1130.5,613.5 1131.5,613.5 1131.5,613.5 1131.5,613.5 1131.5,613.5 1131.5,613.5 1132.5,613.5 1132.5,613.5 1132.5,613.5 1132.5,613.5 1132.5,613.5 1133.5,613.5 1133.5,613.5 1133.5,613.5 1133.5,613.5 1133.5,613.5 1134.5,613.5 1134.5,613.5 1134.5,613.5 1134.5,613.5 1134.5,613.5 1135.5,613.5 1135.5,613.5 1135.5,613.5 1135.5,613.5 1135.5,613.5 1136.5,613.5 1136.5,613.5 1136.5,613.5 1136.5,613.5 1136.5,613.5 1137.5,613.5 1137.5,613.5 1137.5,613.5 1137.5,613.5 1137.5,613.5 1138.5,613.5 1138.5,613.5 1138.5,613.5 1138.5,613.5 1138.5,613.5 1138.5,613.5 1139.5,613.5 1139.5,613.5 1139.5,613.5 1139.5,613.5 1139.5,613.5 1140.5,613.5 1140.5,613.5 1140.5,613.5 1140.5,613.5 1140.5,613.5 1140.5,613.5 1141.5,613.5 1141.5,613.5 1141.5,613.5 1141.5,613.5 1141.5,613.5 1142.5,613.5 1142.5,613.5 1142.5,613.5 1142.5,613.5 1142.5,613.5 1142.5,613.5 1143.5,613.5 1143.5,613.5 1143.5,613.5 1143.5,613.5 1143.5,613.5 1143.5,613.5 1144.5,613.5 1144.5,613.5 1144.5,613.5 1144.5,613.5 1144.5,613.5 1145.5,613.5 1145.5,613.5 1145.5,613.5 1145.5,613.5 1145.5,613.5 1145.5,613.5 1146.5,613.5 1146.5,613.5 1146.5,613.5 1146.5,613.5 1146.5,613.5 1146.5,613.5 1147.5,613.5 1147.5,613.5 1147.5,613.5 1147.5,613.5 1147.5,613.5 1147.5,613.5 1148.5,613.5 1148.5,613.5 1148.5,613.5 1148.5,613.5 1148.5,613.5 1148.5,613.5 1149.5,613.5 1149.5,613.5 1149.5,613.5 1149.5,613.5 1149.5,613.5 1149.5,613.5 1150.5,613.5 1150.5,613.5 1150.5,613.5 1150.5,613.5 1150.5,613.5 1150.5,613.5 1150.5,613.5 1151.5,613.5 1151.5,613.5 1151.5,613.5 1151.5,613.5 1151.5,613.5 1151.5,613.5" fill="none" stroke="#0000ff" stroke-width="1"/>
<path fill="#000" d="M656 560h497v1h-497zM656 615h497v1h-497zM656 560h1v56h-1z"/>
<path fill="#707070" d="M657 561h1v54h-1z"/>
<path fill="#000" d="M1152 560h1v56h-1zM653 560h1v56h-1z"/>
<path fill="#ff8000" d="M686 561h1v55h-1zM656 608h1v1h1v1h1v1h1v1h-1v1h-1v1h-1v1h-1z"/>
<path fill="#000" d="M650 578h3v1h-3zM656 619h498v1h-498zM657 620h1v6h-1zM841 620h1v6h-1zM1024 620h1v6h-1zM713 620h1v3h-1zM745 620h1v3h-1zM768 620h1v3h-1zM786 620h1v3h-1zM800 620h1v3h-1zM812 620h1v3h-1zM823 620h1v3h-1zM832 620h1v3h-1zM896 620h1v3h-1zM928 620h1v3h-1zM951 620h1v3h-1zM969 620h1v3h-1zM984 620h1v3h-1zM996 620h1v3h-1zM1007 620h1v3h-1zM1016 620h1v3h-1zM1080 620h1v3h-1zM1112 620h1v3h-1zM1135 620h1v3h-1zM1153 620h1v3h-1z"/>
<text x="656.6" y="558" font-size="12.5" fill="#000" textLength="82" lengthAdjust="spacingAndGlyphs">Amplitude(mV)</text>
<text x="881.6" y="556" font-size="12" fill="#000" textLength="45.6" lengthAdjust="spacingAndGlyphs">FFT CH 6</text>
<text x="971.5" y="557" font-size="12.5" fill="#000" textLength="177" lengthAdjust="spacingAndGlyphs">[9.76563e+000,1.23163e+002]</text>
<text x="1153.3" y="613" font-size="12.5" fill="#000" textLength="22.5" lengthAdjust="spacingAndGlyphs">(Hz)</text>
<text x="160.6" y="638" font-size="12.5" fill="#000" text-anchor="middle">25.40</text>
<text x="260.6" y="638" font-size="12.5" fill="#000" text-anchor="middle">25.60</text>
<text x="359.6" y="638" font-size="12.5" fill="#000" text-anchor="middle">25.80</text>
<text x="458.6" y="638" font-size="12.5" fill="#000" text-anchor="middle">26.00</text>
<text x="558.6" y="638" font-size="12.5" fill="#000" text-anchor="middle">26.20</text>
<text x="656.6" y="638" font-size="12.5" fill="#000" text-anchor="middle">10</text>
<text x="841.5" y="638" font-size="12.5" fill="#000" text-anchor="middle">100</text>
<text x="1024.0" y="638" font-size="12.5" fill="#000" text-anchor="middle">1000</text>
<path fill="#000" d="M714 128h1v1h-1zM714 129h1v1h-1zM715 129h1v1h-1zM714 130h1v1h-1z"/>
<path fill="#fff" d="M715 130h1v1h-1z"/>
<path fill="#000" d="M716 130h1v1h-1zM714 131h1v1h-1z"/>
<path fill="#fff" d="M715 131h1v1h-1zM716 131h1v1h-1z"/>
<path fill="#000" d="M717 131h1v1h-1zM714 132h1v1h-1z"/>
<path fill="#fff" d="M715 132h1v1h-1zM716 132h1v1h-1zM717 132h1v1h-1z"/>
<path fill="#000" d="M718 132h1v1h-1zM714 133h1v1h-1z"/>
<path fill="#fff" d="M715 133h1v1h-1zM716 133h1v1h-1zM717 133h1v1h-1zM718 133h1v1h-1z"/>
<path fill="#000" d="M719 133h1v1h-1zM714 134h1v1h-1z"/>
<path fill="#fff" d="M715 134h1v1h-1zM716 134h1v1h-1zM717 134h1v1h-1zM718 134h1v1h-1zM719 134h1v1h-1z"/>
<path fill="#000" d="M720 134h1v1h-1zM714 135h1v1h-1z"/>
<path fill="#fff" d="M715 135h1v1h-1zM716 135h1v1h-1zM717 135h1v1h-1zM718 135h1v1h-1zM719 135h1v1h-1zM720 135h1v1h-1z"/>
<path fill="#000" d="M721 135h1v1h-1zM714 136h1v1h-1z"/>
<path fill="#fff" d="M715 136h1v1h-1zM716 136h1v1h-1zM717 136h1v1h-1zM718 136h1v1h-1zM719 136h1v1h-1zM720 136h1v1h-1zM721 136h1v1h-1z"/>
<path fill="#000" d="M722 136h1v1h-1zM714 137h1v1h-1z"/>
<path fill="#fff" d="M715 137h1v1h-1zM716 137h1v1h-1zM717 137h1v1h-1zM718 137h1v1h-1zM719 137h1v1h-1zM720 137h1v1h-1zM721 137h1v1h-1zM722 137h1v1h-1z"/>
<path fill="#000" d="M723 137h1v1h-1zM714 138h1v1h-1z"/>
<path fill="#fff" d="M715 138h1v1h-1zM716 138h1v1h-1zM717 138h1v1h-1zM718 138h1v1h-1zM719 138h1v1h-1zM720 138h1v1h-1zM721 138h1v1h-1zM722 138h1v1h-1zM723 138h1v1h-1z"/>
<path fill="#000" d="M724 138h1v1h-1zM714 139h1v1h-1z"/>
<path fill="#fff" d="M715 139h1v1h-1zM716 139h1v1h-1zM717 139h1v1h-1zM718 139h1v1h-1zM719 139h1v1h-1zM720 139h1v1h-1z"/>
<path fill="#000" d="M721 139h1v1h-1zM722 139h1v1h-1zM723 139h1v1h-1zM724 139h1v1h-1zM725 139h1v1h-1zM714 140h1v1h-1z"/>
<path fill="#fff" d="M715 140h1v1h-1zM716 140h1v1h-1zM717 140h1v1h-1z"/>
<path fill="#000" d="M718 140h1v1h-1z"/>
<path fill="#fff" d="M719 140h1v1h-1zM720 140h1v1h-1z"/>
<path fill="#000" d="M721 140h1v1h-1zM714 141h1v1h-1z"/>
<path fill="#fff" d="M715 141h1v1h-1zM716 141h1v1h-1z"/>
<path fill="#000" d="M717 141h1v1h-1zM718 141h1v1h-1z"/>
<path fill="#fff" d="M719 141h1v1h-1zM720 141h1v1h-1z"/>
<path fill="#000" d="M721 141h1v1h-1zM714 142h1v1h-1z"/>
<path fill="#fff" d="M715 142h1v1h-1z"/>
<path fill="#000" d="M716 142h1v1h-1zM719 142h1v1h-1z"/>
<path fill="#fff" d="M720 142h1v1h-1zM721 142h1v1h-1z"/>
<path fill="#000" d="M722 142h1v1h-1zM714 143h1v1h-1zM715 143h1v1h-1zM719 143h1v1h-1z"/>
<path fill="#fff" d="M720 143h1v1h-1zM721 143h1v1h-1z"/>
<path fill="#000" d="M722 143h1v1h-1zM714 144h1v1h-1zM720 144h1v1h-1z"/>
<path fill="#fff" d="M721 144h1v1h-1zM722 144h1v1h-1z"/>
<path fill="#000" d="M723 144h1v1h-1zM720 145h1v1h-1z"/>
<path fill="#fff" d="M721 145h1v1h-1zM722 145h1v1h-1z"/>
<path fill="#000" d="M723 145h1v1h-1zM721 146h1v1h-1z"/>
<path fill="#fff" d="M722 146h1v1h-1zM723 146h1v1h-1z"/>
<path fill="#000" d="M724 146h1v1h-1zM721 147h1v1h-1z"/>
<path fill="#fff" d="M722 147h1v1h-1zM723 147h1v1h-1z"/>
<path fill="#000" d="M724 147h1v1h-1zM722 148h1v1h-1zM723 148h1v1h-1z"/>
</svg>
</body></html>
